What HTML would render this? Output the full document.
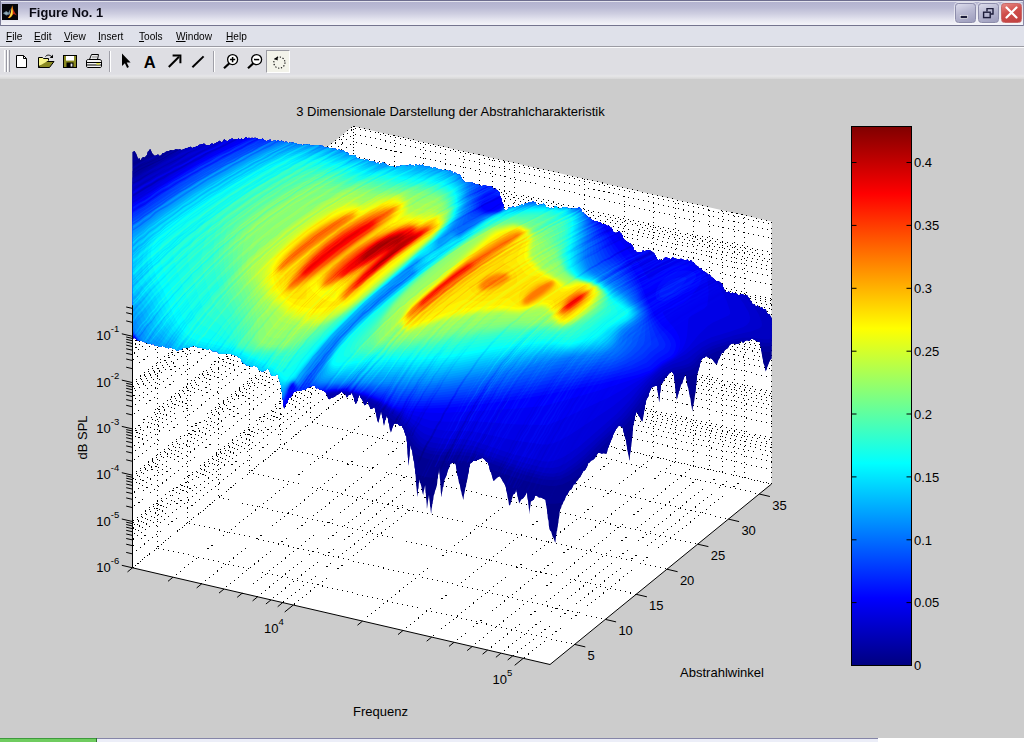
<!DOCTYPE html>
<html><head><meta charset="utf-8"><title>Figure No. 1</title>
<style>
html,body{margin:0;padding:0}
body{width:1024px;height:742px;overflow:hidden;background:#cccccc;position:relative;font-family:"Liberation Sans",Arial,sans-serif}
.g{stroke-dasharray:1 4.1}
.g2{stroke-dasharray:1 2}
#tb{position:absolute;left:0;top:0;width:1024px;height:26px;box-sizing:border-box;
 background:linear-gradient(to bottom,#6d6d8e 0,#6d6d8e 1px,#e4e4ee 1px,#e4e4ee 2px,#b3b3cf 2px,#bcbcd5 8px,#cfcfe1 14px,#e6e6f0 20px,#f2f2f8 24px,#f2f2f8 25px,#74748f 25px);
 border-left:1px solid #7c7c98;border-right:1px solid #8c8ca8}
#tb .ttl{position:absolute;left:27.5px;top:5.2px;font:bold 13.5px/16px "Liberation Sans",Arial,sans-serif;color:#0a0a14;white-space:nowrap;display:inline-block;transform-origin:0 0;transform:scaleX(.95)}
.wb{position:absolute;top:2.5px;width:20.5px;height:20px;border-radius:3.5px;box-sizing:border-box;border:1px solid #8d8dab;
 background:linear-gradient(160deg,#dcdcec 0,#b9b9d2 45%,#9c9cbc 100%);box-shadow:0 0 0 1px rgba(255,255,255,.55)}
.wb.cl{background:linear-gradient(160deg,#e88a84 0,#cf4d4a 45%,#c04040 100%);border-color:#c86a6a}
#mb{position:absolute;left:0;top:26px;width:1024px;height:20px;background:#dfe1ea}
#mb span{position:absolute;top:2.5px;font:11px/14px "Liberation Sans",Arial,sans-serif;color:#000;white-space:nowrap;display:inline-block;transform-origin:0 0;transform:scaleX(.92)}
#mb u{text-decoration:underline;text-underline-offset:1px}
#sep{position:absolute;left:0;top:46px;width:1024px;height:2px;background:linear-gradient(to bottom,#9b9ba3 0,#9b9ba3 1px,#fbfbfd 1px)}
#tl{position:absolute;left:0;top:48px;width:1024px;height:31px;background:linear-gradient(to bottom,#dedee3 0,#dedee3 26px,#e6e6e8 28px,#d6d6d6 31px)}
#tl .grip{position:absolute;left:4px;top:2px;width:6px;height:22px;background:linear-gradient(to right,#fff 0,#fff 1px,#e4e4e8 1px,#e4e4e8 2px,#9a9aa4 2px,#9a9aa4 3px,#fff 3px,#fff 4px,#e4e4e8 4px,#e4e4e8 5px,#9a9aa4 5px)}
#tl .vs{position:absolute;top:3px;width:2px;height:21px;background:linear-gradient(to right,#a0a0a8 0,#a0a0a8 1px,#fff 1px)}
#tl .pressed{position:absolute;left:266px;top:2px;width:24px;height:23px;box-sizing:border-box;background:#f3f3ea;border:1px solid;border-color:#9a9aa2 #fff #fff #9a9aa2}
#tlsvg{position:absolute;left:0;top:48px}
#bot{position:absolute;left:0;top:738px;width:878px;height:4px;background:linear-gradient(to bottom,#8585a8 0,#8585a8 1px,#eceef8 1px)}
#bot i{position:absolute;left:0;top:0;width:96px;height:4px;background:linear-gradient(to bottom,#3d9a3d 0,#3d9a3d 1px,#6fcc5f 1px);border-right:1px solid #2f6f2f}
#botw{position:absolute;left:878px;top:738px;width:146px;height:4px;background:#fff}

</style></head><body>
<svg width="1024" height="742" viewBox="0 0 1024 742" style="position:absolute;left:0;top:0">
<polygon points="132.5,567.8 550.0,664.5 771.5,484.0 771.5,221.5 353.0,126.2 132.5,305.3" fill="#fff"/>
<g fill="none" stroke="#000" stroke-width="1" shape-rendering="crispEdges"><path class="g" stroke-dashoffset="1.2" d="M173.0,577.2 L394.5,396.7"/><path class="g" stroke-dashoffset="0.5" d="M201.7,583.8 L423.2,403.3"/><path class="g" stroke-dashoffset="2.0" d="M224.0,589.0 L445.5,408.5"/><path class="g" stroke-dashoffset="0.8" d="M242.2,593.2 L463.7,412.7"/><path class="g" stroke-dashoffset="0.3" d="M257.6,596.8 L479.1,416.3"/><path class="g" stroke-dashoffset="2.0" d="M271.0,599.9 L492.5,419.4"/><path class="g" stroke-dashoffset="4.6" d="M282.7,602.6 L504.2,422.1"/><path class="g" stroke-dashoffset="4.0" d="M293.3,605.0 L514.8,424.5"/><path class="g" stroke-dashoffset="3.8" d="M362.5,621.1 L584.0,440.6"/><path class="g" stroke-dashoffset="1.1" d="M403.0,630.5 L624.5,450.0"/><path class="g" stroke-dashoffset="2.7" d="M431.7,637.1 L653.2,456.6"/><path class="g" stroke-dashoffset="1.4" d="M454.0,642.3 L675.5,461.8"/><path class="g" stroke-dashoffset="0.9" d="M472.2,646.5 L693.7,466.0"/><path class="g" stroke-dashoffset="0.5" d="M487.6,650.1 L709.1,469.6"/><path class="g" stroke-dashoffset="1.1" d="M501.0,653.1 L722.5,472.6"/><path class="g" stroke-dashoffset="4.6" d="M512.7,655.9 L734.2,475.4"/><path class="g" stroke-dashoffset="4.1" d="M523.3,658.3 L744.8,477.8"/><path class="g" stroke-dashoffset="4.0" d="M157.1,547.7 L574.6,644.4"/><path class="g" stroke-dashoffset="4.0" d="M187.9,522.7 L605.4,619.4"/><path class="g" stroke-dashoffset="1.0" d="M218.6,497.6 L636.1,594.3"/><path class="g" stroke-dashoffset="1.5" d="M249.4,472.5 L666.9,569.2"/><path class="g" stroke-dashoffset="3.1" d="M280.2,447.5 L697.7,544.2"/><path class="g" stroke-dashoffset="3.7" d="M310.9,422.4 L728.4,519.1"/><path class="g" stroke-dashoffset="4.3" d="M341.7,397.3 L759.2,494.0"/><path class="g" stroke-dashoffset="4.4" d="M157.1,547.7 L157.1,285.2"/><path class="g" stroke-dashoffset="0.4" d="M187.9,522.7 L187.9,260.2"/><path class="g" stroke-dashoffset="3.0" d="M218.6,497.6 L218.6,235.1"/><path class="g" stroke-dashoffset="3.4" d="M249.4,472.5 L249.4,210.0"/><path class="g" stroke-dashoffset="2.5" d="M280.2,447.5 L280.2,185.0"/><path class="g" stroke-dashoffset="0.9" d="M310.9,422.4 L310.9,159.9"/><path class="g" stroke-dashoffset="2.4" d="M341.7,397.3 L341.7,134.8"/><path class="g" stroke-dashoffset="0.4" d="M132.5,553.9 L354.0,373.4"/><path class="g" stroke-dashoffset="4.7" d="M132.5,545.7 L354.0,365.2"/><path class="g" stroke-dashoffset="4.3" d="M132.5,539.9 L354.0,359.4"/><path class="g" stroke-dashoffset="2.7" d="M132.5,535.4 L354.0,354.9"/><path class="g" stroke-dashoffset="1.5" d="M132.5,531.8 L354.0,351.3"/><path class="g" stroke-dashoffset="4.5" d="M132.5,528.7 L354.0,348.2"/><path class="g" stroke-dashoffset="2.9" d="M132.5,526.0 L354.0,345.5"/><path class="g" stroke-dashoffset="4.4" d="M132.5,523.6 L354.0,343.1"/><path class="g" stroke-dashoffset="4.2" d="M132.5,521.5 L354.0,341.0"/><path class="g" stroke-dashoffset="2.5" d="M132.5,507.6 L354.0,327.1"/><path class="g" stroke-dashoffset="2.1" d="M132.5,499.4 L354.0,318.9"/><path class="g" stroke-dashoffset="3.0" d="M132.5,493.6 L354.0,313.1"/><path class="g" stroke-dashoffset="2.2" d="M132.5,489.1 L354.0,308.6"/><path class="g" stroke-dashoffset="0.8" d="M132.5,485.5 L354.0,305.0"/><path class="g" stroke-dashoffset="1.5" d="M132.5,482.4 L354.0,301.9"/><path class="g" stroke-dashoffset="4.1" d="M132.5,479.7 L354.0,299.2"/><path class="g" stroke-dashoffset="0.2" d="M132.5,477.3 L354.0,296.8"/><path class="g" stroke-dashoffset="0.2" d="M132.5,475.2 L354.0,294.7"/><path class="g" stroke-dashoffset="3.1" d="M132.5,461.3 L354.0,280.8"/><path class="g" stroke-dashoffset="1.4" d="M132.5,453.1 L354.0,272.6"/><path class="g" stroke-dashoffset="2.7" d="M132.5,447.3 L354.0,266.8"/><path class="g" stroke-dashoffset="2.4" d="M132.5,442.8 L354.0,262.3"/><path class="g" stroke-dashoffset="1.7" d="M132.5,439.2 L354.0,258.7"/><path class="g" stroke-dashoffset="5.0" d="M132.5,436.1 L354.0,255.6"/><path class="g" stroke-dashoffset="1.0" d="M132.5,433.4 L354.0,252.9"/><path class="g" stroke-dashoffset="2.1" d="M132.5,431.0 L354.0,250.5"/><path class="g" stroke-dashoffset="1.0" d="M132.5,428.9 L354.0,248.4"/><path class="g" stroke-dashoffset="3.2" d="M132.5,415.0 L354.0,234.5"/><path class="g" stroke-dashoffset="1.4" d="M132.5,406.8 L354.0,226.3"/><path class="g" stroke-dashoffset="1.8" d="M132.5,401.0 L354.0,220.5"/><path class="g" stroke-dashoffset="3.7" d="M132.5,396.5 L354.0,216.0"/><path class="g" stroke-dashoffset="1.6" d="M132.5,392.9 L354.0,212.4"/><path class="g" stroke-dashoffset="2.8" d="M132.5,389.8 L354.0,209.3"/><path class="g" stroke-dashoffset="4.5" d="M132.5,387.1 L354.0,206.6"/><path class="g" stroke-dashoffset="0.5" d="M132.5,384.7 L354.0,204.2"/><path class="g" stroke-dashoffset="0.3" d="M132.5,382.6 L354.0,202.1"/><path class="g" stroke-dashoffset="1.1" d="M132.5,368.7 L354.0,188.2"/><path class="g" stroke-dashoffset="3.8" d="M132.5,360.5 L354.0,180.0"/><path class="g" stroke-dashoffset="3.1" d="M132.5,354.7 L354.0,174.2"/><path class="g" stroke-dashoffset="1.2" d="M132.5,350.2 L354.0,169.7"/><path class="g" stroke-dashoffset="1.7" d="M132.5,346.6 L354.0,166.1"/><path class="g" stroke-dashoffset="0.9" d="M132.5,343.5 L354.0,163.0"/><path class="g" stroke-dashoffset="2.3" d="M132.5,340.8 L354.0,160.3"/><path class="g" stroke-dashoffset="0.2" d="M132.5,338.4 L354.0,157.9"/><path class="g" stroke-dashoffset="3.5" d="M132.5,336.3 L354.0,155.8"/><path class="g" stroke-dashoffset="4.5" d="M132.5,322.4 L354.0,141.9"/><path class="g" stroke-dashoffset="4.8" d="M132.5,314.2 L354.0,133.7"/><path class="g" stroke-dashoffset="3.7" d="M132.5,308.4 L354.0,127.9"/><path class="g" stroke-dashoffset="4.8" d="M394.5,396.7 L394.5,134.2"/><path class="g" stroke-dashoffset="0.1" d="M423.2,403.3 L423.2,140.8"/><path class="g" stroke-dashoffset="1.4" d="M445.5,408.5 L445.5,146.0"/><path class="g" stroke-dashoffset="4.8" d="M463.7,412.7 L463.7,150.2"/><path class="g" stroke-dashoffset="3.9" d="M479.1,416.3 L479.1,153.8"/><path class="g" stroke-dashoffset="2.1" d="M492.5,419.4 L492.5,156.9"/><path class="g" stroke-dashoffset="4.7" d="M504.2,422.1 L504.2,159.6"/><path class="g" stroke-dashoffset="3.1" d="M514.8,424.5 L514.8,162.0"/><path class="g" stroke-dashoffset="4.1" d="M584.0,440.6 L584.0,178.1"/><path class="g" stroke-dashoffset="1.5" d="M624.5,450.0 L624.5,187.5"/><path class="g" stroke-dashoffset="1.0" d="M653.2,456.6 L653.2,194.1"/><path class="g" stroke-dashoffset="2.2" d="M675.5,461.8 L675.5,199.3"/><path class="g" stroke-dashoffset="0.7" d="M693.7,466.0 L693.7,203.5"/><path class="g" stroke-dashoffset="1.9" d="M709.1,469.6 L709.1,207.1"/><path class="g" stroke-dashoffset="4.8" d="M722.5,472.6 L722.5,210.1"/><path class="g" stroke-dashoffset="1.7" d="M734.2,475.4 L734.2,212.9"/><path class="g" stroke-dashoffset="0.0" d="M744.8,477.8 L744.8,215.3"/><path class="g" stroke-dashoffset="0.2" d="M354.0,373.4 L771.5,470.1"/><path class="g" stroke-dashoffset="0.8" d="M354.0,365.2 L771.5,461.9"/><path class="g" stroke-dashoffset="3.9" d="M354.0,359.4 L771.5,456.1"/><path class="g" stroke-dashoffset="1.8" d="M354.0,354.9 L771.5,451.6"/><path class="g" stroke-dashoffset="1.5" d="M354.0,351.3 L771.5,448.0"/><path class="g" stroke-dashoffset="0.5" d="M354.0,348.2 L771.5,444.9"/><path class="g" stroke-dashoffset="4.9" d="M354.0,345.5 L771.5,442.2"/><path class="g" stroke-dashoffset="2.1" d="M354.0,343.1 L771.5,439.8"/><path class="g" stroke-dashoffset="1.0" d="M354.0,341.0 L771.5,437.7"/><path class="g" stroke-dashoffset="0.3" d="M354.0,327.1 L771.5,423.8"/><path class="g" stroke-dashoffset="0.3" d="M354.0,318.9 L771.5,415.6"/><path class="g" stroke-dashoffset="0.8" d="M354.0,313.1 L771.5,409.8"/><path class="g" stroke-dashoffset="3.4" d="M354.0,308.6 L771.5,405.3"/><path class="g" stroke-dashoffset="0.7" d="M354.0,305.0 L771.5,401.7"/><path class="g" stroke-dashoffset="0.2" d="M354.0,301.9 L771.5,398.6"/><path class="g" stroke-dashoffset="2.5" d="M354.0,299.2 L771.5,395.9"/><path class="g" stroke-dashoffset="1.2" d="M354.0,296.8 L771.5,393.5"/><path class="g" stroke-dashoffset="5.0" d="M354.0,294.7 L771.5,391.4"/><path class="g" stroke-dashoffset="0.6" d="M354.0,280.8 L771.5,377.5"/><path class="g" stroke-dashoffset="2.6" d="M354.0,272.6 L771.5,369.3"/><path class="g" stroke-dashoffset="3.9" d="M354.0,266.8 L771.5,363.5"/><path class="g" stroke-dashoffset="2.0" d="M354.0,262.3 L771.5,359.0"/><path class="g" stroke-dashoffset="4.9" d="M354.0,258.7 L771.5,355.4"/><path class="g" stroke-dashoffset="2.4" d="M354.0,255.6 L771.5,352.3"/><path class="g" stroke-dashoffset="1.2" d="M354.0,252.9 L771.5,349.6"/><path class="g" stroke-dashoffset="2.1" d="M354.0,250.5 L771.5,347.2"/><path class="g" stroke-dashoffset="0.2" d="M354.0,248.4 L771.5,345.1"/><path class="g" stroke-dashoffset="2.1" d="M354.0,234.5 L771.5,331.2"/><path class="g" stroke-dashoffset="1.2" d="M354.0,226.3 L771.5,323.0"/><path class="g" stroke-dashoffset="4.4" d="M354.0,220.5 L771.5,317.2"/><path class="g" stroke-dashoffset="4.2" d="M354.0,216.0 L771.5,312.7"/><path class="g" stroke-dashoffset="2.5" d="M354.0,212.4 L771.5,309.1"/><path class="g" stroke-dashoffset="0.2" d="M354.0,209.3 L771.5,306.0"/><path class="g" stroke-dashoffset="1.3" d="M354.0,206.6 L771.5,303.3"/><path class="g" stroke-dashoffset="1.2" d="M354.0,204.2 L771.5,300.9"/><path class="g" stroke-dashoffset="1.0" d="M354.0,202.1 L771.5,298.8"/><path class="g" stroke-dashoffset="1.2" d="M354.0,188.2 L771.5,284.9"/><path class="g" stroke-dashoffset="4.3" d="M354.0,180.0 L771.5,276.7"/><path class="g" stroke-dashoffset="0.7" d="M354.0,174.2 L771.5,270.9"/><path class="g" stroke-dashoffset="0.3" d="M354.0,169.7 L771.5,266.4"/><path class="g" stroke-dashoffset="4.6" d="M354.0,166.1 L771.5,262.8"/><path class="g" stroke-dashoffset="2.8" d="M354.0,163.0 L771.5,259.7"/><path class="g" stroke-dashoffset="5.0" d="M354.0,160.3 L771.5,257.0"/><path class="g" stroke-dashoffset="2.0" d="M354.0,157.9 L771.5,254.6"/><path class="g" stroke-dashoffset="4.5" d="M354.0,155.8 L771.5,252.5"/><path class="g" stroke-dashoffset="3.3" d="M354.0,141.9 L771.5,238.6"/><path class="g" stroke-dashoffset="4.0" d="M354.0,133.7 L771.5,230.4"/><path class="g" stroke-dashoffset="3.7" d="M354.0,127.9 L771.5,224.6"/><path class="g2" stroke-dashoffset="2.5" d="M132.5,567.8 L354.0,387.3"/><path class="g2" stroke-dashoffset="0.5" d="M354.0,387.3 L771.5,484.0"/><path class="g2" stroke-dashoffset="1.1" d="M354.0,387.3 L353.0,126.2"/><path class="g" stroke-dashoffset="4.4" d="M132.5,305.3 L353.0,126.2"/><path class="g" stroke-dashoffset="4.5" d="M353.0,126.2 L771.5,221.5"/><path class="g" stroke-dashoffset="4.6" d="M771.5,484.0 L771.5,221.5"/></g>
<defs><clipPath id="sil"><polygon points="132.6,152 134.7,151 135.5,152.8 136.2,153.7 137,156 138.2,158.9 139.3,158.1 140.5,160.4 141.9,158.1 143.2,156.9 144.6,157.4 146,156 146.9,155.1 147.7,151.8 148.6,151.2 149.4,149.7 150.3,149 151.2,150.9 152,153 153.5,154.7 155,156 156.6,155 158.1,154.5 159.7,155.9 161.2,155.2 162.8,153 164.3,153.1 165.9,151.8 167.4,151.3 169,151 170.6,150.3 172.1,150.4 173.7,150.6 175.2,149.6 176.8,149.4 178.3,149.8 179.8,149.6 181.4,150.1 182.9,149.8 184.5,149 186,148.3 187.5,147.9 189,147.5 190.5,146.7 192,148.3 193.5,147.6 195,147.3 196.5,146.5 198,146 199.6,144.8 201.1,144.8 202.7,144.1 204.2,143.7 205.8,145.2 207.3,144.9 208.9,145.7 210.4,144.5 212,143.6 213.5,144.4 215,143.5 216.5,142.8 218,142.2 219.6,140.7 221.1,142.5 222.6,142.1 224.1,139.5 225.6,140.3 227.2,141.7 228.9,140.1 230.5,139.5 232.1,138.4 233.7,140.1 235.4,139.6 237,139.7 238.5,138.6 240,139.8 241.5,138.5 243,140.3 244.5,138.2 246,137.1 247.5,138.7 249,137.7 250.5,139 252,137.8 253.5,138.8 255,137.8 256.5,138.6 258,139.1 259.5,139.2 261,139.3 262.6,138.7 264.1,140.2 265.6,141.1 267.1,141.2 268.6,140.3 270.2,139.8 271.8,141.8 273.3,141.2 274.9,140 276.5,141.6 278.1,140 279.7,142 281.3,140.7 282.8,141.5 284.4,142.5 286,141.7 287.5,142.6 289,143.8 290.4,141.9 291.9,143.5 293.4,142.2 294.9,143.8 296.4,143.5 297.9,145.1 299.4,144.6 300.8,144.2 302.3,145.6 303.8,144.8 305.4,144.2 307,145.1 308.7,144.3 310.3,145.3 311.9,145.7 313.5,145.8 315.1,144.9 316.8,145 318.4,145.2 320,146 321.6,145.5 323.1,146.6 324.6,147.7 326.2,147.7 327.8,147.6 329.3,148.1 330.9,148.3 332.4,149.1 334,148.3 335.6,149.1 337.1,151 338.7,149.3 340.3,151 341.9,150 343.4,150.5 345,152 346.5,153.1 347.9,152.7 349.4,155.5 350.9,155.7 352.3,155.6 353.8,155.2 355.2,155.5 356.7,157.9 358.2,158.7 359.8,159.1 361.3,159.5 362.8,159.3 364.4,160.6 365.9,159.1 367.4,160.1 369,161.3 370.5,161.7 372.1,161.4 373.6,161 375.1,162.7 376.7,163.3 378.2,162.8 379.7,164.7 381.1,163.5 382.6,162.6 384.1,163.3 385.5,163.9 387,165.3 388.5,165.9 389.9,166.5 391.4,166.4 392.9,166.8 394.3,167 395.8,167.1 397.3,166.7 398.8,166.8 400.4,166.1 401.9,165.3 403.4,165 404.9,165.3 406.5,165.9 408,165.7 409.5,164.4 411.2,165.3 412.8,165 414.5,166.5 416.2,164.1 417.9,166.2 419.5,164.8 421.2,165.7 422.8,164.4 424.3,166.5 425.9,166.8 427.5,166.4 429,165.9 430.6,167.2 432.2,168.7 433.8,167.2 435.3,167.4 436.9,168.7 438.4,169.2 439.9,169.4 441.4,169.4 442.9,171.1 444.4,169.4 445.9,170.7 447.4,170.6 448.9,171.3 450.4,170.5 451.9,171.4 453.4,173.2 454.9,172.7 456.4,173.5 457.6,175.2 458.8,174.4 460.1,175 461.3,177.4 462.5,180.3 463.8,180.7 465,182.6 466.2,182.3 467.8,182.5 469.4,182.5 471,182.5 472.6,182.6 474.2,183.8 475.8,184.8 477.4,184 479,185.4 480.6,185.7 482.2,186.3 483.8,185.3 485.3,185 486.8,186.5 488.3,185.9 489.8,186.7 491.2,186.6 492.6,187.2 494,190.1 495.3,188.5 496.7,190.5 498.1,190.9 499.5,192.6 499.9,194.7 500.3,196.9 500.7,196.6 501.1,198.3 501.5,199.5 501.9,201.6 502.4,203.6 502.8,205.5 503.2,204.1 503.6,208.7 504,208.6 504.4,210.2 505.9,210.3 507.3,210.2 508.8,207.5 510.2,208.4 511.7,207 513.2,206.7 514.6,207.9 516.1,206.8 517.5,206.6 519,206.2 520.5,205.3 522.1,204.1 523.6,205.6 525.1,203.6 526.7,203.7 528.2,203 529.7,202.1 531.3,202.6 532.8,201.4 534.1,202.2 535.4,202.7 536.7,205.3 538.4,206.1 540.1,204.3 541.8,204.9 543.5,203.3 544.5,205.1 545.5,205 546.5,208.2 548.2,207.1 549.8,209.4 551.5,207.7 553.2,209.4 554.9,206.6 556.5,206.6 558.2,208.2 559.9,209 561.6,208.3 563.3,207.5 564.9,207.3 566.6,207.3 568.3,209 570,208.2 571.5,209 573.1,208.8 574.6,208.3 576.1,208.2 577.6,208.1 579.2,207.6 580.7,208.2 581.7,211.5 582.6,212.5 583.6,213.1 584.8,214.7 586,214.8 587.1,216.7 588.3,217 589.5,218 591,219.6 592.4,220.1 593.9,221 595.4,221 596.8,220.9 598.3,222.3 599.7,222.2 601.2,222.9 602.8,224.4 604.3,224.3 605.9,224.9 607.4,226 609,225.8 610,228.2 611,227.5 612,228.7 613,231.7 614.6,232.5 616.1,233.2 617.7,232 619.2,231.6 620.8,233.6 621.6,234.1 622.4,235.7 623.1,238.2 623.9,239.1 624.7,240.5 626.2,240.9 627.6,242.3 629,243.1 630.5,243.4 631.3,244.7 632.2,245.4 633,246.7 633.9,250.1 634.7,251 635.6,250.4 636.4,252.2 638.1,251.9 639.7,252.1 641.4,252.4 643,250.5 644.7,251.5 646.3,250.5 648,250.2 649.7,250.3 651.3,251.4 653,252.2 653.8,254.1 654.7,253.8 655.5,256.2 656.3,257.3 657.2,259.3 658,261 659.6,259.2 661.2,261.1 662.9,260 664.5,258 666.1,257.5 667.7,258 669.4,258.7 671,259.2 672.7,257.3 674.3,258.4 676,258.7 677.6,259.4 679.3,259.8 680.9,258.8 682.6,259.2 684.2,260.5 685.8,260.6 687.5,259.6 689.1,262.2 690.7,260.1 692.3,262.1 693.5,262.5 694.8,264.2 696,265.8 697.2,265.9 698.4,266.9 699.6,269 700.9,268.6 702.1,270 703.3,271.8 704.5,271.8 705.8,272.5 707,273.4 708.2,275 709.5,274.4 710.7,276.3 711.9,277.8 713.3,278.1 714.7,279.9 716.1,281 717.5,281.6 718.9,281.4 720.3,282.8 721.7,283.6 722.4,284.4 723,286.8 723.7,288.9 724.3,289.8 725,290.5 725.6,292.4 727.3,292.8 728.9,291.5 730.6,293.9 732.3,292.6 734,294 735.6,293.1 737.3,294.4 738.9,296 740.6,294 742.2,293.9 743.8,294.9 745.5,295.2 747.1,295.3 747.9,298.1 748.8,297.5 749.6,298.7 750.5,301.2 751.3,301.2 752.2,303.8 753,305.1 754.5,304.1 755.9,307.4 757.4,305.2 758.9,307.2 760.3,308 761.8,306.9 763.2,309 764.7,309 765.7,309 766.6,312.3 767.6,314 768.6,314.5 769.6,314.2 770.5,316.7 771.5,318 771.5,358.6 770.3,359.8 769.2,361.9 768,365 767.2,367.1 766.4,369.9 765.6,371.4 765.1,368.7 764.6,365.6 764,364.5 763.5,363.1 763,360 762.6,357.8 762.3,356.3 761.9,354.2 761.6,351.6 761.2,349.7 760.9,346.8 760.5,346.9 760.2,343.1 759.8,342 757.4,341.6 755,340 753,338.9 751,339.1 749,341.1 747,340 745,341 743.1,342.8 741.1,340.8 739.2,343.6 737.2,343.8 735.3,344.2 733.4,343.2 731.4,343.7 729.5,345 727.9,347.9 726.4,349 724.8,350.1 723.3,352.7 721.7,352.8 720.9,355.3 720.1,356.5 719.2,358.8 718.4,359.8 717.6,362.3 716.8,364.5 715.2,363.2 713.5,361 711.9,358.7 709.9,358 708,357.4 706,355.7 704.3,358.1 702.7,358.1 701,360.6 700.5,362.6 699.9,364.3 699.4,367.1 698.8,368.4 698.3,370.4 697.7,372.8 697.2,374.3 697,376.6 696.8,380.2 696.6,380 696.4,382.8 696.1,384.8 695.9,388.8 695.7,389.2 695.5,391.4 695.3,393.8 694.9,396.1 694.5,399.6 694.2,401.2 693.8,403.2 693.4,405.7 693,406.8 692.7,408.7 692.3,411.4 691.9,408.8 691.6,405.9 691.2,405.4 690.8,401.7 690.5,399.1 690.1,397.6 689.8,397 689.4,393.8 689,391.9 688.5,387.9 688.1,387.4 687.7,386.1 687.2,383.8 686.8,381 686.4,378.9 685.9,375.2 685.5,374.3 684.7,375.8 683.9,378.1 683,380.5 682.2,383.6 681.4,384 680.6,386 680,388.3 679.5,390.8 678.9,391.2 678.4,393.7 677.8,395.5 677.3,397.8 676.7,399.7 676.5,396.8 676.2,394.7 676,393.8 675.7,392.6 675.5,389.3 675.2,387.6 675,385.1 674.8,382.3 674.5,380.9 674.3,378.1 674,376.2 673.8,374.3 671.8,371.4 670.1,372.6 668.4,374.3 666.7,376.8 665,378.2 663.7,380.4 662.3,383.3 661,384 660.8,386.1 660.6,388.2 660.4,390.7 660.2,392.8 659.9,393 659.7,397.7 659.5,398.9 659.3,401.1 659.1,402.6 658.9,399.7 658.6,396.8 658.4,395.3 658.1,394.6 657.9,392.6 657.6,389.8 657.4,387.6 657.1,386 655.2,386 653.2,386.5 651.3,388 650.5,389.9 649.7,391 649,393.6 648.2,396.8 647.4,397.8 646.2,400 645.8,402.6 645.4,404.7 645,405.2 644.6,409.3 644.2,409.9 643.9,413.8 643.5,414.6 643.1,417.5 642.7,419.6 642.3,421.5 641.1,419.9 639.9,417.2 638.8,416.1 637.6,413 636.4,411.7 635.9,414 635.4,415 635,416.6 634.5,420.3 634,421.5 633.5,423.5 633.3,425.2 633.1,426.1 632.9,430.4 632.6,430.9 632.4,434.8 632.2,437.4 632,436.8 631.8,440.2 631.5,441.8 631.3,443.7 631.1,447 630.9,446.7 630.7,450.4 630.5,451.2 630.2,453.6 630,455.7 629.8,458.5 629.6,460.6 629.2,460 628.8,456.7 628.4,455.1 628,452.8 627.6,450.3 627.2,448.4 626.8,445.5 626.4,442.9 626,440.3 625.6,439 625,437.3 624.4,435.1 623.9,433.1 623.3,430.6 622.7,427.4 620.8,426.2 618.8,425.4 617.6,427 616.4,428.5 615.3,430.6 614.1,432.8 612.9,435.2 612.1,438.2 611.4,439.6 610.6,441.4 609.9,443.5 609.1,445.2 608.4,447.3 607.6,449.2 606.9,453.1 606.1,453.8 603.8,453.2 601.6,453.4 599.3,452.8 597.7,453.3 596,456.3 594.4,458.5 592.8,460.1 591.1,460.6 589.5,462.6 588.3,462.9 587.2,466.3 586,468.4 584.8,470.5 583.6,470.4 582.5,472.8 581.3,474.9 580.1,477.3 579,478.1 577.8,480.2 576.5,480.9 575.2,484.5 573.9,484.1 572.6,487.1 571.2,489.5 569.9,490.1 568.6,492.1 567.3,494.9 566,495.8 565.2,498.2 564.3,500.5 563.5,501.3 562.7,504.3 561.9,505.1 561,508.2 560.2,509.5 559.9,511.1 559.6,512.8 559.3,515.6 559,518 558.7,518.9 558.4,522.8 558.1,523.8 557.8,526.6 557.4,528.2 557.1,530.7 556.8,531.1 556.5,533.4 556.2,535.6 555.9,537.5 555.6,541.1 555.3,542.7 554.5,541 553.6,537.9 552.8,537.3 551.9,534.3 551.1,531.4 550.2,530.7 549.4,529 549.1,527 548.8,525.2 548.6,521.8 548.3,519.8 548,519.4 547.7,517.3 547.5,514.4 547.2,513.8 546.9,509.3 546.6,508 546.3,505.7 546.1,505.2 545.8,502 545.5,499.7 543.3,498.8 541.1,497.6 538.9,497.5 536.7,495.8 535.2,495.8 533.8,499.7 532.3,500.6 530.8,501.7 530.6,504.7 530.4,505 530.1,507.4 529.9,508.7 529.7,511.6 529.5,514.4 529.3,511.3 529,509.6 528.8,508 528.6,505.4 528.3,504.4 528.1,501.2 527.8,499.4 527.6,497.9 527.4,496.6 527.1,493 526.9,491.9 525.8,494.4 524.7,496.3 523.6,497.8 522.4,498.9 521.3,499.5 520.2,501.6 519.1,503.6 518.7,500.7 518.3,499.8 517.9,497.8 517.4,495 517,492.5 516.6,491.9 516.2,489 515.3,492.4 514.5,494 513.6,493.8 512.8,495.9 511.9,499.3 511,502.2 510.2,505 509.3,505.6 508.9,504.6 508.4,500.8 508,498.9 507.6,497.6 507.1,493.9 506.7,491.5 506.3,490.2 505.8,486.9 505.4,486 504.2,483.3 503,481.8 501.9,479.6 500.7,477.4 499.5,476.2 497.6,477.2 495.6,479 493.7,481.1 493,479.4 492.4,477.3 491.7,474.8 491.1,472.2 490.4,472.1 489.8,469.9 489.1,466.3 488.5,464.8 487.8,462.6 486.1,461.5 484.5,459.3 482.8,458 481,458.2 479.1,459.2 477.3,460 475.5,461 473.7,460.6 471.8,462.4 470,463.8 469.6,467 469.2,467.3 468.8,471.5 468.4,473.2 468,474.9 467.6,476.7 467.2,479.5 466.8,482.4 466.4,483 466,486.6 465.6,487.3 465.2,488.7 464.8,491.5 464.4,493.3 464,494.8 463.6,498.2 463.2,500 462.7,497.3 462.2,495.7 461.8,494.4 461.3,491.8 460.8,490.6 460.3,488.1 459.8,484.6 459.4,483.9 458.9,482.4 458.4,479.5 458,476.6 457.5,475.4 457.1,473.4 456.7,470.2 456.3,468 455.8,464.8 455.4,463.8 452.9,462.8 450.5,463.8 449.8,465.1 449.1,467.8 448.3,469.3 447.6,471.1 446.9,473.9 446.1,476.2 445.4,477.6 444.7,479.5 444.3,481.1 443.8,484.1 443.4,487 442.9,487.2 442.5,490.7 442.1,492.3 441.6,495.9 441.2,497 441.1,494.1 440.9,493.1 440.8,491.6 440.6,488.1 440.5,485.5 440.3,484.5 440.2,482.3 440.1,480.2 439.9,478.2 439.8,474.9 439.6,473.4 439.5,472.4 439.3,469.7 439.2,467.8 438.9,469.8 438.6,472 438.3,473.6 438,475.6 437.8,477.9 437.5,479.4 437.2,483.2 436.9,485.3 436.3,487.5 435.7,489.6 435.1,490.8 434.5,493.7 433.9,495 433.6,496.6 433.3,499.6 432.9,500.9 432.6,504 432.3,503.9 432,507 431.6,508.8 431.3,512.8 431,513.7 430.8,511.3 430.6,509.9 430.3,506.7 430.1,506.7 429.9,503.4 429.7,501.8 429.4,499.5 429.2,498.1 429,495 428.7,497 428.3,499 428,500.9 427.7,503.8 427.3,506.5 427,508.8 426.8,507.6 426.7,504 426.5,502.6 426.3,500 426.1,499 426,496.3 425.8,493.2 425.6,493.1 425.4,490.8 425.3,487.2 425.1,485.3 424.6,488 424.1,490 423.7,491.8 423.2,495 422.6,493.2 422.1,491.6 421.5,487.3 421,485.3 420.4,483.3 419.9,482.7 419.3,479.5 419.1,482.1 418.8,483.8 418.6,487.5 418.3,489.2 418.1,489.1 417.8,493.3 417.6,494.7 417.3,497 417.1,494.9 416.9,491.6 416.8,491.1 416.6,489.1 416.4,486.7 416.2,485.9 416,482.4 415.9,480.3 415.7,476.8 415.5,475.1 415.3,473 415.1,470.7 414.9,468.4 414.8,468.2 414.6,467 414.4,463.8 414,461.8 413.5,460.1 413.1,457.3 412.7,455.2 412.2,451.5 411.8,449.7 411.4,448.6 410.9,446.2 410.5,444.3 410.3,445.9 410.1,448.6 409.9,450.6 409.7,451.8 409.5,456 409.3,456.9 409.1,460 408.9,461.6 408.7,463 408.5,465.8 408.4,464.4 408.2,461.8 408.1,459.1 407.9,457.6 407.8,455.4 407.6,453.5 407.5,449.9 407.4,448.3 407.2,447.3 407.1,444.2 406.9,441.6 406.8,441.3 406.6,439.2 406.5,436.5 405.5,435.2 404.6,432.2 403.6,429.1 402.7,427.7 401.7,425.7 399.7,425.9 397.8,424 395.8,423.4 393.8,423.8 393.1,426.1 392.4,427.7 391.6,430.3 390.9,432.6 390.5,430.6 390,430.1 389.6,427.3 389.2,425 388.7,422.7 388.3,421.4 387.9,418.3 387.4,417.6 387,415 386.4,416.5 385.8,419.3 385.2,420 384.6,422.8 384,425.7 383.6,423.4 383.2,422.6 382.8,418 382.3,417.7 381.9,414.9 381.5,412.3 381.1,411 380.6,412.3 380.1,415.4 379.6,417.3 379.2,419.2 378.7,421.3 378.2,422.8 377.7,421.3 377.2,419.9 376.7,417.2 376.2,414.7 375.8,412.5 375.3,411.3 374.8,407.9 374.3,407.1 372.4,408.4 370.4,409.1 369.6,406.2 368.9,405.2 368.1,402.4 367.4,401.3 365.9,404.8 364.5,405.2 363.5,403 362.5,399.9 361.6,399.1 360.6,397.6 359.6,394.4 358.8,396 358,398.6 357.3,400.9 356.5,402.8 355.7,404.2 355.1,402.1 354.4,401.3 353.8,397.3 353.1,396.6 352.4,392.9 351.8,392.5 350.2,394.7 348.5,395.1 346.9,397.4 345.3,394.1 343.6,394.1 342,391.5 340.2,392.7 338.4,394.3 336.6,395 334.7,396.7 332.9,397.5 331.1,397.9 329.3,399.3 328.3,398.7 327.4,396 326.4,393.7 325.4,391.5 323.6,391.1 321.8,389.6 320,389.8 318.1,387.4 316.3,388.7 314.5,385.3 312.7,385.6 310.9,386.5 309,387.2 307.1,388.1 305.3,389.8 303,389.3 300.6,390.8 298.3,390.3 295.9,391.2 293.6,392.2 292,395.3 290.5,397.3 288.9,398 288,400.3 287,403.2 286.1,403.4 285.1,405.8 284.2,408.6 283.9,407.2 283.6,404.4 283.3,402.4 283,400.1 282.7,398.2 282.4,396.9 282.2,395.2 281.9,390.9 281.6,390.2 281.3,388.5 281,385.5 280.7,384 280,381.4 279.3,380 278.6,376.9 277.9,375 277.2,373.4 274.9,375.7 272.5,375.7 271.3,374.9 270.1,372.6 269,369.6 267.8,368.7 265.5,369.9 263.1,371.3 260.8,371.1 259.2,370.3 257.7,367.6 256.1,366.4 253.8,365.4 251.4,366.7 249.1,365.6 246.7,365.2 245.1,363.6 243.6,363.2 242,361.6 240.4,357.9 238.9,357.6 237.3,355.8 235,355.3 232.6,354.4 230.3,353.5 228,353.5 225.6,353.6 223.2,353.4 220.9,353.5 218.9,353.3 217,351.2 215,351 213,351.2 211.1,349.5 209.1,348.8 207.1,349.7 205.1,348.6 203.1,348.5 201.1,347.2 199.1,347.5 197.1,347 195.1,346 192.8,345.9 190.4,346.4 188.4,348 186.5,347.2 184.6,348 182.6,347.8 180.6,349.9 178.7,349.9 176.7,350.4 174.8,349 172.8,348.8 170.8,346.7 168.9,348.3 166.9,347.6 164.6,347 162.2,345.8 159.8,347 157.5,345.2 155.5,346.1 153.5,343.8 151.5,344.2 149.5,343.4 147.5,343.5 145.5,342.2 143.5,341.7 141.4,340.7 139.3,341 137.1,340.1 135,338 132.9,338.2"/></clipPath>
<path id="c1" d="M163.4 127.5 L163.8 126.5 498.3 126.5 499.9 127.5 505.5 129.5 538.5 139.9 580.5 154.9 615.5 169.9 653.5 189.1 702.5 221.7 735.5 245.1 748.5 255 775.5 278.1 777.5 279.4 777.5 369 771.5 369.7 762.5 369.7 747.5 367.4 739.5 368.6 724.6 373.5 720.6 375.5 710.5 385 705.5 388.5 700.5 391.2 692.5 394.1 682.5 396.3 679.5 397.8 674.9 401.5 670.5 406.4 658 423.5 647.3 436.5 637.5 446.2 620.4 461.5 605.3 476.5 598.5 482.6 584.5 493.1 573.5 499.2 565.5 502.1 555.5 503.7 548.5 503.7 540.5 502.9 523.5 498.9 495.5 489.8 467.1 479.5 459.5 478.7 441.5 478.8 432.5 478.1 425.5 477 415.5 473.9 407.5 470 399.5 463.8 393.9 457.5 384.1 443.5 381.2 440.5 376.3 436.5 370.7 432.5 362.1 427.5 355.6 424.5 345.5 420.7 341.5 420.1 336.5 420.3 320.7 423.5 314.5 425.8 305.5 432.5 296.5 436.8 289.5 438.2 279.5 438.1 273.5 436.9 266.5 434.4 262.5 432.1 252.3 424.5 245.5 421.2 213.4 412.5 165.5 401 158.5 398.9 152.5 396 129.5 380.6 126.5 379.1 126.5 153.2 129.5 151.7 145.5 140.1 158.5 131.9Z"/>
<path id="c2" d="M177.8 138.5 L186.8 126.5 422.5 126.5 482.5 141 530.5 156 572.5 171 608.5 186.3 643.5 203.9 678.5 227 710.5 249.1 734.5 266.7 753.5 282.6 768.5 296 775.5 303.2 777.5 304.8 777.5 349.8 772.5 351.5 769.5 351.9 762.5 351.8 754.5 350.3 747.5 349.5 739.5 350.2 733.5 351.7 718.5 356.7 711.5 360.1 706.5 363.7 699.5 370.9 693.5 374.7 686.5 377.2 677.5 379 669.5 382.9 663.7 387.5 659.5 391.7 652.5 400.4 643.9 412.5 634.1 424.5 625.5 433 608.1 448.5 592.5 464 583.5 471.8 571.5 480.1 562.5 484.4 554.5 485.9 549.5 485.9 542.5 485.1 525.5 480.9 501.5 473 475.9 463.5 470.5 461.9 459.5 460.7 443.5 461 434.5 460.3 428.5 459.3 421.5 457.1 416.5 454.6 411.5 450.5 407.9 446.5 400.6 435.5 395.6 429.5 384.7 420.5 377.2 415.5 368 410.5 358.6 406.5 349.5 403.3 343.5 402.2 338.5 402.1 328 403.5 319 405.5 311.5 407.6 307.5 409.3 302 412.5 296.5 417.1 291.5 419.6 287.5 420.4 281.5 420.3 276.5 419.2 273.5 417.9 261.5 409.2 252.5 404.6 219 395.5 164.5 382.1 159.5 379.3 137.5 364.4 134.5 361.3 128.5 352.1 126.5 350 126.5 173.7 129.5 172.7 136.5 168.6 154.5 155.5 170.2 145.5Z"/>
<path id="c3" d="M202.1 127.5 L204 126.5 386.8 126.5 395 128.5 427.5 133.8 476.5 145.2 527.5 160.9 570.5 176.2 606.5 191.6 640.5 208.6 696.5 246.1 733.5 273.1 750.5 287.4 765.5 300.9 769.5 304.9 777.5 314.4 777.5 342.8 772.5 345.6 769.5 346.3 763.5 346.3 754.2 344.5 746.5 343.9 738.5 344.7 731.4 346.5 716.4 351.5 708.5 355.3 702.5 359.7 695.5 366.9 690.5 369.9 684.5 371.9 676.2 373.5 665.9 378.5 660.5 382.8 654.9 388.5 647.5 397.7 639.9 408.5 629.5 421.1 622.1 428.5 604.5 444.2 588.5 460.1 579.5 467.8 568.5 475.4 560.5 479.2 553.5 480.3 543.5 479.5 525.5 475.1 503.5 467.8 472.3 456.5 459.5 455 444.5 455.4 435.5 454.8 430.5 454 423.5 451.8 419.5 449.8 414.5 445.6 404.6 431.5 399.5 425.3 387.4 415.5 378.1 409.5 368.5 404.5 350.5 397.7 342.9 396.5 337.5 396.5 326.5 398.1 315.9 400.5 308.5 402.7 304.5 404.5 299.4 407.5 293.5 412.3 290.5 413.9 287.5 414.8 282.5 414.8 276.5 413.1 264.5 404.4 254.9 399.5 222.1 390.5 167.5 377.2 161.5 373.9 140.5 359.5 137.9 356.5 128.5 341.5 126.5 339.5 126.5 179.7 131.5 178 139.3 173.5 157.5 160.3 172.9 150.5 181.5 142.8 190.7 131.5 193.5 130Z"/>
<path id="c4" d="M225 127.5 L229.3 126.5 352.6 126.5 377.5 128.9 426.5 136.9 474.5 147.9 526.5 163.9 568.5 178.9 604.5 194.2 638.5 211.3 687.5 244 727.5 272.8 756.5 297.3 765.3 305.5 770.5 311.6 777.5 322.5 777.5 336.7 773.5 340.9 769.5 342.8 763.5 342.7 750.5 340.5 743.5 340.6 737.5 341.3 732.6 342.5 717.4 347.5 712.2 349.5 704.8 353.5 699.5 357.6 694.1 363.5 690.5 366 684.5 368.3 674.5 370.4 664.1 375.5 657.9 380.5 652 386.5 644.5 396 637.1 406.5 627.2 418.5 620.3 425.5 602.5 441.3 586.5 457.2 577.5 464.9 567.5 471.9 560.5 475.5 553.5 476.9 544.5 476.2 526.5 471.7 503.5 464.1 480.5 455.5 472.5 453 459.5 451.5 444.5 451.9 435.5 451.3 430.5 450.4 424.5 448.4 421.5 446.9 417.3 443.5 414.1 439.5 407.5 429.6 402.5 423.5 399.4 420.5 390.5 413.5 381.4 407.5 374 403.5 367.6 400.5 353.9 395.5 344.5 393.8 338.5 393.6 329.8 394.5 319.8 396.5 306 400.5 296.9 405.5 289.5 410.9 286.5 411.7 282.5 411.7 277.5 410.1 265.6 401.5 255.9 396.5 223.3 387.5 168.5 374.2 164.5 372.1 142.5 357 139.8 353.5 128.5 335.6 126.5 333.3 126.5 183.4 132.2 181.5 140.5 176.9 159.5 163.1 174.7 153.5 183.7 145.5 188.5 140 191.6 135.5 193.5 133.9 208.5 129.8Z"/>
<path id="c5" d="M257.5 127.5 L267.1 126.5 333.5 126.6 376.5 130.4 423.5 138 479.5 151 524.5 165 569.5 181.1 604.5 196 637.5 212.9 685.5 245.1 718.5 269.2 729.3 277.5 745.5 291.5 755.5 300.5 764.5 309.4 769.2 315.5 772.7 321.5 774.5 328.5 774.5 331.5 773.8 334.5 771.5 337.8 768.5 339.3 764.5 339.4 751.5 337.5 742.5 337.7 731.5 339.9 715.5 345.1 710.5 347.1 703.5 350.9 697.5 355.6 692.5 361 688.9 363.5 683.6 365.5 673.5 367.7 662.5 373.3 656.5 378.2 650.3 384.5 643 393.5 634.5 405.3 624.5 417.3 618.5 423.3 600.5 439.3 585.1 454.5 575.7 462.5 565.5 469.5 559.5 472.5 552.5 473.8 544.5 473 526.2 468.5 504.9 461.5 473.5 450.2 460.5 448.6 445.5 449 436.5 448.4 431.3 447.5 425.5 445.6 422.5 444 419.4 441.5 409.1 427.5 404.5 422.1 401.5 419.1 394.3 413.5 387 408.5 378.2 403.5 369.4 399.5 355.2 394.5 349.5 393.2 340.5 392.4 336.5 392.5 323.2 394.5 307.6 398.5 296.1 404.5 289.5 409.1 286.5 410.2 282.5 410.4 278.5 409.1 266.5 400.5 259.6 396.5 254.5 394.5 222 385.5 168.5 372.4 159.5 366.8 143.5 355.8 126.5 330.6 126.5 186.5 132.5 184.7 141.5 179.8 161.4 165.5 176.5 156 186.1 147.5 194.4 137.5 195.9 136.5 211.4 132.5 234.5 129 248.5 127.8Z"/>
<path id="c6" d="M249.5 129.3 L296.2 126.5 326.5 127.1 376.5 131.4 425.5 139.5 479.5 152.3 525.2 166.5 569.5 182.4 604.5 197.4 635.5 213.3 670.4 236.5 702.5 259.4 728.5 280.5 740.2 291.5 748.5 300.5 756.4 310.5 758.8 314.5 761.5 321.5 762 324.5 761.7 326.5 759 328.5 751.5 331.2 734.5 335.2 711.5 342.4 701.5 347.7 687.5 358.8 682.5 361.1 672.5 364.2 662.5 369.6 655.3 375.5 648.5 382.4 640.9 391.5 632.5 402.7 621.3 415.5 583.5 450.1 573.5 457.9 565.5 463.3 558.5 466.7 552.5 468 542.5 467.4 527.5 463.8 509.1 458.5 479.5 447.9 472.5 445.8 460.5 444.3 443.5 444.2 433.5 442.8 427.5 441.1 423.5 439.1 420.5 436.8 406.1 420.5 401.5 416.5 395.9 412.5 384.4 405.5 376.4 401.5 366.8 397.5 354.5 393.5 348.5 392.3 338.5 391.7 330.3 392.5 319.8 394.5 311.5 396.5 305.6 398.5 294.3 404.5 288.5 408.4 285.5 409.3 282.5 409.6 278.5 408.2 269.4 401.5 261.3 396.5 257.3 394.5 251.5 392.5 222.5 384.5 168.5 371.2 158.5 364.9 143.8 354.5 126.5 329.2 126.5 192.1 129.5 191.4 134.5 189.2 146.2 182.5 165.5 168.9 180.5 159.4 198.5 144.9 201.5 143.1 231.5 132.1 235.5 131Z"/>
<path id="c7" d="M268.5 129 L303.5 127.3 326.5 127.9 370.5 131.7 377.5 132.5 425.5 140.6 479.5 153.5 524.4 167.5 571.4 184.5 603.6 198.5 632.3 213.5 677.5 243.5 701 260.5 724.6 281.5 736.5 294 743.6 303.5 748.5 312.1 750.1 317.5 749.5 321.5 747.4 324.5 743.5 326.9 730.5 331.5 711.5 337.3 705.5 340.1 699.5 343.6 685.5 354.2 663.1 366.5 647.6 379.5 638.4 389.5 629.5 400.5 616.5 414 580.5 445.5 567.8 454.5 562.6 457.5 555.5 460.3 549.5 461.4 544.5 461.4 539.5 460.6 514 454.5 472.5 440.6 461.5 439.1 450.5 439 443.5 438.4 434.5 437 428.5 435.3 424.5 433.7 420.5 431.1 415.5 426.7 407.4 418.5 398.6 412.5 384.3 404.5 376 400.5 365.9 396.5 352.9 392.5 344.5 391.3 336.5 391.3 326.9 392.5 317.3 394.5 306.5 397.5 293.5 404 287.5 407.7 284.5 408.7 281.5 408.8 278.5 407.5 270.5 401.5 262.5 396.5 258.5 394.3 252.5 391.9 224.5 383.9 173.4 371.5 167.7 369.5 144.5 353.8 138.9 346.5 126.5 328.3 126.5 198.7 130.5 197.4 143.1 190.5 154.1 183.5 170.5 172 192.5 158.1 202.5 152.1 219 143.5 234.5 133.7 238.9 132.5 250.5 130.6Z"/>
<path id="c8" d="M285.8 128.5 L298.5 127.9 317.5 128.2 327.5 128.6 355.5 131.2 377.5 133.5 423.5 141.5 476.7 154.5 524.7 169.5 569.3 185.5 588.9 194.5 607.1 204.5 628.5 219.2 655.5 240.7 671.5 247.2 680.5 251.4 692.5 257.8 700.8 263.5 708.8 271.5 714.8 279.5 719.8 287.5 726.5 300.6 729.9 310.5 730.2 313.5 728.5 315.5 713 322.5 707.5 326.2 698.5 335 688.1 347.5 683.8 351.5 674.5 358.6 665.6 363.5 661.1 366.5 653.5 372.9 645.8 378.5 624.5 397 611.5 407.2 569.5 435.2 555.5 442.4 547.5 444.5 542.5 444.4 516.5 440.8 474.5 431.7 463.5 430.7 452.5 430.9 444.5 430.5 429.5 428.2 422.5 425.4 405.6 414.5 393.5 408.9 379.9 401.5 361.8 394.5 349.5 391.4 341.5 390.7 331.5 391.3 311.5 395.3 305.5 397.3 296.5 402 291.5 403.8 285.4 407.5 281.5 408.2 278.5 406.8 268.5 399.5 260.5 394.7 249.5 390 225.5 382.9 171.6 369.5 168.5 368.3 160.4 363.5 144.5 352.5 140.2 347.5 126.5 327.5 126.5 202.2 131.5 200.6 143.5 193.8 170.5 175.3 191.5 162 201.5 156.1 221.5 145.5 235.5 136.4 245 133.5 250.5 132.4 268.5 130Z"/>
<path id="c9" d="M296.9 128.5 L327.5 129.3 369.5 133.5 388.7 136.5 424 143.5 476.5 157.5 523.5 172.4 559.5 184.8 567.5 187.9 577.5 192.5 584.4 196.5 601.8 208.5 613.1 218.5 652 256.5 654.5 257.1 669.5 257.1 680.5 258.6 692.5 262.3 696.5 264.4 700.5 267.2 703.5 270.5 705.3 273.5 707.7 281.5 708.6 291.5 707.9 300.5 707.1 305.5 704.5 308.4 691.9 315.5 689.2 317.5 688.3 319.5 687.1 335.5 685.4 342.5 683.1 347.5 681.1 350.5 677.7 354.5 674.3 357.5 662.5 364.3 650.5 373.7 610.5 396.4 561.5 419.4 548.5 424.5 545.5 425.1 517.5 424.6 474.5 421.2 463.5 421.1 450.5 421.7 441.5 421.5 430.5 420.5 424.5 418.8 395.5 408.9 382.5 402 368.5 396.2 354.5 391.9 343.5 390.3 336.5 390.3 330.5 391 310.5 395 305.5 396.7 295.5 401.6 293.5 401.9 289.5 401.2 284.8 406.5 282.9 407.5 281.5 407.6 278.5 406.2 267.8 398.5 260.5 394 248.5 388.6 236.9 384.5 219.7 379.5 171.5 367.1 163.5 363.8 146.5 352.9 142.5 349.5 137.9 343.5 126.5 326.9 126.5 205.4 131.5 203.7 144.5 196.1 171.5 177.1 197.5 160.6 228.3 144.5 237.5 139.2 248.5 135.3 263.5 132.1 285.5 129.1Z"/>
<path id="c10" d="M288.3 129.5 L304.5 129 317.5 129.4 334.2 130.5 374.5 135.5 406 141.5 429.5 147.1 474.5 160 557.5 187.1 565.5 190.2 575.5 194.9 581.5 198.8 588.5 204.3 599.9 215.5 618.8 239.5 636.6 260.5 647.5 277.5 649.5 279.5 651.5 278.8 656.4 274.5 663.5 269.7 670.5 266.9 676.6 265.5 682.5 265 691.5 266.1 696.5 268.4 700.1 271.5 701.1 273.5 701.7 276.5 700.5 282.3 698.5 286.3 691.8 295.5 687.5 299.8 682.4 303.5 673.5 307.8 664.5 310.8 663.3 311.5 663 312.5 663.6 314.5 666 318.5 673.5 327.4 676.5 331.8 678.9 336.5 680 340.5 680.2 343.5 679.5 347.5 677.8 351.5 675.7 354.5 672.4 357.5 662.5 363 651.5 371.8 641.5 376.6 600.5 390.1 577.5 396.8 546.5 405.2 540.5 406.3 514.5 408.7 441.5 413 425.5 412.4 407.5 410.5 397.5 408.6 393.5 407.2 381.5 400.8 367.5 395.2 353.5 391.2 343.5 389.9 336.5 389.9 330.5 390.5 311.5 394.2 305.5 396.1 295.5 400.7 294.4 400.5 293.7 399.5 293.1 391.5 292.5 389.4 290.5 391.6 287.2 399.5 284 405.5 283.1 406.5 281.5 406.9 278.5 405.6 267.5 397.7 258.5 392.3 250.8 388.5 238.3 383.5 200.3 372.5 170.5 365.1 162.5 362 146.5 352 142.5 348.8 139 344.5 126.5 326.3 126.5 208.3 129.5 207.6 132.5 206.1 144.9 198.5 167.5 182 198.5 162 219.5 151.1 239.5 141.6 252.5 136.6 272.5 131.7Z"/>
<path id="c11" d="M285 130.5 L303.5 129.6 322.5 130.3 334.5 131.4 371.3 136.5 404.5 142.9 426.5 148.2 460.5 157.8 500.5 171.9 557.5 189.2 565.5 192.3 575.5 197 581.5 201.1 586.5 205.3 594.3 213.5 602.1 224.5 614.4 244.5 631.3 266.5 639.8 281.5 646.5 298.6 654.5 315.9 661.5 325.1 671.2 334.5 674.6 339.5 675.7 342.5 676.1 345.5 675.3 349.5 673.5 353.4 670.5 356.5 661.5 361.7 652.5 369.1 650.2 370.5 637.5 374.9 599.5 384 542.5 395.3 512.5 400.2 474.5 404.9 449.5 407.4 426.5 408.6 408.5 408.4 397.5 407.3 394.5 406.5 381.5 399.9 368.5 394.9 354.5 390.9 344.5 389.5 337.5 389.4 330.5 390 310.5 393.7 306.5 394.9 296.5 399.3 295.5 398.6 295.3 397.5 294.9 388.5 293.5 386.1 292.5 386 289.5 390.6 286.2 399.5 283.3 404.5 282.5 405.6 280.5 406 267.5 397.1 257.5 391 250.7 387.5 238.5 382.5 200.2 371.5 169.5 364 162.5 361.1 146.5 351.3 142.5 348.3 138 342.5 126.5 325.7 126.5 210.6 129.5 209.9 135.5 206.7 148.5 198.3 168.5 183.3 190.5 168.8 200.7 162.5 215.5 154.9 246.5 140.8 253.5 138.1 273.5 132.6ZM490.5 195.3 L486.2 197.5 482.2 201.5 480.8 204.5 481.6 207.5 483.5 209.5 485.5 210.5 488.5 211.2 494.4 210.5 499.5 208.6 501.5 206.3 502.6 203.5 502.4 201.5 501.2 198.5 499.5 196.8 496.5 195.2 493.5 194.8ZM681.9 270.5 L686.5 270.4 690.5 270.9 693.5 272.1 695.3 273.5 696.2 275.5 695.9 277.5 693.1 282.5 689.4 286.5 683.7 291.5 673.5 297.8 668.5 299.9 663.5 301.3 660.5 301 657.2 299.5 656.3 298.5 655.5 296.5 655.9 291.5 658.3 285.5 661.5 281.3 665.5 277.5 670.5 274.2 675.5 272Z"/>
<path id="c12" d="M286.5 131.2 L303.5 130.3 316.5 130.8 341.5 133.4 384.5 140.7 423.5 149.1 445.5 154.8 460.5 159.4 480.5 167.2 498.5 175 520.5 180.5 557.5 190.9 565.5 193.8 575.5 198.5 581.5 202.6 585.5 206 592.5 213.5 599.8 224.5 613.5 249 627.5 266.1 632.5 273.5 638.1 283.5 653.1 317.5 658.5 326 666.7 335.5 669.8 340.5 670.9 343.5 671 345.5 669.4 350.5 667.5 352.8 658.5 358.5 650.8 365.5 648.5 366.9 634.5 372 599.5 380.7 539.5 392.4 503.5 398.2 448.5 404.8 426.5 406 414.5 406.1 399.5 405.6 395.5 405.1 382.5 399.2 368.5 394.1 354.5 390.3 344.5 389 336.5 389 330.5 389.6 309.5 392.9 298.5 397.4 297.5 397.1 297.1 396.5 296 388.5 293.5 385 291.9 385.5 290.5 387.3 284.9 400.5 282.1 404.5 280.5 405.1 278.5 404.2 267.5 396.6 255.5 389.1 243.1 383.5 237.8 381.5 217.5 375.5 167.5 362.8 163.5 361 145.5 350.2 142.5 347.7 139.9 344.5 126.5 325.2 126.5 212.4 130.5 211.4 139.5 206.2 149.5 199.5 169.5 184.5 199.5 165 220.5 154.2 247.5 142 255.5 139 279.1 132.5ZM490.5 192.4 L487.5 193.7 484.5 195.8 481.2 199.5 479.4 202.5 478.9 205.5 479.4 207.5 481.5 210 484.4 211.5 489.5 212.1 497.4 210.5 500.8 208.5 503.5 204.5 503.9 202.5 503.5 199.5 502.5 197.1 501.3 195.5 498.5 193.5 495.5 192.3ZM677.8 277.5 L684.5 277 685.9 277.5 686.5 278.2 686.5 279.5 684.4 282.5 680.5 286.8 672 293.5 667.5 296 663.5 297.5 661.5 297.6 659.5 296.5 658.9 294.5 659.5 292 661.2 288.5 663.5 285.5 666.5 282.7 669.5 280.7 673.5 278.8Z"/>
<path id="c13" d="M285.5 132.3 L302.5 131.2 315.5 131.7 338.5 134.3 384.5 142.7 428.5 151.9 446.5 156.5 463.5 162.1 479.8 169.5 496.5 178.4 520.5 183.2 556.5 192.2 565.5 195.2 575.5 199.7 580.5 203 585.5 207.2 591.8 214.5 598.4 225.5 608.5 247 611.5 252.3 625.5 268.1 630.5 274.9 634.5 281.3 646.9 306.5 651 317.5 654.5 324.8 664.5 341.3 665.6 344.5 665 347.5 663.1 349.5 655.5 354.5 646.5 362.8 635.5 367.8 619.5 372.8 598.5 377.8 537.5 389.4 503.5 395.2 473.5 399.3 447.5 402.3 425.5 403.5 399.5 403.3 394.5 402.4 383.5 397.9 364.5 392 354.5 389.7 345.5 388.6 331.5 388.9 315.5 391.2 309.5 391.6 307.5 392.1 301.5 395 299.5 395.3 298.5 394.3 296.9 388.5 294.9 385.5 293.5 384.3 292.3 384.5 290.5 386.5 288.5 390.3 285 399.5 281.5 403.7 280.5 404.1 277.5 402.9 255.5 388.3 245 383.5 236.7 380.5 219.7 375.5 167.5 362.3 162.5 359.9 144.5 349 139.5 343.5 126.5 324.6 126.5 214.3 130.5 213.3 137.5 209.4 150.5 200.7 170.5 185.7 200.5 166.2 220.5 155.8 248.5 143.1 255.5 140.5 279.8 133.5ZM491.5 188.4 L488.5 189.7 483.5 193.8 479.5 198.9 478.1 201.5 477.3 204.5 477.5 207.5 478.8 209.5 481.6 211.5 484.7 212.5 487.5 212.8 495.6 211.5 500.5 209.5 504.3 204.5 505 201.5 504.7 198.5 503.8 195.5 502.5 193.5 500.5 191.5 497.5 189.5 494.5 188.5Z"/>
<path id="c14" d="M287.5 133.3 L302.5 132.3 316.5 133.1 342.1 136.5 428.5 153.5 446.5 157.8 455.3 160.5 463.1 163.5 471.2 167.5 479.9 172.5 488.9 178.5 491.7 181.5 491.5 182.5 490.7 183.5 486.5 187.1 481.5 192.7 477.8 198.5 476.5 201.5 475.7 206.5 476.4 209.5 478.7 211.5 481.5 212.6 487.5 213.3 497.1 211.5 501 209.5 503.6 206.5 505.8 202.5 506.3 197.5 505.2 191.5 501.8 185.5 501.9 184.5 503.5 184 509.5 184.2 520.5 185.8 554.5 193.2 564.5 196.1 575.5 200.8 580.5 204 584.6 207.5 590.6 214.5 596.9 226.5 606.1 249.5 608.5 254.3 624.5 271.2 629.5 277.7 635.5 287.3 646.4 308.5 652.8 328.5 658.6 342.5 659 344.5 658.7 345.5 656.8 347.5 650.5 352.3 645.5 357.6 641.5 360.3 631 365.5 616.5 370.5 598.5 374.6 502.5 392.3 473.5 396.5 447.5 399.7 425.5 401.1 399.5 400.9 395.5 400.3 383.5 396 366.5 391.5 354.5 388.9 345.5 388 336.5 387.9 317.5 389.9 309.5 389.8 307.5 390.3 301.5 393 300.1 392.5 297.2 387.5 294.6 384.5 293.5 383.9 291.6 384.5 290.5 385.8 288.4 389.5 284.5 399.5 282.5 401.8 280.5 403.1 278.5 402.7 276.5 401.6 255.5 387.5 244.5 382.6 238.5 380.5 217.9 374.5 167.5 361.8 161.5 358.9 144.5 348.6 139.5 343 126.5 324.1 126.5 216.2 130.5 215.3 136.5 212 151.5 201.8 170.5 187.6 187.5 176.3 202.5 166.9 220.6 157.5 248.5 144.7 256.5 141.6 266.5 138.4 281.5 134.3Z"/>
<path id="c15" d="M287.5 134.5 L303.5 133.6 321.5 134.9 336.5 137.1 378.5 145.6 429.5 155.2 445.5 158.9 458.5 163.1 464.5 165.9 472.3 170.5 480.7 176.5 485 180.5 485.3 181.5 484.8 183.5 479 192.5 475.6 199.5 474.5 203.5 474.1 207.5 474.6 210.5 475.5 211.9 478.5 213.1 483.5 213.9 488.5 213.7 497.5 211.7 501.5 209.6 505.6 204.5 507.1 201.5 508.8 195.5 509.7 189.5 510.5 188.3 512.5 187.8 522.5 188.7 555.5 195 565.5 197.8 575.5 201.9 580.5 205 584.5 208.5 588 212.5 590.5 216.5 595.4 227.5 603.5 252.1 605.7 256.5 608.3 259.5 620.1 270.5 626.5 277.8 634.5 289.4 642.2 302.5 645.1 308.5 646.9 314.5 651.3 341.5 651.2 344.5 642.5 353.7 636 358.5 626.5 363.5 615.5 367.6 599.5 371.3 556.5 378.8 499.5 389.8 472.5 393.9 447.5 397.1 426.5 398.5 409.5 398.8 397.5 398.3 384.7 394.5 367.5 390.5 350.5 387.7 336.5 387.3 317.5 388.9 308.5 387.9 302.5 390.3 300.5 389.5 293.5 383.4 291.5 384.2 289.5 386.8 284 399.5 281.5 401.8 279.5 402.2 275.5 400.2 256.5 387.3 245.5 382.4 237.2 379.5 219.5 374.4 168.5 361.7 163.5 359.5 145.5 348.9 142.7 346.5 140.2 343.5 126.5 323.5 126.5 218.1 130.5 217.2 137.5 213.4 152.5 203 170.5 189.5 181.5 182 202.9 168.5 218 160.5 252.5 144.6 274.5 137.4Z"/>
<path id="c16" d="M289.8 135.5 L303.5 134.9 321.5 136.2 332.5 137.9 378.5 147.7 439.5 158.8 448.5 161.1 457.5 164.2 464.1 167.5 471.4 172.5 478.4 178.5 480.6 181.5 480.2 184.5 474.5 198 473 203.5 472.5 211.5 473.2 213.5 474.5 214.3 480.5 214.7 487.5 214.2 495.7 212.5 500.5 210.7 502.5 208.9 507.1 203.5 513.6 192.5 514.7 191.5 516.5 190.9 522.5 191.2 556.5 196.7 570.5 200.7 577.5 204.1 581.1 206.5 585.3 210.5 589.8 217.5 594.2 229.5 600.3 253.5 602.7 258.5 605.5 261.7 617.5 272 625.5 280.4 636.5 295.7 643.4 307.5 645.4 314.5 645.8 324.5 644.7 340.5 643.5 344.5 638.7 350.5 631.4 356.5 623.5 361.1 612.5 365.3 599.5 368.2 555.5 375.5 504.5 385.9 472.5 391.1 451.5 394 438.5 395.3 417.5 396.4 400.5 396.1 396.5 395.6 383.5 392.4 355.5 387.3 337.5 386.5 318.5 387.8 314.5 387.3 308.5 385.6 302.5 387.2 297.5 385.9 294.6 383.5 293.5 383.1 291.5 383.8 289.3 386.5 283.6 399.5 281.5 401.1 279.5 401.4 275.5 399.5 256.5 386.6 245.5 381.7 219.5 374 168.5 361.3 162.5 358.5 145.5 348.5 143.1 346.5 140.5 343.3 126.5 323 126.5 220.1 130.5 219.1 137.5 215.3 182.1 183.5 203.5 170 219.4 161.5 238.5 152.3 255.5 144.9 275.5 138.4 283.5 136.5Z"/>
<path id="c17" d="M292.1 136.5 L302.5 136.1 315.5 137 331.5 139.2 385.5 151 440.5 160.3 448.5 162.4 456.5 165.2 462.6 168.5 468 172.5 473.5 177.5 476.7 181.5 477 183.5 476.6 185.5 472.5 199.3 471 206.5 470.2 214.5 470.5 215.8 471.5 216.8 475.5 216.7 487.5 214.6 499.5 211.5 502.4 209.5 516.5 195 519.5 193.7 523.5 193.8 549.5 197 557.5 198.3 570.5 201.8 578.5 205.6 581.5 207.8 585.1 211.5 589 218.5 591 224.5 592.9 232.5 597 254.5 599.7 260.5 602.5 263.7 614.5 273.2 623.5 281.8 636.5 298.4 642.5 308.5 644 314.5 643.1 323.5 641.2 331.5 636.1 345.5 630.8 351.5 624.5 356.5 616.9 360.5 609.5 363 599.5 365.1 555.5 372.1 503.5 383.1 466.5 389.3 438.5 392.8 416.5 393.9 400.5 393.7 385.5 390.9 356.5 386.5 337.5 385.8 319.5 386.8 314.5 385.8 308.5 382.7 306.5 382.8 300.5 385.1 298.5 385.4 293.5 382.8 291.5 383.4 289.6 385.5 287.4 389.5 283.8 398.5 282.5 399.9 280.5 400.7 278.5 400.3 276.5 399.3 256.5 385.8 245.5 381.1 220.5 373.7 168.5 360.9 163.2 358.5 145.5 348.1 143.5 346.5 139.5 341.5 126.5 322.4 126.5 222 131.5 220.7 137.5 217.3 172.5 191.9 183.4 184.5 204.5 171.2 220.5 162.6 238.5 153.9 256.5 146.1 276.5 139.4 284.5 137.5Z"/>
<path id="c18" d="M296 137.5 L302.5 137.4 316.5 138.4 331.5 140.7 359.5 147.5 385.5 153.1 405.5 156.5 427.5 159.4 441.5 161.9 449.5 164 456.1 166.5 461.5 169.6 467.3 174.5 471.8 179.5 473.6 182.5 473.9 184.5 473.5 188.5 467.4 216.5 467.4 219.5 468.5 220.3 472.5 219.6 484.5 215.8 499.5 211.8 501.7 210.5 506.5 205.8 511.5 202.1 518.5 197.5 521.5 196.3 549.5 198.6 557.5 199.8 570.5 202.9 578.5 206.5 584 211.5 586 214.5 587.7 218.5 589.5 224.5 591.4 235.5 593.5 254.5 596.7 262.5 600.4 266.5 612.5 275.4 622.5 284.3 636.5 300.8 641.7 309.5 642.5 314.5 641.2 321.5 638.5 327.9 632.5 337.9 631.5 342.5 630 345.5 625.8 350.5 620.5 354.9 613.7 358.5 607.5 360.4 601.5 361.7 554.5 368.8 498.5 381 465.5 386.7 439.5 390.1 416.5 391.5 400.5 391.3 387.5 389.3 355.5 385.5 336.5 385 320.5 385.8 317.5 385.4 314.5 384.1 311.4 381.5 309.5 378.9 308.5 378.5 306.5 379.3 300.7 383.5 298.5 384.5 297.5 384.5 293.5 382.4 291.5 383.1 289.3 385.5 287.5 388.5 283.5 398.3 282.5 399.3 280.5 400 276.4 398.5 257.4 385.5 246.5 380.8 219.5 373 168.5 360.5 162.3 357.5 145.3 347.5 143.1 345.5 139.5 340.9 130.5 328.1 127.5 322.6 126.5 321.8 126.5 224.1 131.5 222.6 138.5 218.7 183.5 186.3 205.4 172.5 221.5 163.8 251.5 149.5 267.5 143.5 283.5 139Z"/>
<path id="c19" d="M287.9 139.5 L293.5 138.8 301.5 138.7 322.5 140.5 339.5 143.9 357.5 148.9 378.5 153.7 405.5 158.4 427.5 160.9 439.5 162.8 447.5 164.7 455 167.5 460.5 170.8 465.5 175.5 469.5 180.5 471.2 184.5 471 190.5 468.8 202.5 467.4 208.5 462.6 223.5 462.5 224.7 463.5 225.6 469.5 223.4 484.2 216.5 499.5 212 502.1 210.5 505.5 207.2 508.5 205.1 514.5 202 522.5 198.8 548.5 200 556.5 200.9 569.5 203.6 576.5 206.4 579.5 208.2 583 211.5 585 214.5 586.6 218.5 588.2 225.5 589.4 236.5 590.2 254.5 591.2 258.5 593.2 263.5 595.3 266.5 597.5 268.6 603.9 273.5 610.5 277.6 620.5 285.7 636.5 302.9 639.9 308.5 641.2 312.5 640.7 316.5 638.5 322.1 633.5 329.2 628.5 334.6 627.6 336.5 625.7 343.5 621.4 349.5 618.1 352.5 613.5 355.2 609.5 356.8 603.5 358.2 553.5 365.6 501.5 377.4 465.5 384 446.5 386.8 425.5 388.7 414.5 389.1 399.5 388.9 388.5 387.5 353.5 384.5 336.5 384.2 320.5 384.8 316.5 383.6 314 381.5 312.5 378.5 311.9 373.5 311.5 372.9 310.5 372.9 307.5 375.1 298.9 383.5 297.5 383.8 293.5 382.2 290.6 383.5 287.2 388.5 283.5 397.5 282.5 398.7 280.5 399.3 276.1 397.5 257.5 384.7 246.5 380.1 221.5 372.9 169.9 360.5 163.2 357.5 146 347.5 143.7 345.5 140.5 341.6 130.5 327.4 128 322.5 126.5 321.1 126.5 226.1 132.5 224.1 138.5 220.7 174.5 194.3 184.4 187.5 205.5 174.3 221.5 165.5 239.5 156.5 253.5 150.2 274.8 142.5Z"/>
<path id="c20" d="M290 140.5 L301.5 140 321.5 141.7 339.5 145.5 357.5 150.8 377.5 155.5 404.5 160.1 426.5 162.3 439.5 164.1 447.5 166.1 454.5 168.7 460.2 172.5 464.8 177.5 468 182.5 469.2 187.5 468.8 195.5 466.2 207.5 461.7 218.5 456.8 227.5 457.3 229.5 459.5 231 460.5 231.1 462.5 230.5 479.8 219.5 484.5 217 499.5 212.3 501.5 211.2 505.5 207.7 508.5 205.8 514.5 203.3 522.5 201 526.5 200.8 546.5 201.3 556.5 202.1 569.5 204.6 576.5 207.3 579.5 209.2 582.8 212.5 584.5 215.5 585.8 219.5 586.8 225.5 587.4 236.5 587.1 255.5 588.5 261 590.5 265.8 592.5 268.7 595.5 271.5 602.5 276.4 609.5 280.3 618.5 287 634.5 302.3 638.1 307.5 639.9 311.5 639.8 314.5 638.3 318.5 634.5 323.8 624.9 332.5 623.4 335.5 621.5 342.5 618.4 347.5 615.3 350.5 609.5 353.6 600.5 355.7 552.5 362.3 500.5 374.5 465.5 381.3 450.5 383.7 426.5 386.1 412.5 386.7 396.5 386.5 356.5 383.6 320.5 383.7 317.5 382.6 316.2 381.5 315 379.5 314.6 377.5 315.2 373.5 319.4 362.5 319.5 360.5 316.5 362.6 312.5 366.6 299 382.5 297.5 383.1 293.5 381.9 291.5 382.5 290.2 383.5 286.8 388.5 283.5 396.5 282.5 397.9 281.5 398.5 279.5 398.3 276.5 396.8 257.5 383.8 248.5 380 220.5 372 168.6 359.5 162.5 356.5 145.5 346.5 139.5 339.3 130.5 326.5 128 321.5 126.5 320.4 126.5 228.1 132.5 226.1 139.5 222.1 184.5 189.3 206.5 175.5 222.5 166.7 239.5 158.1 254.5 151.3 275.9 143.5 283.5 141.6Z"/>
<path id="c21" d="M292.8 141.5 L302.5 141.3 321.5 143.1 338.5 146.8 357.3 152.5 378.4 157.5 404.5 161.8 426.5 163.7 439.5 165.5 447.5 167.4 454.5 170.2 459.5 173.9 464.1 179.5 466.7 184.5 467.7 189.5 467.1 198.5 464.9 207.5 459.9 218.5 452.6 229.5 452.6 230.5 459.5 234 462.8 232.5 479.7 220.5 484.7 217.5 490.5 215.2 499.5 212.6 508.5 206.4 519.5 203.1 526.5 202.2 550.5 202.6 566.5 204.8 571.5 206 576.5 208.2 579.5 210.2 581.7 212.5 583.4 215.5 584.7 219.5 585.5 225.5 585.8 236.5 584.6 255.5 585.5 260.5 587.8 266.5 589.7 269.5 592.9 272.5 600.4 277.5 608.5 281.9 615.5 286.9 633.5 302.8 636.9 307.5 638.8 311.5 638.6 314.5 637.4 317.5 633.5 322.5 629.5 325.9 624.1 329.5 622.2 331.5 620.5 334.5 618 342.5 614.5 347.5 609.5 350.8 601.5 353 552.5 359.5 498.5 372.2 462.5 379.3 437.5 382.9 415.5 384.4 400.5 384.4 373.5 383.6 356.5 382.5 323.5 382.8 320.5 382.4 318.5 381.5 317.4 380.5 316.6 378.5 317 374.5 319.9 367.5 324.2 359.5 331 348.5 339 337.5 351.8 323.5 351.5 322.7 338.5 334.5 325.5 348.1 309.5 367.6 299 381.5 297.5 382.4 294.5 381.6 292.5 381.7 289.9 383.5 285.8 389.5 282.7 396.5 281.5 397.6 279.5 397.3 276.1 395.5 258.5 383.2 248.5 379 220.5 371.1 171 359.5 164.2 356.5 146.8 346.5 144.5 344.6 140.5 339.5 131.5 326.7 128.5 320.7 126.5 319.3 126.5 230.2 132.5 228.2 139.5 224.1 157.6 210.5 185.5 190.5 207.5 176.8 222.5 168.5 239.9 159.5 253 153.5 268.3 147.5 281.1 143.5ZM352.5 322.2 L351.9 322.5 352.5 322.7ZM353.6 321.5 L353.3 321.5 353.5 321.6ZM354.6 320.5 L354.4 320.5 354.5 320.6ZM355.7 319.5 L355.3 319.5 355.5 319.7ZM356.5 318.1 L356.2 318.5 356.5 318.9 357.1 318.5ZM409.5 270.5 L366 308.5 357.1 317.5 357.5 318.2 375.5 302 409.9 273.5 411.2 271.5 410.5 270.1Z"/>
<path id="c22" d="M288.8 143.5 L300.5 142.8 320.8 144.5 338.5 148.5 356.5 154 377.5 159 403.5 163.2 426.5 165.2 438.5 166.7 446.2 168.5 453.5 171.3 458 174.5 462.5 179.8 465.4 185.5 466.4 190.5 465.8 199.5 463.8 207.5 459.2 217.5 450.8 229.5 449.9 231.5 450.5 232.4 454.5 233.3 458.5 235.4 459.5 235.5 461.7 234.5 480.5 220.7 485.7 217.5 490.5 215.5 499.5 212.9 502 211.5 507.5 207.5 515.5 204.9 525.5 203.3 548.5 203.3 564.5 205.2 570.5 206.6 575.3 208.5 578.5 210.5 580.5 212.5 582.4 215.5 583.6 219.5 584.3 225.5 584.4 236.5 582.9 251.5 582.9 256.5 584.5 263.5 586.3 267.5 590.6 272.5 599.8 278.5 607.5 282.8 613.5 287 632.5 303.2 635.2 306.5 637.4 310.5 637.8 313.5 636.7 316.5 634.8 319.5 632.5 321.8 628.5 325.1 623.1 328.5 621.1 330.5 618.6 334.5 615.5 342.5 612.5 346.4 607.5 349.4 600.5 351.3 572.5 355.4 550.5 358 495.5 370.5 460.5 377.3 436.5 380.7 414.5 382.2 403.5 382.2 373.5 381.8 357.5 381 324.5 381.5 321.5 381 319.5 379.9 318.5 377.5 318.9 374.5 324 362.5 331.8 349.5 340.7 337.5 355.5 322.2 368.5 310.4 412.3 273.5 413 272.5 413.3 270.5 413 267.5 412.5 266.9 411.5 266.9 409.1 268.5 382.5 291.5 364.5 307.5 338.5 332.6 321.5 351 307.5 368.5 298.5 380.9 296.5 381.7 294.5 381.3 292.5 381.4 289.5 383.5 285.9 388.5 282.5 395.5 281.5 396.3 279.5 396.1 276.6 394.5 259.5 382.1 249.5 377.9 221.5 369.9 172.5 358.5 165.6 355.5 148.3 345.5 143.5 340.6 138.5 333.5 132.5 324.6 129.8 318.5 128.5 317.3 126.5 316.6 126.5 232.8 129.5 232.2 136.5 228.5 142.5 224.4 159.1 211.5 185.6 192.5 207.9 178.5 223.5 169.9 239.5 161.5 254.7 154.5 275.8 146.5Z"/>
<path id="c23" d="M296.3 144.5 L307.5 145 321.5 146.4 338.5 150.3 355.5 155.4 376.5 160.5 403.5 164.8 425.5 166.6 438.5 168.3 446.5 170.2 453.5 173.1 456.8 175.5 459.5 178.4 461.8 181.5 463.9 185.5 465.3 191.5 464.8 199.5 462.9 207.5 458.8 216.5 454.9 222.5 444.5 236.2 444.5 237.5 448.5 234.9 450.5 234.3 454.5 234.7 458.5 236.5 460.5 236.1 485.5 218.2 491.5 215.5 499.5 213.1 502.5 211.5 506.5 208.5 514.5 205.9 525.5 204.1 548.5 204 564.5 205.9 570.5 207.4 574.5 209.1 577.5 210.9 580 213.5 581.6 216.5 582.5 219.8 583.2 226.5 583 235.5 581.4 251.5 581.3 256.5 582.6 262.5 584.7 267.5 586.8 270.5 590 273.5 608.3 284.5 616.1 290.5 632.5 304.4 634.8 307.5 636.7 311.5 636.7 313.5 635.6 316.5 633.5 319.5 630.5 322.3 620.4 329.5 617 334.5 613.9 341.5 611.5 344.5 606.5 347.8 598.5 350 572.5 354.1 549.5 356.5 520.5 362.3 498.5 367.5 463.5 374.4 449.5 376.7 436.5 378.2 411.5 379.8 358.5 379.2 332.5 379.8 324.5 379.6 321.5 378.5 320.7 376.5 321.1 373.5 323 367.5 326.1 360.5 333.4 348.5 341.7 337.5 355.5 323.3 370.5 309.6 412.5 274.5 414.4 271.5 414.6 266.5 414.4 265.5 413.5 265 411.5 265.6 408.9 267.5 382.5 290.4 364.4 306.5 337.5 332.5 320.5 351 306.5 368.6 298.5 379.9 296.5 381.1 292.5 381.1 290.2 382.5 285.9 387.5 282.5 393.4 281.5 394.3 279.5 394.3 277.5 393.3 261.5 381.1 252.5 377 245.5 374.4 222.5 367.8 189.5 360.3 173.5 355.9 166.5 352.4 151 342.5 147.1 338.5 142.2 331.5 136.6 322.5 133.4 315.5 130.5 312.7 126.5 311.1 126.5 236.3 130.5 235.1 137.5 230.7 159.5 213.4 178.5 199.6 193.4 189.5 209.5 179.8 224.5 171.4 242.5 162 255.5 156.1 270.5 150.1 284.5 146Z"/>
<path id="c24" d="M293.9 146.5 L307.5 146.8 321.5 148.2 337.5 151.8 355.5 157.2 376.5 162.2 402.5 166.3 426.5 168.3 437.5 169.7 446.5 171.9 453.5 175 456.5 177.4 459.5 180.8 461.5 183.8 463.1 187.5 464.1 193.5 463.4 202.5 461.6 208.5 457.4 217.5 447.5 231 441.5 237.8 438.4 240.5 437.7 242.5 438.5 244 440.5 243.8 450.5 236.1 453.5 235.9 458.5 237.4 460.5 236.9 485.9 218.5 491.5 215.9 500.5 213 506.5 209 512.5 207.1 525.5 204.9 546.5 204.6 562.5 206.3 569.5 207.9 573.5 209.5 576.7 211.5 578.7 213.5 580.4 216.5 581.4 220.5 581.9 226.5 581.7 235.5 580 250.5 579.9 256.5 581 262.5 583 267.5 585.1 270.5 588.3 273.5 606.8 284.5 631.3 304.5 633.5 307.1 635.4 310.5 635.8 312.5 635.1 315.5 633.2 318.5 630.1 321.5 621.5 327.2 619 329.5 615.9 333.5 612.2 340.5 609.5 343.6 604.6 346.5 595.5 349 572.5 352.9 553.5 354.3 542.5 355.9 462.5 372.1 448.5 374.4 435.5 375.8 413.5 377.3 390.5 376.8 359.5 377.2 338.5 378.2 327.5 377.8 325.3 377.5 323.5 376.5 323 374.5 323.5 370.5 324.9 365.5 326.9 360.5 334.1 348.5 341.7 338.5 356.2 323.5 370.5 310.5 413.5 274.4 414.9 272.5 416.1 266.5 418.3 262.5 417.7 261.5 416.5 261.4 407.9 267.5 363.5 306.5 336.7 332.5 323.5 346.5 306.5 367.5 297.8 379.5 296.5 380.4 292.5 380.8 290.5 381.9 286.9 385.5 282.5 390.9 280.5 392.3 278.5 391.8 276.4 390.5 261.5 378.7 248.5 373.1 221.5 364.9 188.5 357.3 175.5 353.3 169.7 350.5 159.5 343.7 151.8 337.5 148.1 332.5 142 322.5 138.3 314.5 136.5 311.7 131.5 307 128.5 305.4 126.5 304.9 126.5 240.4 130.5 238.9 136.5 234.7 158.6 216.5 179.5 201.2 195.5 190.4 211.5 180.9 236.5 167.1 256.5 157.6 277.5 149.6 285.5 147.6Z"/>
<path id="c25" d="M292.2 148.5 L301.5 148.3 321.5 150 337.5 153.6 355.5 158.9 375.5 163.7 402.5 167.9 426.5 169.9 437.5 171.3 446.5 173.6 452.8 176.5 455.5 178.6 458.5 182 460.8 185.5 462 188.5 463 194.5 462.2 203.5 460 210.5 455.4 219.5 447.5 230 436.9 241.5 436.6 244.5 437.5 245.9 438.5 246.3 441.5 245.3 449.5 238.7 451.5 237.6 453.5 237.4 457.5 238.3 460.5 237.6 486.8 218.5 491.5 216.3 500.5 213.3 506.5 209.6 509.5 208.6 524.5 205.7 544.5 205.2 560.5 206.7 567.5 208.2 572.5 210 575.5 211.8 578.1 214.5 579.5 217.5 580.2 220.5 580.6 226.5 580.3 235.5 578.5 250.5 578.4 256.5 579.8 263.5 582 268.5 584.3 271.5 587.9 274.5 601.5 282 606.8 285.5 619.5 296.4 630.5 304.9 632.7 307.5 634.3 310.5 634.8 312.5 634 315.5 632 318.5 628.8 321.5 618.5 328.5 614.2 333.5 609.8 340.5 607.5 342.7 604.5 344.5 600.5 346 588.5 348.9 571.5 351.8 553.5 352.7 541.5 354.3 518.5 358.5 497.5 363 461.5 369.9 439.5 373 413.5 374.8 387.5 374.4 358.5 375.2 339.5 376.6 331.5 376.4 326.5 375.3 325.2 373.5 325.2 370.5 325.7 366.5 327.2 361.5 334.1 349.5 342.4 338.5 356.5 323.9 371.5 310.3 414.2 274.5 415.7 272.5 417.5 266.7 420.5 262.5 420.4 261.5 419.7 260.5 417.5 260 415.5 260.7 408.2 266.5 363.5 305.8 336.9 331.5 323.5 345.7 305.6 367.5 297.5 378.8 296.5 379.6 292.5 380.5 290.5 381.5 283.5 387.9 280.5 389.8 278.5 389.6 276.5 388.4 263.5 377.5 249.5 371.1 222.5 362.5 189.5 354.8 178.5 351.1 172.5 348.3 162.5 341.2 154.8 334.5 149.5 326.5 145.1 318.5 142.5 312.4 139.4 307.5 136.5 304.2 133.5 301.6 129.5 299.1 126.5 298 126.5 245.5 129.5 244.1 132.5 241.9 153.1 223.5 165.7 213.5 194.5 193.3 211.5 183.1 237.5 168.7 256.5 159.6 277.5 151.4 285.5 149.5Z"/>
<path id="c26" d="M290.7 150.5 L300.5 150.1 321.5 151.8 338.5 155.7 355.5 160.7 375.5 165.4 401.5 169.4 436.5 172.8 446.5 175.3 452.5 178.2 457.8 183.5 460.9 189.5 461.9 196.5 461.1 204.5 457.9 213.5 454 220.5 447.2 229.5 437.5 239.5 436.1 241.5 435.3 243.5 435.3 246.5 435.6 247.5 436.9 248.5 438.5 248.4 441.5 247.1 451.5 239.4 457.5 239.1 460.5 238.2 486.5 219.2 491.9 216.5 500.5 213.6 508.5 209.5 524.5 206.5 543.5 205.9 560.5 207.4 566.5 208.7 571.5 210.4 574.7 212.5 576.7 214.5 578.3 217.5 579 220.5 579.4 225.5 579 235.5 577 250.5 576.9 256.5 577.9 262.5 580.3 268.5 582.5 271.5 584.6 273.5 604.1 284.5 617.9 296.5 629.9 305.5 632.3 308.5 633.6 311.5 633.7 313.5 633 315.5 630.9 318.5 627.5 321.5 620.5 325.7 617 328.5 612.3 333.5 608 339.5 604.5 342.4 600.5 344.2 594.5 346.1 578.5 349.5 570.5 350.7 554.5 351.1 541.5 352.5 517.5 356.5 460.5 367.7 447.5 369.7 434.5 371 412.5 372.4 389.5 371.9 370.5 372.5 338.5 374.9 331.5 374.7 328.2 373.5 327.1 371.5 326.7 368.5 326.9 365.5 327.9 361.5 334.1 350.5 342.2 339.5 356.6 324.5 372 310.5 414.9 274.5 416.4 272.5 418.5 267.5 421.8 263.5 422.7 261.5 422.7 260.5 422 259.5 418.5 258.8 416.5 259.3 414.6 260.5 381.5 289 363.1 305.5 336.5 331.2 317.8 351.5 304 368.5 296.7 378.5 291.5 380.6 285.5 385.2 281.5 387.2 279.5 387.5 277.5 386.7 273.3 383.5 267.5 377.8 264.5 375.6 249.5 368.7 236.5 364.1 223.5 360.1 191.5 352.7 181.5 349.1 174.5 345.6 165.1 338.5 157.1 330.5 149.8 317.5 145.7 308.5 140.5 300.8 133.5 294.4 128.5 290.8 126.5 290 126.5 252.4 128.5 251.3 131.5 248.5 149.4 229.5 160.5 219.9 181.5 204.5 197.7 193.5 237.5 170.8 254.5 162.5 275.5 154 284.5 151.5Z"/>
<path id="c27" d="M289.4 152.5 L300.5 151.9 321.5 153.5 339.5 157.7 355.5 162.4 375.5 167.1 400.5 171 435.5 174.2 445.2 176.5 451.5 179.5 456.7 184.5 459.9 190.5 460.5 193.5 460.8 198.5 460 205.5 456.7 214.5 453.3 220.5 446.4 229.5 435.3 241.5 434 244.5 433.3 247.5 433.5 250.2 434.5 251 437.5 250.6 440.5 249.3 451.5 241.1 458.5 239.7 461.5 238.2 483.5 221.9 488.5 218.6 493.1 216.5 500.5 213.9 508.5 210.1 525.5 207.1 543.5 206.5 559.5 208 566.5 209.4 570.5 210.9 573.1 212.5 575.5 214.8 577 217.5 577.8 220.5 578.1 225.5 577.6 235.5 575.5 250.5 575.4 255.5 576.1 261.5 578.7 268.5 581.5 272.4 584.5 274.8 596.5 280.6 603.5 284.9 616.5 296.7 629.5 306.3 631.3 308.5 632.6 311.5 632.7 313.5 632 315.5 630.6 317.5 627.5 320.5 619.2 325.5 615.3 328.5 611 332.5 606.2 338.5 603.5 340.8 600.2 342.5 594.4 344.5 577.5 348.4 569.5 349.6 554.5 349.6 540.5 350.8 515.5 354.7 459.5 365.5 439.5 368.1 413.5 369.9 390.5 369.4 379.5 369.8 358.5 371.1 339.5 373.2 333.5 373.1 330.5 372.3 328.9 370.5 328 367.5 328 364.5 328.7 361.5 334.5 350.8 342.5 339.9 346.5 335.3 357.2 324.5 372.7 310.5 415.6 274.5 419.2 268.5 423.5 263.5 425.1 260.5 425.4 258.5 424.5 257.5 421.5 257.3 417.5 258.2 414.5 259.9 363.5 304.5 336.5 330.6 322.3 345.5 304 367.5 296.5 377.7 291.5 380.1 284.5 384.7 280.5 385.2 277.5 384.3 266.5 374.4 261.2 371.5 249.5 366.4 236.5 361.5 223.5 357.4 193.5 350.6 180.5 345.3 171.9 339.5 167.5 335.5 161.1 328.5 157.9 323.5 150.5 307.6 145.2 298.5 134.5 286.8 128.5 281.3 126.5 280.1 126.5 265 128.5 262.6 140.3 243.5 149.4 232.5 155.6 226.5 162.7 220.5 183.3 205.5 199.7 194.5 242.5 170.3 256.5 163.6 271.5 157.2 280.5 154.3Z"/>
<path id="c28" d="M288.1 154.5 L299.5 153.8 308.5 154 320.5 155.2 339.5 159.5 356.5 164.4 376.5 168.9 399.5 172.5 432.5 175.4 441.5 177.1 449.5 180.1 452.5 182.3 455.6 185.5 457.6 188.5 459.1 192.5 459.9 200.5 458.3 208.5 454.5 217.5 446.6 228.5 434.7 241.5 432.3 245.5 428.9 253.5 427.5 254.3 419.5 256.5 414.5 259.3 363.5 304 335.9 330.5 321.6 345.5 303.1 367.5 295.5 377.5 286.5 383 283.5 383.7 280.5 383.2 277.5 381.9 270.5 374.8 267.5 372.5 251.5 364.8 237.5 359.3 224.5 355 193.5 347.9 184.5 344.1 177.4 339.5 171.5 334.2 163.5 324.4 150.5 297.5 136.2 278.5 134.9 276.5 134.4 274.5 136.1 264.5 138.1 256.5 140.4 250.5 144 243.5 148.9 236.5 153.3 231.5 157.5 227.4 167 219.5 200 196.5 239.5 173.9 255.5 166.1 271.5 159.1 280.5 156.1ZM529.4 207.5 L543.5 207.1 558.5 208.5 568.5 210.9 571.6 212.5 573.8 214.5 575.8 217.5 576.9 222.5 576.3 235.5 574.1 250.5 573.9 254.5 574.6 261.5 577 268.5 579.7 272.5 583.4 275.5 587.2 277.5 595.5 280.7 602.5 284.8 607.8 289.5 615.7 297.5 629.5 307.5 631.3 310.5 631.7 313.5 630.3 316.5 627.5 319.4 614.7 327.5 608.8 332.5 603.5 338.4 600.3 340.5 588.5 344.7 574.5 347.8 568.5 348.4 551.5 348.2 533.5 349.9 514.5 352.8 459.5 363.1 439.5 365.6 413.5 367.4 390.5 366.9 379.5 367.3 357.5 369.1 338.5 371.5 333.5 371.3 331.6 370.5 330.5 369.4 329.4 367.5 328.8 364.5 330.2 359.5 336.5 348.7 345.5 337.1 357.9 324.5 373.4 310.5 416.2 274.5 420.5 268.7 426 262.5 430.5 255.2 440.5 251 451.5 242.8 460.5 239.4 484.9 221.5 491.5 217.6 508.5 210.8 517.5 209Z"/>
<path id="c29" d="M286.9 156.5 L293.5 155.7 299.5 155.6 308.5 155.8 320.5 157 339.5 161.3 357.5 166.4 376.5 170.6 398.5 174 431.5 176.9 440.5 178.5 448.5 181.4 451.5 183.5 454.5 186.5 456.5 189.5 457.8 192.5 458.9 200.5 457.6 208.5 455.3 214.5 453.3 218.5 446.1 228.5 434 241.5 427.5 250.7 425.5 252.4 419.5 255.5 414.5 258.8 362.3 304.5 335.2 330.5 321.8 344.5 303 366.5 295.5 376.5 287.5 381.7 284.5 382.6 281.5 381.7 277.8 379.5 272.2 373.5 268.2 370.5 252.5 362.8 238.5 357.1 225.5 352.6 194.5 345.5 185.8 341.5 179 336.5 174 331.5 166.8 321.5 155 295.5 143.6 277.5 142.6 274.5 142.4 266.5 142.6 259.5 143.5 253.5 145.9 246.5 148.3 241.5 151.7 236.5 156.5 231.1 170.1 219.5 201.5 197.8 240.5 175.5 255.5 168.1 272.5 160.6 280.5 158ZM526.3 208.5 L542.5 207.7 555.5 208.9 566.5 211.1 569.9 212.5 572.4 214.5 574.5 217.5 575.7 222.5 574.7 237.5 572.7 249.5 572.5 253.5 572.9 260.5 575.3 268.5 578 272.5 581.3 275.5 585 277.5 594.5 280.8 601.5 284.7 606.9 289.5 614.5 297.9 628.2 307.5 630.3 310.5 630.7 313.5 629.9 315.5 627.2 318.5 624.5 320.6 617.2 324.5 609.9 329.5 606.3 332.5 602.5 336.6 598.5 339.5 586.5 343.8 573.5 346.7 568.5 347.2 552.5 346.6 532.5 348.1 513.5 350.7 458.5 360.9 439.5 363.2 414.5 364.9 390.5 364.4 379.5 364.9 357.5 367.1 338.5 369.9 333.5 369.3 331.1 367.5 330 365.5 329.8 363.5 330.5 360.5 332.5 356.5 337.5 348.3 346.8 336.5 358.5 324.7 374.2 310.5 415.8 275.5 432.5 257.3 441.5 251.9 451.5 244.4 461.5 239.3 484.5 222.4 490.5 218.7 508.5 211.5Z"/>
<path id="c30" d="M294.9 157.5 L307.5 157.6 321.5 158.9 339.5 163.1 358.5 168.4 375.5 172.1 398.5 175.6 432.5 178.6 441.5 180.4 448.5 183.3 453.5 187.5 455.5 190.5 456.8 193.5 458 201.5 457.3 206.5 456.2 210.5 454.3 215.5 452.1 219.5 445.5 228.5 426.5 249.4 414.3 258.5 361.8 304.5 335.5 329.5 321 344.5 302 366.5 294.5 376.2 288.2 380.5 285.5 381.5 283.5 381.1 280.9 379.5 277.6 376.5 273.5 371.8 269.5 368.8 253.5 360.8 239.5 354.9 226.5 350.2 195.5 343.1 187.5 339.1 180.6 333.5 177.1 329.5 170.7 319.5 159.5 293.5 150 276.5 147.9 265.5 147.2 255.5 147.9 250.5 150.2 243.5 153.7 237.5 158.5 231.9 171.9 220.5 200.9 200.5 240.5 177.6 256.5 169.7 272.5 162.6 279.5 160.1 287.5 158.2ZM534.8 208.5 L544.5 208.5 559.5 210.2 567.9 212.5 569.7 213.5 571.9 215.5 573.9 219.5 574.5 223.5 573.1 239.5 571.1 250.5 571.1 257.5 571.8 262.5 573.8 268.5 577.2 273.5 581 276.5 585.5 278.5 594.5 281.3 601.5 285.3 606.1 289.5 614.5 299.4 627.5 308.2 629.1 310.5 629.6 313.5 628.5 315.7 625.7 318.5 607.5 329.4 599.7 336.5 596.6 338.5 586.2 342.5 573.3 345.5 568.5 345.9 553.5 345 540.5 345.4 531.5 346.3 512.5 348.7 457.5 358.6 438.5 360.8 415.5 362.4 388.5 362 378.5 362.5 355.5 365.3 338.5 368.1 334.5 367.7 331.5 365.8 330.7 363.5 331 361.5 334.5 354.2 339.5 346.7 348.5 335.5 358.5 325.5 373.9 311.5 416.4 275.5 433.5 259 451.5 245.8 461.5 239.8 485.2 222.5 491.5 218.8 509.5 211.9 524.3 209.5Z"/>
<path id="c31" d="M292.6 159.5 L307.5 159.4 320.5 160.5 339.5 164.9 358.5 170.1 374.5 173.6 398.5 177.1 431.5 179.9 440.5 181.7 447.5 184.4 452.5 188.5 454.5 191.4 455.9 194.5 456.8 198.5 457 202.5 456.3 207.5 454.9 212.5 453.3 216.5 450.8 220.5 445 228.5 428.5 246.1 424 250.5 414.5 257.9 380.5 287.5 362.4 303.5 345.2 319.5 320 344.5 300.7 366.5 293.6 375.5 288.1 379.5 285.5 380.2 283.7 379.5 281.3 377.5 275.5 370.7 272.5 368.2 268 365.5 255.5 359.5 226.5 347.6 216.5 344.9 196.5 340.5 190.5 337.5 185.5 333.5 180.5 328 175.5 319.5 163.9 291.5 156.2 276.5 152.3 263.5 151.3 258.5 150.8 253.5 151.8 247.5 153.5 242.8 156.5 237.8 161.1 232.5 172.8 222.5 201.7 202.5 241.2 179.5 257.2 171.5 272.7 164.5 278.3 162.5 286.5 160.3ZM531.5 209.5 L543.5 209.2 556 210.5 565.2 212.5 568.5 214 570.4 215.5 572.5 219.2 573.2 223.5 571.9 238.5 569.8 250.5 569.7 257.5 570.7 263.5 572.8 269.5 575.8 273.5 579.4 276.5 583.8 278.5 595.5 282.2 600.5 285 603.4 287.5 607.1 291.5 613.5 300 625.9 308.5 627.5 310.2 628.1 311.5 628.2 313.5 627 315.5 625 317.5 606.5 328 603.5 330.2 597.9 335.5 594.5 337.5 584.2 341.5 571.5 344.4 567.5 344.5 554.5 343.5 540.5 343.6 531.5 344.3 511.5 346.7 459.5 355.9 444.5 357.9 415.5 360.1 388.5 359.7 378.5 360.3 352.5 363.7 338.5 366.2 334.5 365.8 332.5 364.5 332.1 363.5 332.2 361.5 335.5 354.3 341.5 345.4 349.6 335.5 359.5 325.5 374.9 311.5 394.5 295.1 435.5 259 451.5 246.8 462.5 239.7 485.5 222.9 491.2 219.5 503.5 214.5 509.5 212.6Z"/>
<path id="c32" d="M294.1 161.5 L306.5 161.2 320.5 162.5 338.5 166.6 358.5 171.9 374.5 175.2 397.5 178.4 430.5 181.1 439.5 182.9 446.5 185.5 451.5 189.6 453.5 192.4 454.9 195.5 456.1 202.5 454.8 210.5 453.2 215.5 451.6 218.5 444.5 228.5 432.5 241.3 423.5 250.1 414.5 257.4 380 287.5 344.5 319.5 318.7 344.5 291.5 374.4 288.5 376.6 286.5 377.2 283.5 375.4 277.4 368.5 270.5 364.2 255.3 357.5 243.5 353.1 226.5 344.8 199.5 335.7 195.5 333.4 191.5 330.5 186.5 324.5 181.5 315.1 175.8 299.5 163.3 270.5 159.8 258.5 159 252.5 159.7 247.5 161.5 243.1 165.3 237.5 170 232.5 181.2 222.5 206.1 203.5 243 181.5 256.7 174.5 274.1 166.5 279.7 164.5 287.5 162.4ZM529.2 210.5 L542.5 210 556.1 211.5 564.5 213.5 567.5 214.9 569.4 216.5 571.3 220.5 571.7 224.5 570.6 238.5 568.6 249.5 568.4 257.5 569.4 263.5 571.5 269.5 574.6 273.5 578.1 276.5 582.3 278.5 594.5 282.1 598.5 284.1 601.8 286.5 606.5 291.5 611.5 299.5 613.5 301.8 624.5 310.5 625.5 312.5 625.3 313.5 623.7 315.5 621 317.5 603.5 327.2 596.5 333.4 593 335.5 583.5 339.5 571.4 342.5 568.5 342.7 551.5 341.6 539.5 341.6 531.5 342.2 509.5 344.6 458.4 353.5 443.8 355.5 414.5 357.8 384.5 358 339.5 362.7 336.5 362.5 335.5 361.6 335.7 359.5 336.7 356.5 342.6 346.5 348.5 338.5 359 327.5 378.5 309.5 394.5 296 422.5 271.1 434.5 260.8 444.5 253 484.5 224.3 490.6 220.5 502.3 215.5 508.5 213.5Z"/>
<path id="c33" d="M292.5 164.5 L305.5 163.5 319.2 164.5 356.5 173.3 374.5 176.9 393.5 179.5 411.5 181.1 425.5 181.8 437.5 183.7 445.2 186.5 450.4 190.5 452.5 193.5 453.9 196.5 454.9 200.5 455.1 203.5 453.9 211.5 452.6 215.5 451.1 218.5 444.1 228.5 432.5 240.8 422.5 250.3 361.4 303.5 303.5 356.9 290.5 367.7 287.5 369.3 285.5 368.8 280.6 365.5 273.5 362.2 245.5 352.8 239.5 350.1 233.8 346.5 217.5 333.8 210.5 329.6 202.5 325.5 198.9 322.5 195.2 317.5 190.9 308.5 176.8 270.5 173.8 259.5 172.8 252.5 174 248.5 177 243.5 181.9 236.5 186.8 230.5 200.8 215.5 208.4 208.5 213.7 204.5 231.9 192.5 253.5 180 276.5 169.1 284.5 166.3ZM528.5 211.5 L542.5 210.9 553.5 212.3 562.9 214.5 565.5 215.7 567.7 217.5 569.6 221.5 570.1 227.5 569.4 237.5 567.4 249.5 567.1 257.5 568.1 263.5 570.3 269.5 573.5 273.5 577.1 276.5 581.1 278.5 595.5 282.9 599.5 285.2 602.3 287.5 606.7 292.5 611.5 302 617.3 310.5 617.9 312.5 616.6 314.5 601.4 324.5 594.5 330.2 591.5 332 582.5 336.1 569.5 339.9 540.5 339 524.5 340.2 502.5 342.8 448.5 352.1 414.5 355.4 385.5 356.3 360.5 358.4 347.5 357.2 344.8 356.5 343.7 355.5 343.7 353.5 344.7 350.5 348.8 342.5 352.4 337.5 361.5 327.5 377 312.5 410.1 282.5 432.5 263.2 446.5 252.1 484.5 225 491.5 220.7 501.5 216.5 507.7 214.5 514.5 213.2Z"/>
<path id="c34" d="M299.2 166.5 L306.5 166 318.5 166.8 351.5 174.3 374.5 178.7 393.5 181 409.5 182.3 424.5 182.9 437.5 185.1 444.5 187.8 447.5 189.9 450 192.5 451.9 195.5 453.5 199.5 454.1 202.5 454.1 206.5 453.3 211.5 452.1 215.5 446 225.5 436.3 236.5 423.5 248.9 321.5 338.4 308.5 349 297.5 357.1 289.5 361.6 286.5 362.2 245.5 351.8 239.5 349 235.2 345.5 232.2 341.5 228.2 334.5 224.5 329.7 220.5 325.6 207.5 315.2 204.5 311.4 200.2 301.5 189.9 269.5 187.6 260.5 187.1 255.5 188.3 251.5 192.7 241.5 201.3 226.5 206.3 219.5 211.4 213.5 219 206.5 239.4 192.5 253.5 184.2 264.7 178.5 275.5 173.3 283.5 170 290.5 167.9ZM528.7 212.5 L542.5 212.1 552.5 213.5 561.5 215.9 564.5 217.5 566.4 219.5 568 223.5 568.5 229.5 568 236.5 566.1 249.5 565.8 256.5 566.7 262.5 568.5 268.1 571.5 272.5 576.2 276.5 583 279.5 592.5 282 595.5 283.2 600.5 286.3 604.7 290.5 606.8 293.5 608.6 297.5 611.2 309.5 610.9 312.5 607.8 315.5 589.5 328.6 579.1 333.5 572.5 335.9 567.5 337 562.5 337.2 539.5 336.2 513.5 338.4 485.5 342.4 448.5 349 414.5 352.9 403.5 353.3 363.5 356.3 356.5 355.2 352.5 353.7 350.6 352.5 349.8 350.5 350.1 348.5 352.8 342.5 358.7 334.5 365.9 326.5 389.5 302.5 408.6 284.5 432.5 263.8 444.5 254.2 474.5 232.5 486.5 224.3 491.5 221.5 500.8 217.5 507.5 215.4 514.5 214Z"/>
<path id="c35" d="M297.7 169.5 L306.5 168.5 316.5 168.9 328.5 171.1 350.5 176.1 374.5 180.5 408 183.5 423.5 184 429.5 184.8 438.5 186.8 442.5 188.4 445.5 190.2 448.5 193 450.8 196.5 452.5 200.5 453.2 204.5 453.1 208.5 452.3 213.5 450 218.5 443.3 228.5 433.5 239 422.5 249.3 348.5 314.1 321.5 336.4 307.5 346.7 294.5 354.3 289.5 356.1 286.5 356.6 268.5 355.2 245.5 350.7 240.6 348.5 237.2 345.5 235.3 341.5 233.5 332.9 230.5 326.1 227.5 321.6 215.2 306.5 212.7 302.5 211 298.5 204.6 277.5 201 260.5 201.3 256.5 204.6 241.5 208.3 230.5 212.3 222.5 217.9 214.5 224 208.5 240.4 196.5 257.1 186.5 269.5 180 283.5 173.6 290.5 171.1ZM530.8 213.5 L542.5 213.4 549.9 214.5 559.5 217 562.3 218.5 564.3 220.5 566.4 225.5 566.9 230.5 564.9 249.5 564.6 257.5 566.1 264.5 568.2 269.5 571.5 273.5 577.1 277.5 582 279.5 593.5 282.7 598.9 285.5 604.2 290.5 607.6 296.5 608.2 301.5 607 308.5 604.7 312.5 600.2 316.5 591.5 322.8 580.5 328.9 571.5 332.7 564.5 334.5 559.5 334.6 547.5 333.5 539.5 333.5 512.5 335.6 484.1 339.5 448.5 345.9 423.5 349.5 372.5 354.1 362.5 354.1 358.5 352.9 355.2 350.5 354.4 348.5 355 345.5 359.9 337.5 367.3 328.5 389.9 303.5 411.4 282.5 432.5 264.4 446.5 253.2 474.5 233 486.5 225 491.5 222.3 502.5 217.7 508.5 216.1 515.5 214.8Z"/>
<path id="c36" d="M302.6 171.5 L311.5 171 318.5 171.6 349.5 177.9 374.5 182.2 407.5 184.7 422.5 185 428.5 185.8 437.5 187.9 441.5 189.4 444.8 191.5 447.8 194.5 450.3 198.5 451.6 201.5 452.3 205.5 452.2 210.5 451.4 214.5 447.2 222.5 442.9 228.5 433.5 238.6 422.5 248.9 372.5 292.9 347.5 314.3 320.5 335.3 307.5 344.1 294.5 350.8 289.5 352.3 283.5 353.1 276.5 353.4 268.5 353.2 255.9 351.5 245.4 349.5 240.5 346.9 238.2 343.5 237.7 340.5 237.8 333.5 235.7 323.5 232.5 316.8 225.1 303.5 221.1 294.5 215.8 275.5 214 265.5 213.5 256.5 213.9 242.5 214.8 235.5 216.3 229.5 220.8 219.5 225.2 213.5 234.8 205.5 242.9 199.5 258.5 189.9 277.5 179.9 291.5 174ZM511.5 216.4 L531.5 214.8 541.5 215 546.1 215.5 557.8 218.5 559.9 219.5 562 221.5 564.5 226.5 565.1 230.5 563.4 252.5 563.5 257.5 565.1 264.5 567.5 269.8 570.7 273.5 576.3 277.5 581 279.5 593.5 282.9 598.4 285.5 603.7 290.5 606.6 295.5 607.3 299.5 605.7 305.5 603.2 309.5 598.5 314.2 590.5 320 578.5 326.7 571.5 330.1 563.5 332.5 559.5 332.7 547.5 331.3 538.5 331.3 521.5 332.4 506.5 333.9 481.5 337.3 449.5 343.2 423.5 347.2 403.5 349.2 389.5 351.1 372.5 352.4 366.5 352.4 361.9 351.5 358.9 349.5 358.1 347.5 358.5 345.5 363.1 337.5 369.2 329.5 390.9 303.5 410.9 283.5 432.5 264.9 453.5 248.4 474.5 233.5 487.5 225.1 493.5 222.2 503.5 218.3Z"/>
<path id="c37" d="M303.6 174.5 L310.5 173.8 317.5 174.1 373.5 183.7 391.5 185.2 422.5 186.2 434.7 188.5 439.5 190.1 442.5 191.7 445.9 194.5 448.5 198 450.3 201.5 451.3 205.5 451.5 210.5 450.8 214.5 446.7 222.5 442.5 228.5 433.5 238.3 422.5 248.5 372.5 292.6 350.5 311.2 333.5 324.2 318.5 334.9 306.5 342.5 296.5 347.8 292.5 349.5 287.5 350.7 276.5 351.9 268.5 351.8 256.5 350.1 246.5 347.9 243.5 346.5 241 343.5 240.6 340.5 241 332.5 239.4 322.5 237.5 317.5 230.2 302.5 226 292.5 220.8 273.5 219.4 264.5 218.8 252.5 219.6 238.5 221.4 230.5 224.7 222.5 228.8 216.5 237.5 208.7 245.5 202.5 259.6 193.5 278.5 183.4 292.5 177.2ZM511.8 217.5 L530.5 216.5 541.5 217.3 547.5 218.5 553.8 220.5 557.5 222.1 559.1 223.5 561.4 227.5 562.4 231.5 562.2 252.5 562.7 258.5 564.6 265.5 567.2 270.5 569.8 273.5 575.5 277.5 580.5 279.6 592.5 282.8 597.5 285.2 602.4 289.5 605.6 294.5 606.4 298.5 605.1 303.5 602.8 307.5 598 312.5 590.5 318.1 578.5 324.9 570.5 328.8 563.5 331.1 559.5 331.3 545.5 329.7 521.5 330.6 501.5 332.6 482.5 335.3 449.5 341.3 423.5 345.4 403.5 347.5 389.5 349.7 371.5 350.4 365.5 349.6 363.1 348.5 362.3 347.5 362.2 345.5 365.4 338.5 370.6 330.5 382.1 315.5 392.7 302.5 403.2 291.5 417.1 278.5 432.5 265.4 447.5 253.4 475.5 233.3 486.5 226.4 491.5 223.9 502.5 219.6Z"/>
<path id="c38" d="M307.4 177.5 L315.5 177.1 326.5 178 359.5 183.5 378.5 186 420.5 187.3 426.5 188 433.2 189.5 437.5 190.8 441.5 192.8 444.5 195.2 447.1 198.5 449.3 202.5 450.4 206.5 450.7 210.5 450.2 214.5 446.9 221.5 443.7 226.5 436.8 234.5 431.5 239.9 407.6 261.5 372.5 292.2 350.5 310.6 340.5 318.1 317.5 333.7 304.5 341.6 292.5 347.9 286.5 349.5 275.5 350.7 267.5 350.5 256.4 348.5 247.5 345.2 245.5 343.8 244.5 342.5 244.1 340.5 244.2 330.5 242.5 320.5 230.1 290.5 226.3 277.5 224.3 267.5 223.4 254.5 223.8 244.5 224.6 238.5 226 232.5 228.8 225.5 232.6 219.5 239.8 212.5 248.5 205.5 262.2 196.5 273.5 190.2 286.5 183.8 295.5 180.2ZM514.4 218.5 L530.5 218.7 539.5 220.1 548.5 222.8 553.5 224.9 555.8 226.5 557.5 228.9 558.7 232.5 562.2 260.5 564.2 266.5 567.1 271.5 570.2 274.5 575.5 277.9 581.5 280.2 592.5 283 596.5 284.9 601.1 288.5 604.5 293.5 605.6 297.5 604.2 302.5 601.5 307.2 596.2 312.5 589.5 317.4 574.5 325.7 569.5 328 562.5 330 558.5 330 547.5 328.4 538.5 328.4 521.5 329.1 505.5 330.6 480.5 334 422.5 343.9 403.5 346 388.5 348.3 375.5 348.4 369.5 347.3 367.7 346.5 366.7 345.5 366.6 343.5 367.5 340.5 371.3 332.5 386.1 311.5 392.5 303.5 401.5 293.9 417.8 278.5 433 265.5 449.3 252.5 476.1 233.5 487.5 226.5 493.5 223.8 503.5 220.4Z"/>
<path id="c39" d="M311.8 180.5 L328.5 180.8 378.5 187.8 418.5 188.5 429.5 190 435.5 191.7 439.5 193.5 442.5 195.5 445.3 198.5 447.5 201.9 449.3 206.5 449.9 210.5 449.6 214.5 446.4 221.5 443.4 226.5 432.5 238.6 407.3 261.5 372.5 291.9 350.5 310.1 342.5 316 317.5 331.9 295.5 344.8 291.5 346.7 285.5 348.5 275.5 349.5 268.5 349.4 259.5 347.8 252.4 344.5 249.5 342.5 247.9 340.5 247.5 328.5 245.6 318.5 242.5 309.3 234.1 288.5 230 274.5 228.6 266.5 228 253.5 228.8 243.5 230.9 233.5 234.4 225.5 239 219.5 249.5 209.9 261.5 201.5 275.5 193.5 291.5 185.7 301.5 182.3ZM508.7 220.5 L517.5 220 531.5 221.4 543.5 224.8 549.3 227.5 552.5 229.5 554.4 232.5 557.2 241.5 562.2 263.5 563.9 267.5 567.2 272.5 571.5 276.1 576 278.5 581.8 280.5 591.5 282.9 595.3 284.5 599.7 287.5 602.9 291.5 604.6 295.5 604.5 298.6 602 304.5 597.9 309.5 590.5 315.6 577.5 323.1 569.5 327 562.5 329 558.5 328.9 551.5 327.6 545.5 327.1 520.5 327.7 502.5 329.5 482.5 332.2 423.5 342.2 403.5 344.4 389.5 346.6 382.5 347 377.5 346.6 373.6 345.5 371.5 344.4 370.7 343.5 370.4 341.5 372.8 333.5 383.4 316.5 393.2 303.5 402.5 293.5 412.5 283.8 432.4 266.5 447.4 254.5 475.3 234.5 490.5 225.8 500.5 222.3Z"/>
<path id="c40" d="M316.2 183.5 L326.5 183.2 337.5 184 361.5 187.7 378.5 189.6 417.5 189.7 428.5 191.2 433.5 192.5 437.5 194.2 440.5 196 443.5 198.7 445.6 201.5 448.1 206.5 448.9 210.5 448.8 214.5 446 221.5 443.1 226.5 432.5 238.3 406.9 261.5 372.5 291.5 346.5 312.7 328.5 323.8 307.5 335.5 294.5 343.6 290.8 345.5 284.5 347.5 276.5 348.3 269.5 348.3 261.5 347 258 345.5 255.2 343.5 252.2 340.5 251.1 338.5 250.9 328.5 248.8 316.5 245.5 305.7 237.5 284.6 234 272.5 232.9 265.5 232.7 253.5 233.6 243.5 235.9 234.5 239.6 226.5 245.3 219.5 252.9 212.5 264.1 204.5 276.5 197.3 295.5 188.1 304.5 185.3ZM509.8 221.5 L518.5 221.6 530.5 223.7 541.5 227.9 546.4 230.5 549.1 232.5 551.7 236.5 556.5 246.9 562.1 265.5 566.5 272.6 570.5 276 575.1 278.5 580.9 280.5 591.5 283.2 594.8 284.5 599.2 287.5 601.8 290.5 603.6 294.5 603.5 298.5 600.7 304.5 596.5 309.5 590.5 314.5 579.5 321 570.5 325.8 563.5 327.9 559.5 328 546.5 325.9 520.5 326.2 503.5 327.8 481.5 330.8 423.5 340.6 403.5 342.8 388.5 345.2 379.5 344.9 376.5 344.1 374.3 342.5 373.4 339.5 374.7 333.5 378.8 325.5 384.4 316.5 393.5 304.1 402.5 294.3 412.5 284.4 430.8 268.5 449.4 253.5 474.7 235.5 490.5 226.5 500.5 223.2Z"/>
<path id="c41" d="M317.8 186.5 L327.5 185.8 337.5 186.2 361.5 189.6 377.5 191.2 402.5 190.8 416.5 191.1 427.5 192.5 433.5 194.1 436.5 195.5 439.7 197.5 442.5 200 444.5 202.5 447.1 207.5 448.1 211.5 448 214.5 445.6 221.5 442.7 226.5 439.6 230.5 432.5 238 406.5 261.5 372.1 291.5 358.5 302.9 346.5 312.1 340.5 316.1 328.5 322.9 305.7 334.5 293.3 342.5 287.5 345.2 282.5 346.5 274.5 347.1 268.5 346.9 261.7 345.5 257.3 342.5 254.7 338.5 253.7 323.5 251.5 312.1 245.4 292.5 240.4 279.5 238 270.5 237.4 265.5 237.3 253.5 238.3 244.5 240.8 235.5 244.1 228.5 248.5 222.5 255.5 215.8 265.5 208.2 277.5 201.1 296.5 191.8 305.5 188.7ZM500.5 224.1 L513.5 222.2 517.5 222.6 527.5 224.7 532.5 227 543.7 233.5 548.5 238.2 553.5 245.8 556.5 252 561.2 265.5 564.1 270.5 566.5 273.6 569.5 276 573.5 278.3 580.5 280.6 592.5 283.7 596.1 285.5 598.8 287.5 601.9 291.5 602.9 294.5 602.9 296.5 602.1 299.5 600.1 303.5 596.1 308.5 590.4 313.5 579.5 320.3 570.5 325.1 563.5 327.2 559.5 327.2 552.5 325.5 545.5 324.5 521.5 324.7 513.5 325.3 481.5 329.2 422.5 339.1 403.5 341.2 388.9 343.5 381.5 343.4 378.5 342.6 377 341.5 375.9 338.5 376.5 333.5 380.3 325.5 386.5 314.8 394.5 304 402.5 295.2 413.3 284.5 430.5 269.4 446.5 256.5 462.5 244.5 475.8 235.5 487.8 228.5 491.5 226.8Z"/>
<path id="c42" d="M320.4 189.5 L328.5 188.6 336.5 188.6 361.5 191.7 371.5 192.5 378.5 192.8 402.5 192 417.5 192.9 427.5 194.5 434.5 196.7 438.5 199.1 441.5 201.6 446 208.5 447.1 212.5 447 215.5 445.2 221.5 442.4 226.5 439.3 230.5 432.5 237.6 406.1 261.5 371.7 291.5 358.5 302.5 346.5 311.6 340.5 315.5 326.5 323.2 304.5 333.1 299.5 335.8 292.5 340.5 286.3 343.5 282.4 344.5 274.5 345.1 266.5 344.5 262.9 343.5 260.1 341.5 258.3 338.5 258 328.5 257.3 322.5 254.7 309.5 249.4 291.5 244.1 277.5 242.1 269.5 241.6 264.5 241.8 255.5 243.2 245.5 245.6 237.5 249.3 229.5 253.1 224.5 258.5 219.2 268.5 211.5 280.2 204.5 298.2 195.5 306.5 192.5ZM500.5 224.9 L513.5 222.9 519.5 223.7 527.5 225.8 531.5 227.9 543.1 237.5 546.5 241 550.5 246.2 554.5 252.6 560.9 267.5 566.2 274.5 569.5 276.9 572.8 278.5 591.5 283.6 595.5 285.4 598.4 287.5 601.3 291.5 602.1 294.5 602 296.5 598.9 303.5 594.9 308.5 589.5 313.1 578.5 320.2 569.5 325 563.5 326.5 559.5 326.4 548.5 323.5 542.5 322.8 527.5 322.9 512.5 323.6 500.5 324.8 476.5 328 413.5 338.6 387.5 341.5 382.5 341.1 379.5 339.8 378.5 337.3 379 333.5 382.5 324.9 388.5 313.8 393.5 306.6 397.5 301.9 403.5 295.3 413.4 285.5 430.5 270.5 450.3 254.5 462.4 245.5 475.5 236.5 491.5 227.5Z"/>
<path id="c43" d="M327.9 193.5 L334.5 192.7 340.5 192.6 350.5 193 365.5 194.6 397.5 193 403.5 193.2 411.1 194.5 422.5 197.8 431.5 199.5 438.5 202.7 442.5 206.6 445.4 211.5 446 214.5 445.4 219.5 443.8 223.5 440.6 228.5 431.5 238.3 405.7 261.5 372.4 290.5 358 302.5 346.5 311.1 339.5 315.5 321.5 325 304.5 330.9 289.5 336.8 284.5 338.1 280.5 338.5 273.5 338.1 268.5 336.9 267.5 336.3 266.3 334.5 262.5 319.5 252.1 289.5 248.9 281.5 246.7 272.5 246.1 266.5 246.8 259.5 248.8 251.5 251.5 243.6 255.5 235.5 260.2 229.5 271.5 219.6 280.5 213.5 293.9 205.5 304.5 200.3 318.5 195.6ZM505.9 224.5 L512.5 223.5 517.5 223.9 526.5 226.2 530.5 228.3 534.1 231.5 543 242.5 557 265.5 560 269.5 565.5 275.5 568.5 277.5 571.5 278.7 592.5 284.2 598 287.5 600.8 291.5 601.3 295.5 598.5 302.2 594.7 307.5 589.1 312.5 579.5 319 570.5 324 563.5 326 559.5 325.8 545.5 321 540.5 319.8 537.5 319.7 522.5 320.9 500.5 321.9 482.5 324.1 459.5 327.7 420.5 335.4 408.5 337.3 400.5 337.6 390.5 337.1 386.5 336.5 384.9 335.5 384.3 333.5 385.3 327.5 387.7 320.5 390.6 314.5 395.5 307 401.5 299.5 413.6 287.5 435.5 268.5 451.3 255.5 464.4 245.5 474.5 238.5 490.9 228.5 496.5 226.6Z"/>
<path id="c44" d="M385.9 194.5 L395.5 193.8 403.5 194.5 410.8 197.5 419.5 203.1 429.5 203.9 436.5 205.9 441.5 209.6 444.5 214 445 218.5 443.4 223.5 439.5 229.5 434 235.5 406.4 260.5 363.6 297.5 349.5 308.5 341.5 313.8 322.5 323.8 313.5 326.9 300.5 329.3 284.5 330.4 278.5 330 274.6 328.5 273.2 326.5 260.5 302.5 252.6 282.5 250.8 274.5 250.8 267.5 252.5 260.7 258.5 247.8 263.7 239.5 276.5 227.2 286.5 219.8 296 213.5 305.5 208.1 320.5 201.7 331.5 198.4 340.5 196.9 351.5 196.4 363.5 197.8ZM501.5 226 L513.5 224.1 520.5 225.1 527.5 227.2 531.5 229.9 533.6 232.5 536.9 238.5 539.3 244.5 541.3 251.5 543 254.5 552.4 266.5 564.5 277.1 568.5 279.2 576.5 280.3 589.7 283.5 594.5 285.4 597.5 287.5 600.3 291.5 600.5 295.5 597.2 302.5 593.5 307.6 587.9 312.5 578.5 319 569.5 324 563.5 325.5 559.5 325.1 552.5 322.5 543.5 316.1 540.5 315.3 521.5 318.3 498.5 318.4 471.5 321.8 455.5 324.6 408.5 335.3 404.5 335.4 401.5 334.9 393.5 332.1 391.5 331 390.7 329.5 390.5 326.5 392.5 318.5 399.2 307.5 406.1 298.5 453.3 257.5 477.4 238.5 487.3 231.5 492.5 228.5Z"/>
<path id="c45" d="M378.5 196.7 L394.5 194.6 401.5 195.2 405 196.5 408.7 199.5 411.1 202.5 413.4 207.5 414.5 208.4 423.5 209.3 431.5 208.8 435.5 209.5 438.5 210.6 442.5 213.8 444 216.5 444.2 220.5 442.5 224.5 439.2 229.5 432.5 236.6 395.6 269.5 359.4 300.5 347.5 309.4 341 313.5 321.5 323.5 316.5 325.2 312.5 325.9 300.5 326.5 283.5 322.4 279.5 320.8 264.2 301.5 256.2 283.5 254.7 278.5 254.6 271.5 256.1 266.5 258.5 262.2 268.5 247.7 283.5 233.2 298.5 221.5 310.5 213.9 323.5 207.3 334.5 203 343.5 200.6 353.5 199.6 357.5 199.8 363.5 201.1ZM506.7 225.5 L512.5 224.6 519.5 225.3 526.5 227.4 531.2 230.5 533.2 233.5 535 239.5 535.4 243.5 535.2 251.5 536 254.5 541 261.5 549.3 269.5 566.5 280.5 568.5 280.9 575.5 280.6 585.5 282.6 592 284.5 597.1 287.5 599.4 290.5 600 292.5 599.9 294.5 596.7 301.5 592.5 307.4 587.5 312 578.4 318.5 569.5 323.5 563.5 325 559.4 324.5 552.6 321.5 550.6 319.5 545.8 312.5 543.5 311.2 541.5 311 537.5 311.5 520.5 316 498.5 314.9 482.4 316.5 462.7 319.5 455.5 320.8 440.2 324.5 408.5 333.5 405.5 333.5 403.5 333 396 327.5 395.1 324.5 395.9 319.5 401.8 309.5 407.5 301.2 437.6 275.5 469.5 247.3 487.5 232.5 493.5 228.9Z"/>
<path id="c46" d="M393.2 195.5 L397.5 195.4 400.5 195.9 403.5 197.1 405.4 198.5 407.2 200.5 408.8 203.5 409.8 210.5 410.5 211.8 423.5 213 430.5 211.6 436.5 211.9 439.5 213.3 442.5 215.9 443.6 218.5 443.5 221 441.6 225.5 439.7 228.5 432.5 236.3 405.3 260.5 368.4 292.5 354.8 303.5 341.5 312.5 321.9 322.5 314.5 324.5 301.5 324.3 295.5 322.1 284.5 317.1 279.5 313.3 268 301.5 265.8 298.5 263.2 293.5 257.9 280.5 257.3 275.5 258.3 270.5 261.2 265.5 271.9 252.5 277.5 247.8 287.5 237.7 293.5 232.4 302.5 225.2 314.5 217.1 325.5 210.9 337.5 205.3 344.5 203 351.5 201.7 356.5 201.7 361.5 203.4 363.5 203.5 379.5 197.6ZM509.4 225.5 L514.5 225.1 521.5 226.2 527.5 228.4 531.2 231.5 532.6 234.5 533.6 240.5 532.2 251.5 532.5 254.9 534.5 258.7 538.4 263.5 546.5 270.5 556.5 275.9 565.5 281.6 568.5 282.1 574.5 281.1 577.5 281.2 591.4 284.5 596.6 287.5 598.8 290.5 599.4 292.5 599.2 294.5 596.4 300.5 592.4 306.5 587.1 311.5 577.5 318.5 569.5 323 563.5 324.5 559.5 323.9 553.5 321.1 552 319.5 547.5 311 545.5 309.4 541.5 308.6 536.3 309.5 519.5 314.4 497.5 313 481.5 314.5 456 318.5 440 322.5 408.5 332.2 404.5 331.7 399.5 327.5 397.7 324.5 397.9 320.5 404 309.5 408.8 302.5 439.5 276.5 460.5 257.2 488.5 232.9 491.8 230.5 494.5 229.2Z"/>
<path id="c47" d="M392 196.5 L396.5 196.3 399.5 196.6 402.5 197.8 404.7 199.5 406.3 201.5 407.7 204.5 408.1 211.5 408.5 212.8 409.4 213.5 419.5 213.9 424.5 214.6 430.5 213 435.5 213.1 438.5 214.2 441.5 216.4 442.8 218.5 442.8 221.5 441.2 225.5 439.4 228.5 431.9 236.5 367.6 292.5 352.6 304.5 347 308.5 340.2 312.5 321.7 321.5 318.5 322.5 314.5 323.1 302.5 322.4 296.5 320.1 286.5 315.4 280.5 311 269.5 299.8 265.1 292.5 260.6 281.5 259.6 276.5 260.5 271.5 263.9 265.5 273.5 253.5 294.5 233.8 303.5 226.6 316.5 217.8 326.5 212.1 337.5 206.9 345.5 204.2 352.5 203 356.5 203.1 361.5 204.9 363.5 205 379.5 198.8ZM507.2 226.5 L513.5 225.5 520.5 226.4 526.7 228.5 530.5 231.5 531.8 234.5 532.6 239.5 532.4 243.5 530.9 251.5 531.5 255.9 533.5 259.5 537.5 264.4 545.9 271.5 554.5 275.9 565.5 282.7 568.5 283.1 574.5 281.7 577.5 281.6 590.5 284.4 593.1 285.5 596.1 287.5 598.3 290.5 598.7 292.5 598.5 294.3 595.5 300.5 591.5 306.3 586.5 311.1 578.2 317.5 569.5 322.5 564.5 323.9 560 323.5 554.5 320.9 552.5 318.5 548.5 310.4 545.5 308.2 541.5 307.4 535.6 308.5 519.5 313.3 497.5 311.8 480.4 313.5 455.5 317.4 439.4 321.5 408.5 331.1 406.5 331.1 404.5 330.5 401.1 327.5 399.1 324.5 398.8 322.5 399.3 320.5 404 311.5 409.5 303.5 440 277.5 461.5 257.7 489 233.5 494.5 230Z"/>
<path id="c48" d="M391.4 197.5 L398.5 197.4 401.5 198.4 403.5 199.8 405 201.5 406.5 204.5 406.9 207.5 406.7 212.5 407.5 214.1 408.5 214.7 419.5 215.1 424.5 215.8 429.5 214.4 433.5 214.1 436.5 214.6 438.6 215.5 441.5 218.1 442.3 220.5 441.6 223.5 439.7 227.5 437.5 230.4 430.5 237.4 358.3 299.5 346.5 308 338.3 312.5 325.5 318.3 319.9 320.5 315.5 321.2 305.5 320.7 301.5 319.9 295.5 317.5 285.5 312.4 280.5 308.2 272.1 299.5 269.7 296.5 266.9 291.5 263.2 282.5 262 276.5 262.9 271.5 266 265.5 274.5 254.5 289.5 239.8 295.5 234.5 304.5 227.4 317.5 218.6 327.5 213 337.5 208.1 344.5 205.7 352.5 204.1 356.5 204.3 361.5 206.2 363.5 206.3 380.5 199.5ZM510 226.5 L514.5 226.1 521.5 227 526.5 229 529.6 231.5 531 234.5 531.8 239.5 531.7 242.5 530 251.5 530.5 255.9 532.4 259.5 536.5 264.6 544.3 271.5 554.5 276.9 565.5 283.6 568.5 283.9 576.5 282 580.6 282.5 590.5 284.7 594.2 286.5 596.5 288.5 598 291.5 597.9 293.5 597.3 295.5 592.5 304 587.4 309.5 578.7 316.5 574 319.5 568.5 322.4 564.5 323.4 560.5 323.1 555.2 320.5 553.4 318.5 550.5 311.8 548.5 309.1 545.5 307.2 541.5 306.5 536.5 307.4 519.5 312.3 497.5 311 481.3 312.5 455.7 316.5 439.8 320.5 413.5 329 408.5 330.2 405.5 329.9 402.3 327.5 400.2 324.5 399.9 322.5 400.3 320.5 404.9 311.5 410.5 303.8 441.2 277.5 461.8 258.5 489.5 234.2 495.2 230.5Z"/>
<path id="c49" d="M391.3 198.5 L398.5 198.4 401.5 199.6 403.5 201.3 405.6 205.5 405.9 208.5 405.4 213.5 405.6 214.5 406.7 215.5 409.5 216 419.5 216.2 424.5 216.9 430.5 215.3 433.5 215.1 436.5 215.7 438.5 216.6 440.6 218.5 441.5 220.5 441.1 223.5 439.4 227.5 434.5 233.1 429.9 237.5 357.2 299.5 347.5 306.5 333.5 313.4 318.5 318.8 312.5 319.2 303.5 318.3 296.5 315.7 287.5 311.2 281.6 306.5 273.9 298.5 268.6 290.5 265.4 282.5 264.3 276.5 265.3 271.5 268 265.5 275.3 255.5 289.5 241.2 295.5 235.9 304.5 228.7 318 219.5 328.5 213.7 338.5 208.9 345.5 206.5 352.5 205.2 356.5 205.4 361.5 207.4 363.5 207.5 380.5 200.6ZM508.1 227.5 L513.5 226.6 520.5 227.2 525.5 229 528.7 231.5 530.3 234.5 531 239.5 529.2 251.5 529.3 254.5 529.9 256.5 532.1 260.5 536.2 265.5 544.4 272.5 554.5 277.6 562.5 283 565.5 284.4 568.5 284.7 575.5 282.7 578.5 282.6 588.9 284.5 593.6 286.5 595.9 288.5 597.3 291.5 596.5 295.5 591.9 303.5 586.5 309.4 574.7 318.5 569.3 321.5 564.5 322.8 560.5 322.4 555.5 319.8 553.7 317.5 551.2 311.5 549 308.5 545.5 306.4 541.5 305.8 537 306.5 526.5 309.8 519.5 311.4 497.5 310.2 480.5 311.8 456.5 315.6 439.5 319.8 414.5 327.9 408.5 329.3 405.5 328.9 402.5 326.5 400.9 323.5 400.9 321.5 401.9 318.5 406.3 310.5 411.5 303.9 421.5 294.8 441 278.5 462.5 258.8 489.5 235.2 495.5 231.3Z"/>
<path id="c50" d="M391.4 199.5 L395.5 199.2 398.5 199.5 401 200.5 403.1 202.5 404.7 206.5 404.8 209.5 403.8 214.5 403.9 215.5 404.8 216.5 408.5 217.1 418.5 217.2 423.5 218 430.5 216.3 435.5 216.5 438.5 217.9 440.5 220.5 440.5 223.5 439.5 226.6 437.5 229.5 430.5 236.5 380.5 278.1 357.1 298.5 347.5 305.5 335.5 311 325.5 314.8 318.5 316.9 312.5 317.2 304.5 316.4 297.5 314 288.6 309.5 283.5 305.5 276.7 298.5 271 290.5 267.9 283.5 266.6 276.5 267.8 270.5 269.8 265.5 275.2 257.5 291.8 240.5 303.5 230.7 318.3 220.5 329.1 214.5 338.5 210 345.5 207.6 352.5 206.2 356.5 206.4 361.5 208.7 363.5 208.7 380.5 201.7ZM511.3 227.5 L516.5 227.2 521.5 227.8 525.4 229.5 528.6 232.5 529.7 235.5 530.3 239.5 528.4 251.5 529 256.5 531.1 260.5 535.2 265.5 543.1 272.5 547.5 275.1 554.5 278.3 561.5 283.3 564.5 285 568.5 285.5 576.5 283.2 582.5 283.5 590.9 285.5 592.9 286.5 595.3 288.5 596.3 290.5 596.6 292.5 595.3 296.5 591 303.5 585.5 309.4 573.6 318.5 568.5 321.2 564.5 322.2 560.5 321.8 556.3 319.5 554.6 317.5 551.5 310.5 549.5 307.9 545.5 305.6 541.5 305 537.5 305.7 527.5 308.8 519.5 310.5 497.5 309.4 485.5 310.4 468.5 312.8 454.5 315.1 439.5 318.9 410.5 328.2 406.5 328.4 403.5 326.5 402.1 324.5 401.7 322.5 402.2 319.5 404.1 315.5 409.8 306.5 417 299.5 440.6 279.5 463.5 258.8 490.5 235.4 494.5 232.7 497.1 231.5 503.5 229.4Z"/>
<path id="c51" d="M391.4 200.5 L395.5 200.2 398.5 200.5 400.6 201.5 402.6 203.5 403.5 205.5 403.8 208.5 403.3 211.5 401.5 216.5 401.8 217.5 402.5 217.9 418.5 218.2 423.5 219.1 425.5 219 430.5 217.4 435.5 217.5 438.5 219.2 439.8 221.5 439.7 224.5 438.5 227.5 433.5 233.2 427.5 238.5 380.5 276.8 356.5 297.9 348.5 303.8 345.5 305.5 341.5 306.7 331.5 311.1 321.5 314.2 316.5 315.1 309.5 315 301.5 313.4 291.5 308.9 285.5 304.5 279.4 298.5 272.8 289.5 270 283.5 268.9 277.5 270 269.5 271.5 265.5 276.8 257.5 285.5 248 292.1 241.5 303.5 232 318.5 221.5 338.5 211.1 345.5 208.7 352.5 207.2 356.5 207.5 361.5 210 363.5 209.9 381.5 202.5ZM509.7 228.5 L515.5 227.8 521.5 228.2 524.5 229.5 527.6 232.5 528.9 235.5 529.5 239.5 527.6 251.5 528 256.5 530 260.5 534.1 265.5 537.5 269 542.5 273 546.6 275.5 554.5 278.9 561.5 284.3 564.5 285.9 568.5 286.3 576.5 283.9 581.5 283.8 586.4 284.5 589.8 285.5 592.1 286.5 594.6 288.5 595.6 290.5 595.8 292.5 594.5 296.5 590.5 302.9 585.5 308.5 572.5 318.4 568.5 320.5 564.5 321.5 560.5 321 556.3 318.5 554.9 316.5 551.9 309.5 549.5 306.8 545.5 304.8 541.5 304.3 536.5 305.2 526.5 308.5 519.5 309.7 497.5 308.5 484.5 309.7 468.5 311.9 454.5 314.3 439.5 318 410.5 327.3 406.5 327.5 403.6 325.5 402.6 323.5 402.5 321.5 403.2 318.5 405.1 314.5 410.5 306.5 417.5 299.7 490.5 236.5 496.9 232.5Z"/>
<path id="c52" d="M391.6 201.5 L395.5 201.2 398.5 201.6 400.5 202.7 402.4 205.5 402.8 207.5 402.4 210.5 398 218.5 397.8 219.5 398.5 220.2 408.5 219.2 415.5 219.2 424.5 220.2 430.5 218.4 434.5 218.4 437.2 219.5 438.8 221.5 439.1 223.5 438.5 226.6 436.5 229.5 427.9 237.5 389.5 268 355.5 297.4 345.5 304.4 341 305.5 331.1 309.5 320.5 312.3 315.5 313 309.5 312.8 302.5 311.3 293.5 307.5 286.5 302.6 280.5 296.8 274 287.5 271.9 282.5 271.1 277.5 272.1 267.5 276.1 260.5 279.2 256.5 286.5 248.4 297.5 238.2 310 228.5 319.5 222.1 339.5 211.8 345.5 209.7 353.5 208.2 356.5 208.6 360.5 211.1 362.5 211.3 381.5 203.6ZM331.5 291.4 L326 293.5 325.6 294.5 326.5 295.5 329.5 297 332.5 297.8 334.5 297.5 336.5 291.4 335.5 290.7ZM514 228.5 L519.5 228.3 522.5 229 524.9 230.5 527.3 233.5 528.5 239.5 526.5 251.5 526.8 256.5 528.1 259.5 530 262.5 534.4 267.5 539.5 272.1 545.5 275.8 554.5 279.4 560.5 284.8 564.5 287 569.5 287.1 577.5 284.6 582.5 284.4 588.5 285.5 591 286.5 593.7 288.5 594.7 290.5 594.9 292.5 593.6 296.5 589.8 302.5 584.5 308.3 572.6 317.5 568.5 319.6 564.5 320.7 560.5 320.2 556.5 317.5 552.9 309.5 550.5 306.3 546.5 304.1 542.5 303.4 538.5 303.9 528.5 307.3 522.5 308.5 516.5 308.8 497.5 307.4 481.5 308.9 466.5 311 454.5 313.1 439.5 316.9 417.3 324.5 410.5 326.4 406.6 326.5 404.5 325.2 403.5 323.5 403.2 320.5 404.1 317.5 406.7 312.5 411.5 306 422.5 295.7 440.6 280.5 464.5 259.4 490.8 237.5 495.5 234.3 499.4 232.5 508.5 229.5Z"/>
<path id="c53" d="M391.9 202.5 L395.5 202.2 398.5 202.8 400.7 204.5 401.7 207.5 400.8 211.5 393.5 221.5 392.9 222.5 393.5 223.2 408.5 220.3 418.5 220.3 423.5 221.4 430.5 219.5 433.5 219.3 435.5 219.8 437.6 221.5 438.3 224.5 437.4 227.5 433.5 231.8 429.5 235.4 388.5 267.5 354.5 297 345.5 303.2 331.5 306.6 318.5 308.4 313.5 308.7 307.5 308 300.4 306.5 293.5 303.9 286.5 299.6 282.1 295.5 276.9 287.5 274 280.5 273.4 277.5 273.1 271.5 273.5 267.5 277.5 260.5 282.3 254.5 292.5 244 298.7 238.5 310.5 229.4 320.5 222.7 331.5 216.7 340.5 212.5 346.5 210.5 353.5 209.2 356.5 209.8 360.5 212.6 362.5 212.6 382.5 204.3ZM316.5 280.4 L311.3 283.5 309.9 285.5 310.1 287.5 312.5 291.1 318.5 295.9 325.5 300.1 328.5 301 333.5 301.5 335.5 301.2 336.3 300.5 338 294.5 341.6 287.5 342.1 285.5 340.5 285.5 332.5 289 324.5 290.9 321.5 290.8 318.9 289.5 317.5 287.5 317 284.5 317.3 281.5ZM512.3 229.5 L517.5 228.8 520.5 228.9 523.5 230.1 525.7 232.5 526.8 235.5 527.1 239.5 524.3 252.5 524.2 255.5 524.6 258.5 525.8 261.5 528.5 265.1 536.5 272.1 543.5 276.1 553.8 279.5 556.3 281.5 560.5 286.5 563.5 288.4 566.5 288.7 569.5 288.3 577.5 285.7 582.5 285.2 586.1 285.5 589.5 286.5 592.7 288.5 593.9 291.5 593.2 295.5 589.5 301.4 584.5 307 572.4 316.5 568.5 318.6 564.5 319.7 560.5 319.2 557.5 317.4 556.2 315.5 553.2 307.5 550.5 304.3 547.5 302.9 542.5 302.3 537.5 303.4 528.5 306.8 523.5 307.6 516.5 307.4 500.5 304.9 464.5 308.2 453.5 310.7 439.5 314.9 413.3 324.5 408.5 325.6 406.5 325.3 405.2 324.5 404.1 322.5 404 319.5 407.1 312.5 411.6 306.5 422.5 296.1 464.5 260.1 488.5 240.6 494.5 236.4 499.5 233.6 505 231.5Z"/>
<path id="c54" d="M392.1 203.5 L395.5 203.3 398.5 204.1 400.3 206.5 400.4 209.5 398.1 213.5 393.2 219.5 389.1 223.5 388.4 224.5 388.5 225.7 389.5 226.1 391.5 225.9 403.5 222.3 408.5 221.3 417.5 221.3 423.5 222.6 432.5 220.4 435.5 221.1 436.9 222.5 437.4 224.5 436.6 227.5 430.5 233.7 389.4 265.5 354.5 295.7 345.5 302.1 343.5 302.6 340.5 302.5 338.9 301.5 338.5 299.5 338.9 295.5 345.1 284.5 345.4 283.5 344.5 282.6 341.5 283.4 332.5 287.7 325.5 289.4 321.5 289.3 319.5 287.9 318.5 285.5 318.9 282.5 320.3 278.5 320.3 277.5 319.5 276.9 317.5 277.5 310.3 282.5 307.6 285.5 306.6 289.5 306.7 297.5 305.5 299.2 301.5 299.6 292.5 298.5 286.5 296.2 283.3 293.5 280.6 288.5 278.6 280.5 276.5 277.4 275 273.5 274.3 270.5 274.8 267.5 278.8 260.5 283.6 254.5 293.4 244.5 300.5 238.3 308.5 232 320.5 223.8 331.5 217.8 342.5 212.8 350.5 210.6 353.5 210.3 356.5 211.1 359.5 213.9 361.5 214.1 372.5 209.2 382.5 205.4ZM510.5 230.7 L519.5 229.2 521.5 229.6 524.2 231.5 525.1 233.5 525.3 236.5 524.5 239.8 517.9 254.5 516.5 259.5 517.1 261.5 525.2 273.5 526.5 274.4 528.5 275 550.5 278.7 553.5 279.8 556.3 282.5 559.5 290.4 560.5 291.6 561.5 291.9 567.5 290.9 576.5 287.5 580.5 286.4 585.5 286.3 589.9 287.5 591.5 288.6 592.6 290.5 592.5 294.5 589.5 299.9 583.5 306.5 570.5 316.3 566.5 318.1 562.5 318.6 559.5 317.7 557.2 315.5 556.1 312.5 554.1 302.5 552.7 300.5 551.5 300.1 547.5 300.1 542.5 300.8 528.5 306.2 523.5 306.9 520.6 306.5 517.9 305.5 514.7 303.5 509.5 298.8 507.5 298 502.5 298.4 486.5 301.1 481.5 301.4 474.5 301.1 465.5 299.5 461.5 300.5 451.5 304.7 414.5 322.2 408.5 324.1 406.5 323.8 405.5 323.2 404.4 320.5 405 317.5 407.5 312.5 411.5 307.2 422.5 296.5 452.5 270.8 465.5 259.9 486.5 243.6 494.5 238.1 498.8 235.5 505.4 232.5Z"/>
<path id="c55" d="M391.7 204.5 L395.5 204.3 397.5 204.9 399.1 206.5 399.3 209.5 397.7 212.5 392.7 218.5 385.7 225.5 384.7 227.5 385.5 228.2 390.2 227.5 400.5 224.1 408.5 222.2 417.5 222.2 422.5 223.8 432.5 221.4 434.5 221.8 436.1 223.5 436.4 225.5 435.7 227.5 430.5 232.8 389.4 264.5 353.5 295.4 345.5 301.1 343.5 301.5 341.5 301.3 339.8 299.5 339.6 297.5 340.9 293.5 347 283.5 347.7 281.5 347.5 280.7 346.5 280.5 343.5 281.5 332.5 286.7 326.5 288.3 322.5 288.4 320.7 287.5 319.6 285.5 320 282.5 322.3 276.5 322.4 275.5 321.5 274.7 317.5 276.3 308.7 282.5 300.5 290.8 297.5 292.7 292.5 294 289.5 294.1 286.5 293.3 284.5 291.6 283.5 289.5 283.3 286.5 285.1 276.5 284.5 275.4 279.5 275 277.5 274.1 275.7 271.5 275.4 269.5 275.8 267.5 279.2 261.5 284.8 254.5 294.5 244.7 302.5 237.8 309.5 232.3 320.5 224.9 331.5 218.8 342.5 213.8 348.5 212 353.5 211.3 356.5 212.5 358.5 215.5 360.5 215.6 372.5 210.1 382.5 206.3ZM514.1 230.5 L519.5 229.7 522.3 230.5 523.9 232.5 523.7 235.5 517.5 244.7 504.8 259.5 503.6 261.5 503.5 262.5 504.4 263.5 511.5 267.6 514.5 270.4 515.8 272.5 517 276.5 517.1 280.5 516.4 283.5 514.8 285.5 508.5 289 502.5 291.3 492.5 294.4 483.5 295.9 478.5 295.4 474.5 293.9 471.6 291.5 469.5 287.9 468.5 287.1 467.5 287.1 454.5 294.8 418.5 318 409.5 322.3 407.5 322.6 405.5 321.6 405.1 319.5 406.2 315.5 407.9 312.5 411.7 307.5 422.5 296.9 452.5 271.2 465.5 260.5 488.5 243.7 502.5 235.1 509.5 231.9ZM536.5 281 L546.5 279 550.5 279.2 553.5 280.2 555 281.5 556.1 283.5 556.2 286.5 554.5 290.9 552.8 293.5 550.5 295.1 538.5 301.3 529.5 305.3 524.5 306.3 522.5 306 520.5 304.9 519.5 303.5 518.9 301.5 518.8 296.5 520.3 291.5 522.5 287.5 524.8 285.5 527.5 284.2ZM581.9 287.5 L585.5 287.3 588.5 287.9 590.5 289.1 591.5 290.5 591.9 292.5 591.5 294.5 590.7 296.5 588.7 299.5 582.5 305.9 570.5 314.9 566.5 317 564.5 317.5 561.5 317.4 559.2 316.5 558.2 315.5 557.3 313.5 556.9 309.5 558.2 303.5 560.5 298.6 565.5 294.9 572.5 291 577.5 288.6Z"/>
<path id="c56" d="M383.5 206.8 L394.5 205.1 397.5 206.1 398.5 208.5 398 210.5 391.7 218.5 378.7 230.5 377.3 232.5 378.7 232.5 399.5 225.1 408.5 222.9 416.5 222.9 422.5 224.7 429.5 222.7 432.5 222.3 434.9 223.5 435.4 224.5 435.2 226.5 433.1 229.5 429.5 232.8 389.5 263.5 353.5 294.5 345.5 300.2 343.5 300.6 341.5 299.9 340.6 298.5 340.6 296.5 342.9 291.5 350.8 279.5 351.6 277.5 350.5 277.5 348.1 278.5 332.5 286 325.5 287.7 322.5 287.5 321.5 286.9 320.6 285.5 320.6 283.5 325.9 271.5 325.5 271 317.2 275.5 298.5 289 290.5 292.2 287.5 291.9 285.7 290.5 285 288.5 285.1 286.5 287.7 279.5 289.9 275.5 300.5 261.3 299.3 261.5 287.5 270 281.5 272.9 279.5 273.1 277.5 272.2 276.5 270.5 276.7 267.5 280.2 261.5 284.9 255.5 294.8 245.5 302.5 238.7 309.5 233.2 320.5 225.8 332.5 219.1 343.5 214.2 350.5 212.4 353.5 212.2 356 213.5 357.5 217.3 358.5 217.3 377.5 208.9ZM516.5 230.5 L519.5 230.2 521.5 230.7 523 232.5 522.8 234.5 520.1 238.5 512.5 246 452.7 290.5 422.5 313.8 416.5 317.7 410.5 320.7 407.5 321.4 406 320.5 405.7 318.5 407.1 314.5 412.5 307.1 422.5 297.2 453.5 270.7 465.5 261.1 475.5 253.8 495.5 240.3 508.5 233.1ZM498.3 270.5 L502.5 270.2 506.5 270.6 510.5 272.9 511.5 274.5 511.9 276.5 511.1 279.5 509.5 281.8 505.5 284.9 501.5 287.2 495.5 289.9 489.5 291.9 482.5 292.9 479.5 292.2 477.2 290.5 476.2 288.5 476.3 285.5 477.6 282.5 480.5 279 487.5 274.1 492.5 271.9ZM543.3 280.5 L546.5 279.7 550.5 279.6 552.5 280.2 554.4 281.5 555.4 283.5 555.3 285.5 552.5 290.1 548.5 293.7 543.5 297.3 531.5 303.9 528.5 305.2 525.5 305.7 523.3 305.5 521.6 304.5 520.7 302.5 520.9 299.5 522.2 296.5 525.1 292.5 529.5 288.3 535.5 284ZM577.5 289.7 L584.5 288.2 587.5 288.5 589.5 289.4 590.4 290.5 591 292.5 590.7 294.5 589.9 296.5 587.7 299.5 581.5 305.6 570.5 313.9 564.5 316.6 561.5 316.6 559.5 315.7 558.1 313.5 557.9 309.5 559.2 305.5 562.3 300.5 566.3 296.5 571.5 292.8Z"/>
<path id="c57" d="M384.5 207.2 L393.5 205.8 396.4 206.5 397.6 208.5 397.1 210.5 390.8 218.5 374.5 232.7 368.1 237.5 367.1 238.5 367.5 239.1 373.5 235.9 387.5 230.1 396.5 226.7 406.5 223.9 410.5 223.4 415.5 223.5 417.5 223.8 421.5 225.6 429.5 223.4 432.5 223.2 434.3 224.5 434.3 226.5 432.3 229.5 428.5 233 396.2 257.5 374.4 275.5 357.5 290.4 345.5 299.4 343.5 299.7 341.6 298.5 341.4 296.5 342 294.5 345.4 288.5 355.6 274.5 354.5 274.4 352 275.5 332.5 285.3 325.5 287 322.5 286.6 321.2 284.5 321.6 282.5 322.9 279.5 326.2 273.5 332.5 265.3 331.5 265.3 329.5 266.5 298.5 287.9 290.5 291.1 288.5 291 286.5 289.5 286.1 287.5 286.8 284.5 290.7 276.5 296.6 268.5 310.7 252.5 310.5 252.1 309.5 252.5 306.5 254.3 292.5 265 283.5 270.9 280.5 272 278.5 271.6 277.2 269.5 277.5 267.5 280.3 262.5 285.8 255.5 295.7 245.5 303.5 238.7 310.5 233.2 321.5 225.9 332.5 219.8 343.5 214.9 350.5 213.1 353.5 213 355.5 214.5 355.8 216.5 355.2 218.5 355.5 219.1 356.5 219 376.5 210ZM366.5 239.5 L366.5 239.5 366.5 239.5ZM514.7 231.5 L518.5 230.7 520.5 230.9 521.6 231.5 522.2 233.5 519.8 237.5 512.5 244.6 452.3 289.5 422.5 312.7 416.5 316.7 410.5 319.8 407.5 320.4 406.5 319.7 406.6 316.5 408.5 312.8 411.7 308.5 417.4 302.5 423.5 296.7 453.5 271.1 466.5 260.9 488.5 245.6 504.5 235.9 509.5 233.4ZM495 272.5 L500.5 271.6 506.5 272 508.5 272.9 510 274.5 510.5 276.5 510.1 278.5 508.5 280.9 504.5 284.1 499.5 286.9 492.5 289.8 483.5 291.8 480.5 291.3 478.5 290 477.4 287.5 477.6 285.5 479.2 282.5 480.8 280.5 486.5 276.1ZM546.1 280.5 L549.5 280 551.5 280.3 553.5 281.2 554.5 282.5 554.8 283.5 554.5 285.5 551.5 289.8 543.5 296.3 532.5 302.9 526.5 305.1 524.5 305.1 522.5 304.2 521.6 302.5 521.9 299.5 524.1 295.5 526.7 292.5 531.5 288.1 537.5 284ZM576.5 291 L583.5 288.9 586.5 289 588.5 289.7 589.5 290.5 590.3 292.5 590.1 294.5 587.8 298.5 580.5 305.6 570.5 313.1 564.5 315.9 561.5 315.9 559.5 314.7 558.6 312.5 558.9 308.5 560.2 305.5 562.8 301.5 566.5 297.5 569.5 295.1Z"/>
<path id="c58" d="M392.4 206.5 L395.5 207 396.5 208 396.7 209.5 395.8 211.5 391 217.5 374.5 231.7 366.6 237.5 358.7 244.5 360 244.5 373.5 236.9 386.5 231.2 396.5 227.3 405.5 224.7 409.5 224 415.5 224 417.5 224.6 420.5 226.3 421.5 226.3 428.5 224.2 431.5 223.8 433.1 224.5 433.5 225.2 433.1 227.5 430.7 230.5 426.5 234.1 395.5 257.5 373.7 275.5 357.5 289.9 345.5 298.6 343.5 298.8 342.2 297.5 342.3 295.5 343.1 293.5 349 284.5 358.7 272.5 358.6 271.5 344.5 279.1 332.5 284.7 327.5 286.1 324.5 286.4 322.5 285.5 322 284.5 323 280.5 326.4 274.5 331.5 268.2 341 258.5 340.5 257.9 336.3 260.5 321.5 271.3 299.5 286.5 291.5 290 289.5 290.2 287.5 289.2 287.1 286.5 287.9 283.5 292.3 275.5 296.7 269.5 303.5 261.7 319.7 245.5 320.6 244.5 320.5 244.1 319 244.5 315.8 246.5 292.5 264.1 283.5 270.1 280.5 271.1 278.6 270.5 278 268.5 278.6 266.5 283.3 259.5 290.2 251.5 302.5 240.3 309.7 234.5 324.5 224.8 333.5 220 344.5 215.2 351.5 213.6 353.5 213.8 354.5 214.5 354.8 216.5 353.8 218.5 351.1 221.5 351.5 222.4 368.5 214 377.5 210.2 384.5 207.8ZM342.1 257.5 L341 257.5 341.5 257.9ZM353.5 248.4 L353.4 248.5 353.6 248.5ZM509.5 234 L518.5 231.3 520.5 231.7 521.2 232.5 521 234.5 518.5 237.9 511.5 244.4 451.1 289.5 422.5 311.9 412.5 318.1 409.5 319.4 407.5 319.4 406.9 317.5 408.4 313.5 411.5 309.2 417.8 302.5 423.5 297 452.5 272.2 465.5 262.1 496.5 241.3ZM499.1 272.5 L504.5 272.4 507.8 273.5 509 274.5 509.7 276.5 508.6 279.5 506.5 281.6 501.5 284.9 491.5 289.3 483.5 291 481.5 290.8 479.2 289.5 478.2 287.5 478.5 285.5 480.2 282.5 483.1 279.5 486.5 277 490.5 274.9 495.5 273.2ZM544.8 281.5 L549.5 280.5 552.5 281.1 554 282.5 554.2 283.5 553.8 285.5 551.5 288.7 547.3 292.5 536.5 300.1 527.5 304.4 524.5 304.5 522.8 303.5 522.3 301.5 523.1 298.5 527.5 292.7 532.5 288.3 537.5 284.8ZM584.3 289.5 L587.5 289.9 588.6 290.5 589.6 292.5 589.1 295.5 585.3 300.5 576.5 308.2 569.5 313.1 564.5 315.3 561.5 315.2 560.2 314.5 559.2 312.5 559.6 308.5 562.1 303.5 565.5 299.4 569.5 295.8 575.5 292.1 580.5 290.1Z"/>
<path id="c59" d="M383.5 208.7 L392.5 207.1 394.7 207.5 395.7 208.5 395.9 209.5 395 211.5 389.5 218.2 373.5 231.8 349.9 249.5 345.5 253.3 302.5 283.9 298.5 286.4 292.5 289 289.5 289.4 288.2 288.5 287.8 286.5 288.2 284.5 291.1 278.5 300.1 266.5 311.5 254.3 323.5 243.2 336.7 232.5 336.5 231.6 330.1 235.5 315.8 245.5 286.5 267.5 282.5 269.8 280.5 270.3 279.5 270 278.7 268.5 279.2 266.5 281.5 262.7 285.5 257.6 291 251.5 303.5 240.1 310.6 234.5 321.5 227.2 333.6 220.5 343.5 216.1 351.5 214.2 353 214.5 354 215.5 354 216.5 352.8 218.5 342.6 227.5 343.5 227.8 372.5 212.8ZM337.5 231.4 L336.8 231.5 337.5 231.6ZM409 224.5 L415.5 224.6 420.5 226.9 430.5 224.4 432.5 225.3 432.7 226.5 431 229.5 427.5 232.8 394.9 257.5 373.2 275.5 357.5 289.4 347.5 296.9 345.5 297.9 343.5 297.8 342.9 296.5 343.8 293.5 349.6 284.5 360.6 271.5 361.3 270.5 360.5 269.8 343.5 279.2 332.5 284.1 325.5 285.8 323.8 285.5 322.9 284.5 322.9 282.5 324.6 278.5 327.1 274.5 331.5 269.1 346.5 255.1 357.5 247.1 374.5 237.1 385.5 232.2 398.5 227.1ZM509.9 234.5 L517.5 231.9 519.5 232.1 520.4 233.5 520.2 234.5 518 237.5 511.5 243.6 451.4 288.5 421.5 311.9 411.5 318 409.5 318.7 408 318.5 407.5 317.8 407.5 316.5 409.5 312.5 412.5 308.6 419.1 301.5 435.5 286.9 453.5 271.7 466.5 261.8 488.5 247 504.5 237.3ZM497.1 273.5 L502.5 273 506.3 273.5 508.5 275.2 508.8 277.5 507.5 279.8 504.2 282.5 499.5 285.3 493.5 287.9 484.5 290.3 481.5 290 479.5 288.7 479 286.5 479.6 284.5 483.5 280 489.5 276.1ZM546.8 281.5 L550.5 281 552.2 281.5 553.3 282.5 553.7 283.5 553.2 285.5 550.5 288.8 543.5 294.7 532.9 301.5 527.5 303.9 525.5 304.1 523.8 303.5 523 301.5 523.4 299.5 525.5 296 528.5 292.7 532.5 289.2 538.5 285ZM581.1 290.5 L585.5 290 587.5 290.5 588.6 291.5 589 292.5 588.9 294.5 587.9 296.5 585.6 299.5 578.5 306 570.5 311.9 564.5 314.7 562.5 314.8 560.5 313.9 559.6 311.5 560.1 308.5 562.1 304.5 565.2 300.5 568.5 297.3 572.5 294.4 577.5 291.7Z"/>
<path id="c60" d="M386.6 208.5 L392.5 207.7 394.5 208.4 395 209.5 393.6 212.5 389.5 217.5 373.5 231.2 350.2 248.5 344.5 253.2 320.5 270.8 303.5 282.6 298.5 285.7 292.5 288.3 290.5 288.7 289.5 288.5 288.7 287.5 288.9 284.5 291.2 279.5 298.2 269.5 310.5 256 324.5 243.1 341.5 230 356.5 221.3 373.5 212.9ZM347.4 215.5 L351.5 214.9 352.8 215.5 353.1 216.5 351.8 218.5 345.5 224.1 315.5 245 292.5 262.6 282.5 269.1 280.5 269.4 279.6 268.5 279.9 266.5 281.5 263.7 290.5 252.8 298.1 245.5 310.5 235.3 320.5 228.4 331 222.5 341.5 217.5ZM405.9 225.5 L409.5 224.9 414.5 224.9 416.7 225.5 419.5 227.5 421.5 227.4 429.5 225 431.5 225.5 431.9 226.5 430.4 229.5 425.5 234 395.6 256.5 372.7 275.5 357.5 289 346.5 296.8 344.5 297.2 343.8 296.5 343.7 295.5 346 290.5 350.5 284.1 362.2 270.5 362.9 269.5 362.9 268.5 359.5 269.5 343.5 278.8 332.5 283.6 326.5 285.2 323.8 284.5 323.5 282.5 324.7 279.5 327.8 274.5 331.9 269.5 341.5 260.3 357.5 247.9 376.5 236.7 394.5 229ZM513.9 233.5 L516.5 232.7 518.5 232.7 519.4 233.5 519.3 234.5 517.2 237.5 510.6 243.5 450.6 288.5 421.5 311.2 411.5 317.3 409.5 318 408.3 317.5 408.3 315.5 410.5 311.7 419.4 301.5 435.5 287.1 453.5 272 466.5 262.2 488.8 247.5 503.5 238.5ZM495.5 274.5 L500.5 273.6 505.5 273.9 507.9 275.5 508.1 277.5 506.9 279.5 504.5 281.5 499.6 284.5 494.5 286.8 489.5 288.6 484.5 289.7 482 289.5 480.3 288.5 479.7 287.5 479.9 285.5 481 283.5 483.5 280.8 488.5 277.3ZM545.5 282.5 L549.5 281.6 551.5 281.8 552.6 282.5 552.9 284.5 551.8 286.5 549.5 288.9 543.5 294 537 298.5 528.5 303 526.5 303.5 524.5 303.1 523.7 301.5 524.1 299.5 525.9 296.5 528.5 293.5 537.5 286.3ZM579.3 291.5 L584.5 290.5 586.5 290.7 587.8 291.5 588.4 292.5 588.3 294.5 585.9 298.5 577.5 306.3 569.5 312 564.5 314.2 562.5 314.3 560.9 313.5 560.2 311.5 560.4 309.5 562.1 305.5 564.1 302.5 567.5 298.8 570.5 296.3 575.5 293.2Z"/>
<path id="c61" d="M390.2 208.5 L392.8 208.5 394 209.5 393.5 211.5 392.1 213.5 388.7 217.5 373.5 230.7 349.4 248.5 344.5 252.6 309.5 278.1 297.7 285.5 292.5 287.6 289.9 287.5 289.3 286.5 289.5 284.5 292.4 278.5 301.3 266.5 309.6 257.5 316.5 250.9 334.5 235.8 342.5 230.2 364.5 217.7 378.5 211.5 384.6 209.5ZM345.9 216.5 L350.5 215.7 352 216.5 350.9 218.5 345.5 223.3 315.5 244.2 291.6 262.5 283.5 267.8 281.5 268.5 280.5 267.8 280.6 266.5 282.5 263.3 291.5 252.6 299 245.5 311.1 235.5 321.4 228.5 330.3 223.5 338.3 219.5ZM408 225.5 L414.5 225.3 416.5 226 418.5 227.9 419.5 228.1 429.5 225.5 431.1 226.5 431.1 227.5 429.1 230.5 422.5 236.1 395.2 256.5 373.5 274.5 357.5 288.5 346.5 296 345.5 296.3 344.6 295.5 345.1 293.5 347.2 289.5 354.9 279.5 363.7 269.5 364.5 267.4 360.5 268.6 342.5 278.9 330.5 283.7 326.5 284.6 324.5 283.9 324.2 282.5 325.5 279.2 328.5 274.5 332.5 269.7 342.5 260.1 357.5 248.5 376.5 237.2 395.5 229.1ZM515.9 233.5 L517.8 233.5 518.4 234.5 518 235.5 509.6 243.5 450.5 288 422.5 309.9 411.8 316.5 409.5 317.1 408.9 316.5 409.3 314.5 411.9 310.5 421.7 299.5 454.5 271.5 466.5 262.6 497.9 242.5 508.5 236.5ZM498.5 274.5 L502.5 274.2 505.5 274.6 506.9 275.5 507.3 277.5 506 279.5 503.4 281.5 498.2 284.5 493.6 286.5 488.5 288.2 484.5 289 481.5 288.6 480.5 287.5 480.6 285.5 481.5 283.9 486.1 279.5 491.7 276.5ZM547.6 282.5 L550.5 282.2 551.5 282.5 552.2 283.5 551.7 285.5 549 288.5 542.5 293.9 534.2 299.5 528.3 302.5 526.5 302.8 525.1 302.5 524.4 301.5 524.5 300.5 525.3 298.5 527.5 295.5 530.5 292.5 538.5 286.4ZM580.8 291.5 L585.5 291.1 586.8 291.5 587.7 292.5 587.9 293.5 587.4 295.5 584.5 299.5 577.5 305.9 570.5 311 564.5 313.7 562.5 313.7 561.5 313.2 560.7 311.5 561.2 308.5 563.2 304.5 566.4 300.5 569.5 297.6 573.5 294.8 577.5 292.6Z"/>
<path id="c62" d="M388 209.5 L391.5 209.2 392.6 209.5 393 210.5 391.5 213.2 388.8 216.5 372.5 231 308.5 278.2 297.5 284.9 292.5 286.8 290.4 286.5 290.5 283.9 293.5 277.9 298.6 270.5 304.5 263.5 316.5 251.4 324.5 244.4 334.5 236.4 342.5 230.8 363.9 218.5 377.3 212.5ZM344.9 217.5 L349.5 216.7 350.4 217.5 345.4 222.5 314.5 244.2 291.8 261.5 284.2 266.5 282.5 267.1 281.8 266.5 282.6 264.5 285.5 260.5 291.5 253.5 299.5 245.9 311.5 236 324.3 227.5 335.4 221.5ZM405.2 226.5 L410.5 225.6 414.5 225.7 416.3 226.5 418.5 228.7 428.5 226.1 430.2 226.5 430.5 227.5 428.6 230.5 422.5 235.8 393.5 257.5 369.5 277.5 357.5 288.2 347.5 294.5 346.5 294.9 345.9 294.5 346 293.5 348.5 288.5 356.2 278.5 365.2 268.5 366 266.5 364.5 266.5 360 268.5 342.5 278.6 331.5 282.7 327.5 283.7 325.4 283.5 325.2 281.5 326.1 279.5 329.3 274.5 332.5 270.5 342.5 260.8 357.5 249.2 376.5 237.6 391.5 231ZM506.4 238.5 L515.5 234.6 516.5 234.6 516.7 235.5 509.6 242.5 450.3 287.5 424.5 307.9 414.3 314.5 411.5 315.8 410.5 316 410 315.5 410.5 313.5 412.5 310.5 422.1 299.5 435.6 287.5 454.5 271.8 466.5 263 473.5 259 497.7 243.5ZM497.2 275.5 L500.5 275 504.5 275.2 505.5 275.5 506.4 276.5 506.4 277.5 504.8 279.5 502 281.5 494.2 285.5 485.5 288.1 483.5 288.3 481.6 287.5 481.3 286.5 482 284.5 485.9 280.5 491.2 277.5ZM546.7 283.5 L550.5 283.1 551.1 283.5 551.2 284.5 549.5 287 544.5 291.5 537.5 296.6 530.9 300.5 527.5 301.8 525.6 301.5 525.4 300.5 526.5 298.2 528.5 295.5 531.6 292.5 539.8 286.5ZM583.4 291.5 L586.5 292 587.4 293.5 586.3 296.5 582.5 301.1 575.5 307 569.5 311.1 564.5 313.2 562.5 313 561.7 312.5 561.2 310.5 562.1 307.5 564.4 303.5 567.9 299.5 571.5 296.5 575.5 294 579.5 292.3Z"/>
<path id="c63" d="M386.9 210.5 L390.5 210.3 391.1 210.5 391.3 211.5 387.8 216.5 372.5 230.6 308.8 277.5 297.5 284.1 293.5 285.6 291.6 285.5 291.6 283.5 293.9 278.5 301.6 267.5 311.7 256.5 325.5 244.1 341.5 232 357.5 222.4 373.5 214.6 379.5 212.4ZM344.6 218.5 L347.7 218.5 346.3 220.5 344.1 222.5 314.5 243.3 291.8 260.5 286.5 263.7 285.5 264.1 285 263.5 287.4 259.5 292.7 253.5 300 246.5 312.1 236.5 325.9 227.5 335.1 222.5ZM400.5 228.2 L410.5 225.9 414.5 226.1 415.5 226.6 417.5 229.1 418.5 229.3 427.5 226.6 428.5 226.5 429.8 227.5 428.2 230.5 422.5 235.5 394.4 256.5 370.3 276.5 357.5 287.8 349.5 292.4 348.5 292.8 347.5 292.5 348.6 289.5 350.4 286.5 356.7 278.5 365.8 268.5 367.5 265.4 365.5 265.6 359.5 268.4 342.5 278.3 329.7 282.5 327.5 282.8 326.4 282.5 326.4 280.5 327.5 278.5 333.5 270.3 342.5 261.5 358.5 249 376.5 238.1 392.5 231ZM499.8 243.5 L510.5 238.2 511.6 238.5 507.5 242.5 489.5 256.3 473.5 269.6 449.5 287.5 424.5 307.4 414.5 313.5 412.5 314.3 411.6 313.5 413.3 310.5 422.4 299.5 435.9 287.5 454.5 272.1 466.5 263.3 473.7 259.5ZM497.3 276.5 L503.5 276.3 504.3 276.5 504.7 277.5 501.6 280.5 494 284.5 486.5 286.9 484.5 287.2 482.7 286.5 483.5 284.2 487.5 280.5 491.3 278.5ZM547.3 284.5 L549.2 284.5 549.2 285.5 541.6 292.5 530.5 299.4 528.5 300.1 527.5 299.8 529.5 296.2 534.5 291.5 540.2 287.5ZM580.2 292.5 L584.5 292 586.5 293.1 586.3 295.5 583.6 299.5 576.5 305.8 570.5 310.1 565.5 312.4 563.5 312.7 562.5 312.3 561.8 310.5 562.2 308.5 564.1 304.5 566.5 301.5 572.5 296.3 576.5 293.9Z"/>
<path id="c64" d="M382.6 212.5 L386.5 211.9 388.7 212.5 388 214.5 386.4 216.5 377.7 225.5 372.5 230.1 309.5 276.5 298.5 282.8 295.5 283.8 293.5 283.7 293.5 281.9 294.8 278.5 299.1 271.5 302.1 267.5 312.3 256.5 325.5 244.6 341.6 232.5 356.6 223.5 370.5 216.5ZM340.4 221.5 L342.5 221.2 342.8 221.5 339.3 224.5 297.5 254.5 291.5 258 291.4 257.5 293.9 254.5 299.6 248.5 314 236.5 324.5 229.5 335.6 223.5ZM408.8 226.5 L412.5 226.2 414.5 226.6 415.8 227.5 416.9 229.5 417.5 229.8 427.5 227 429 227.5 429.1 228.5 427.8 230.5 422.2 235.5 394 256.5 356.5 288.2 351.5 290.6 350.5 290.9 349.3 290.5 350.4 287.5 352.4 284.5 357.2 278.5 366.4 268.5 369.2 264.5 367.5 264.4 364.5 265.5 342.5 278 331.5 281.1 328.5 281.3 328 280.5 328.6 278.5 331 274.5 334.2 270.5 343.4 261.5 358.7 249.5 374.6 239.5 387.5 233.4 399.5 228.9ZM491.3 251.5 L491.1 252.5 486.2 257.5 472.5 269.7 449.5 286.9 423.5 307.6 416.5 311.5 414.5 312 414.1 311.5 419.1 303.5 422.7 299.5 436.2 287.5 454.5 272.4 467.5 263.1 484.5 254.4ZM491.9 280.5 L495.5 279.6 496.2 280.5 490.6 283.5 488.5 284 487.5 283.8 488.2 282.5ZM579.5 293.1 L584.5 292.6 585.5 293 586 294.5 584.7 297.5 582.2 300.5 575.1 306.5 569.5 310.3 565.5 311.9 563.5 311.9 562.8 311.5 562.5 309.5 563.5 306.5 565.3 303.5 568.5 299.9 575.5 294.9Z"/>
<path id="c65" d="M378.8 214.5 L383.5 214 384.8 214.5 384.9 215.5 379 223.5 372.5 229.7 308.5 276.7 299.5 281.3 297.5 281.9 295.7 281.5 295.5 280.3 296.5 277.5 299.7 271.5 302.7 267.5 312.5 256.9 325.5 245.1 341.5 233.1 353.5 225.8 369.8 217.5ZM399.5 229.2 L410.5 226.6 413.5 226.7 415.2 227.5 416.5 230.2 417.5 230.4 426.5 227.5 427.7 227.5 428.6 228.5 427.4 230.5 421.9 235.5 395 255.5 355.5 288.4 351.5 289.6 350.8 288.5 352.3 285.5 356.1 280.5 367.8 267.5 371.9 262.5 371.5 262.2 359.5 267.8 342.5 277.7 332.5 279.7 330.7 279.5 330.3 278.5 331.5 275.5 335.3 270.5 343.5 262.3 359.6 249.5 377.5 238.5 391.5 232.2ZM466.5 264 L479.5 258.7 480.5 258.7 480.9 259.5 479 262.5 472.5 269 449.5 286.3 423.5 307 418.5 309.7 416.5 309.5 417.1 307.5 419.4 303.5 423 299.5 436.5 287.5 452.2 274.5ZM579.5 293.5 L582.5 293 584.9 293.5 585.3 294.5 585.2 295.5 582.7 299.5 575.5 305.8 569.5 309.9 565.5 311.3 563.5 310.9 563.1 309.5 564 306.5 567.5 301.4 573.4 296.5Z"/>
<path id="c66" d="M374.9 216.5 L380.5 216 381.5 216.5 381.6 217.5 380.3 220.5 378.3 223.5 372.2 229.5 309.5 275.4 306.5 277.3 301.5 279.5 299.5 279.9 297.9 279.5 297.8 277.5 299.3 273.5 303.2 267.5 312.5 257.4 325.5 245.6 341.8 233.5 353.3 226.5 364.7 220.5ZM399.5 229.6 L410.5 227 413.5 227.1 414.5 227.5 415.2 228.5 415.7 230.5 416.5 230.9 425.5 228.2 426.5 228 427.9 228.5 427 230.5 421.6 235.5 394.6 255.5 356.5 287.4 353.5 288.6 352.3 288.5 352 287.5 352.9 285.5 357.4 279.5 373 262.5 374.2 260.5 373.1 260.5 365.2 264.5 342.5 277.4 334.5 278.1 332.8 277.5 333 275.5 334.8 272.5 343.2 263.5 355.1 253.5 364.9 246.5 375.5 239.9 388.5 233.8ZM471.1 262.5 L475.5 261.7 476.6 262.5 474.1 266.5 471 269.5 448.5 286.4 424.5 305.7 420.5 308.1 418.5 308.2 418.2 307.5 418.8 305.5 421.4 301.5 435.7 288.5 452.6 274.5 460.5 268.5 467.5 263.8ZM581.6 293.5 L583.5 293.7 584.5 294.5 584.6 295.5 583.8 297.5 581.5 300.3 574.5 306.2 569.5 309.6 566.5 310.7 564.4 310.5 563.8 309.5 564.4 306.5 566.2 303.5 568.8 300.5 575.5 295.7 578.5 294.2Z"/>
<path id="c67" d="M375.2 217.5 L378.5 217.6 379.3 218.5 379.1 220.5 376.9 224.5 371.5 229.6 308.5 275.5 305.5 277.2 302.5 278.2 300.5 278.3 299.5 277.6 299.4 275.5 300.4 272.5 303.8 267.5 313 257.5 325.5 246.2 342.5 233.6 352.6 227.5 366.3 220.5 371.5 218.4ZM409.4 227.5 L413.5 227.5 414.7 228.5 415.5 231.3 416.5 231.5 425.5 228.5 426.7 228.5 427.1 229.5 425.6 231.5 421.2 235.5 394.3 255.5 356.5 287 354.5 287.8 353.1 287.5 353.6 285.5 357.1 280.5 363.9 272.5 374.6 261.5 376.1 259.5 375.5 259 358.5 267.8 343.5 276.6 340.5 277.4 335.4 276.5 334.9 275.5 335.1 274.5 336.2 272.5 343.5 264.2 354.7 254.5 365.7 246.5 376.5 239.8 388.5 234.2 399.5 230ZM469.2 263.5 L472.5 263.1 473.9 263.5 473.8 265.5 471.3 268.5 448.5 285.6 424.5 305.2 421.5 307 419.5 306.9 419.7 304.5 421.8 301.5 436.1 288.5 455.6 272.5 466.5 264.8ZM578.9 294.5 L581.5 294 583.5 294.5 583.8 296.5 581.8 299.5 574.9 305.5 570.5 308.6 566.5 310.1 564.7 309.5 564.6 307.5 565.4 305.5 568.5 301.4 573.5 297.3Z"/>
<path id="c68" d="M370.9 219.5 L375.5 218.7 377.4 219.5 377.7 220.5 377.3 222.5 376.3 224.5 371 229.5 310.7 273.5 304.5 276.9 302.5 277.2 300.9 276.5 300.6 274.5 301.1 272.5 304.4 267.5 313.5 257.6 325.5 246.7 343.5 233.5 359.5 224.4ZM398.5 230.7 L410.5 227.7 413.5 228.1 414.4 229.5 414.5 231.5 415.5 231.9 424.5 229.2 426.5 229.5 425.2 231.5 420.9 235.5 394.5 255.1 356.5 286.5 354.5 287 354.1 286.5 354.9 284.5 357.5 280.6 364.4 272.5 378 258.5 378.9 257.5 378.5 256.8 358.5 267.5 343.5 276.3 340.5 276.9 338.7 276.5 337.3 275.5 336.9 274.5 337.7 272.5 344.4 264.5 355.7 254.5 365.5 247.2 376.5 240.3 388.5 234.5ZM467.6 264.5 L469.5 263.9 471.5 264 472.5 264.5 472.5 265.5 470.2 268.5 448.5 284.8 425.9 303.5 422.5 305.8 420.5 306.1 420.3 304.5 421.4 302.5 428.5 295.5 453.4 274.5ZM581.4 294.5 L582.5 294.8 583.2 295.5 583.2 296.5 582.2 298.5 580.5 300.3 574.3 305.5 569.9 308.5 567.5 309.5 565.5 309.1 565.2 307.5 565.9 305.5 569.9 300.5 575.5 296.5 578.5 295.1Z"/>
<path id="c69" d="M370.4 220.5 L374.5 219.9 376 220.5 376.5 221.5 375.6 224.5 370.5 229.4 347.5 245.8 311.5 272.4 305.5 275.9 303.5 276.2 301.9 275.5 301.5 274.5 301.8 272.5 305.1 267.5 313.5 258.2 325.5 247.3 337.1 238.5 344.5 233.5 360.5 224.6ZM408.3 228.5 L411.5 228.1 413.3 228.5 413.9 229.5 413.8 231.5 414.5 232.4 416.5 232.2 424.5 229.6 425.5 230.5 420.6 235.5 394.5 254.8 358.5 284.6 356.5 285.8 355.3 285.5 357.4 281.5 363.1 274.5 379.8 257.5 381 255.5 379.4 255.5 344.4 275.5 341.5 276.5 339.2 275.5 338.8 274.5 339.2 272.5 344.5 265.5 356.7 254.5 365.9 247.5 376.5 240.7 388.5 234.9 398.5 231.1ZM469.4 264.5 L470.5 264.7 471.2 265.5 471 266.5 469.1 268.5 448.5 284 425 303.5 422.5 305 421.5 305.2 421.1 304.5 421.3 303.5 423.5 300.6 436.9 288.5 456.6 272.5 466.7 265.5ZM578.5 295.5 L580.5 295.1 582.2 295.5 582.6 296.5 582.3 297.5 580.8 299.5 570.5 307.7 567.5 309 566.1 308.5 565.8 307.5 566.4 305.5 569.4 301.5 574.5 297.5Z"/>
<path id="c70" d="M369.9 221.5 L373.5 220.9 374.9 221.5 375.5 222.5 375.4 223.5 374.2 225.5 369.7 229.5 346.5 245.9 311.5 271.7 305.5 275.2 303.5 275.2 302.6 274.5 302.4 273.5 303 271.5 305.8 267.5 313.9 258.5 326.1 247.5 344.5 234.1 360.2 225.5ZM398.5 231.5 L410.5 228.5 412.5 228.7 413.3 229.5 413.2 232.5 414.5 232.9 422.5 230.4 424.6 230.5 423.5 232.5 420.3 235.5 394.5 254.6 376.5 269.7 358.5 283.9 357.5 284.4 357 283.5 359.5 279.6 365.4 272.5 380.4 257.5 382.5 254.4 380.5 254.5 378.5 255.5 343.6 275.5 341.5 275.8 340.7 275.5 340.3 273.5 341 271.5 345.7 265.5 356.5 255.5 366.5 247.7 376.5 241.2 388.5 235.3ZM467.9 265.5 L469.6 265.5 469.7 266.5 467.8 268.5 447.5 283.8 426.6 301.5 423.5 303.7 422.5 303.8 422.6 302.5 424.2 300.5 437.4 288.5 454.5 274.5 461.5 269.4ZM577.3 296.5 L580.5 295.6 581.8 296.5 581.7 297.5 579.1 300.5 571.7 306.5 568.5 308.2 567.5 308.3 566.5 307.5 567.5 304.5 570 301.5 573.7 298.5Z"/>
<path id="c71" d="M359.7 226.5 L371.5 222 373.5 222.1 374.5 223.5 373.5 225.5 370.3 228.5 346.5 245.2 310.8 271.5 305.5 274.4 304.5 274.4 303.5 273.6 303.8 271.5 305 269.5 312.5 260.8 327 247.5 337.6 239.5 345.1 234.5ZM398.5 231.8 L410.5 229.1 412.5 229.5 412.3 232.5 413.5 233.4 416.5 232.9 421.5 231.1 422.5 230.9 423.6 231.5 419.9 235.5 394.5 254.3 376.5 269.4 359.6 282.5 358.5 282.5 359.5 280.5 363.4 275.5 371.6 266.5 381.9 256.5 384.2 253.5 383.5 252.9 379.5 254.5 367.5 261.8 344.5 274.6 342.5 275.1 341.5 274.5 342.3 271.5 346.9 265.5 357.4 255.5 367.5 247.5 377.5 241 389.5 235.2ZM466.5 267.8 L466.5 267.4 466.8 267.5ZM464.3 268.5 L465.5 268.1 466 268.5 454.5 277.5 447.5 282.4 447.3 281.5 453 276.5ZM446.1 282.5 L447.4 282.5 435.5 292.3 435.4 291.5 437.3 289.5ZM434.5 293.2 L434.5 292.4 435.3 292.5ZM433.5 294.2 L433.5 293.3 434.3 293.5ZM428.4 297.5 L432.5 294.1 433.3 294.5 427.6 299.5 426.5 299.8ZM578.9 296.5 L580.5 296.4 580.9 297.5 579.6 299.5 570.7 306.5 568.5 307.5 567.5 307.1 567.5 305.9 568.2 304.5 570.8 301.5 574.7 298.5ZM425.5 300.5 L425.5 300.5 425.5 300.5Z"/>
<path id="c72" d="M369.2 223.5 L372.5 223.2 373 223.5 373.1 224.5 369.4 228.5 345.5 245.1 311 270.5 306.5 273 305.5 273.2 304.6 272.5 306.5 268.7 313.7 260.5 326.8 248.5 344.8 235.5 359.5 227.5ZM398.5 232.2 L409.5 229.7 411.5 229.9 411.9 230.5 411.7 233.5 412.5 233.8 415.5 233.6 421.5 231.5 422.5 231.5 422.5 232.5 417.1 237.5 399.5 250.2 376 269.5 363.5 278.7 362.5 279.2 362.2 278.5 365.8 273.5 372.1 266.5 382.4 256.5 386 252.5 386.3 251.5 384.5 251.5 379.5 254.1 367.4 261.5 345.5 273.4 343.5 274 342.9 273.5 343.6 271.5 348.1 265.5 358.3 255.5 368.3 247.5 377.4 241.5 389.5 235.5ZM578.3 297.5 L579.5 297.5 579.5 298.5 576.3 301.5 570.5 305.8 569.5 306.2 568.7 305.5 571.7 301.5 574.5 299.4Z"/>
<path id="c73" d="M367 225.5 L370.5 224.7 370.9 225.5 368 228.5 330.5 254.8 310.6 269.5 308.5 270.6 307.2 270.5 308.2 268.5 315.1 260.5 328.3 248.5 345 236.5 355.6 230.5ZM408.4 230.5 L410.5 230.5 410.9 231.5 410.4 233.5 411.5 234.4 414.5 234.2 420.5 232.2 421.8 232.5 420.3 234.5 416.7 237.5 394.5 253.8 374.5 270.4 366.5 275.5 365.5 275.8 366.8 273.5 372.5 266.7 386.8 252.5 387.4 251.5 386.9 250.5 385.5 250.5 383.5 251.4 366.8 261.5 353.8 268.5 347.5 271.5 345.5 271.9 345.8 270.5 348.5 266.6 359.2 255.5 367.5 248.6 376.4 242.5 392.5 234.7 399.5 232.3Z"/>
<path id="c74" d="M358 231.5 L359.5 231.1 360.1 231.5 356.5 234.5 340.8 245.5 331.4 251.5 327.5 253.6 326.8 253.5 329.5 250.5 340.8 241.5 346.7 237.5ZM406.3 231.5 L409 231.5 409.4 232.5 408.5 235.5 414.5 234.6 419.5 233 420.5 233.1 420.6 233.5 416.4 237.5 398.5 250.4 374.5 270 370.5 271.9 369.7 271.5 373.3 266.5 387.4 252.5 388.4 250.5 387.5 249.8 384.5 250.4 367.9 260.5 360.5 264.4 351.9 268.5 349.5 268.7 350.5 266.5 360.1 255.5 367.5 249.1 376.5 242.9 391.5 235.4 399.5 232.7Z"/>
<path id="c75" d="M402.7 232.5 L406.8 232.5 407.4 233.5 406.2 236.5 406.5 237.2 418.5 233.9 419.1 234.5 415.9 237.5 410.5 241.1 393.5 254 374.5 269.6 372.5 270.4 371.8 269.5 373 267.5 377.5 262.7 388 252.5 389.4 250.5 389.5 249.2 387.5 249 384.5 249.8 367.3 260.5 361.2 263.5 355.5 265.2 354.7 264.5 356.2 261.5 360.9 255.5 367.7 249.5 376.5 243.3 390.5 236.2 398.1 233.5Z"/>
<path id="c76" d="M399.8 233.5 L403.5 233 405.6 233.5 405.5 235.5 403.8 238.5 404.5 239.1 412.5 235.9 416.5 235 417.5 235.5 415.5 237.5 398.5 249.8 380.5 264.5 374.5 268.8 373.5 268.9 373.3 268.5 374.7 266.5 388.6 252.5 393.1 247.5 393.5 246.3 391.5 246.4 388.5 248 384.5 249.3 364.5 261.5 359.5 263.2 357.9 262.5 358.8 259.5 361.7 255.5 368.4 249.5 375.5 244.5 378.5 242.5 390.5 236.6Z"/>
<path id="c77" d="M397.7 234.5 L402.5 233.7 404.5 234.5 403.9 236.5 400.7 240.5 400.4 241.5 401.5 241.8 412.1 236.5 414.5 236 415.7 236.5 376.5 266.7 376 266.5 376.5 265.5 379 262.5 395.6 246.5 396.9 244.5 396.5 244 393.5 244.5 383.5 249.2 365.6 260.5 362.5 261.6 360.3 261.5 359.9 259.5 361.6 256.5 370.5 248.5 379.4 242.5 389.5 237.5Z"/>
<path id="c78" d="M399.9 234.5 L402.5 234.5 403.3 235.5 402.1 237.5 397.5 241.9 383.5 248.6 366.4 259.5 363.5 260.6 361.5 260.2 361.2 259.5 361.8 257.5 364.3 254.5 368.7 250.5 376.9 244.5 390.4 237.5ZM411.4 237.5 L413.7 237.5 380.5 263 380.2 262.5 385.8 256.5 398.6 244.5ZM379.5 263.6 L379.5 263.4 379.6 263.5Z"/>
<path id="c79" d="M398.1 235.5 L401.5 235.4 401.7 236.5 397.5 240.5 383.5 247.8 366.5 258.6 363.5 259.6 362.5 258.5 363.5 256.5 367.3 252.5 377.7 244.5 389.4 238.5ZM406.1 241.5 L406.5 241.3 406.8 241.5 406.5 241.7ZM399.5 245.2 L405.5 242.1 405.7 242.5 390.5 254.1 390.3 253.5 392.2 251.5ZM389.5 254.7 L389.5 254.4 389.9 254.5ZM388.5 255.6 L388.5 255.4 388.6 255.5ZM387.5 256.5 L387.5 256.5 387.5 256.5Z"/>
<path id="c80" d="M397.5 236.5 L399.3 236.5 399.2 237.5 397 239.5 382.5 247.3 366.5 257.5 364.5 257.5 365.6 255.5 368.4 252.5 378.9 244.5 391.1 238.5Z"/>
<path id="c81" d="M387.4 241.5 L389.3 241.5 377.5 248.5 376.5 248.8 376 248.5 379.5 245.5ZM375 249.5 L375.5 249.3 375.6 249.5 375.5 249.6Z"/>
<mask id="mL" maskUnits="userSpaceOnUse" x="126" y="126" width="652" height="426"><g fill="none" stroke="#fff" stroke-linejoin="round"><path d="M133 161l6 -3 6 -3 7 -3 6 -3" stroke-opacity="0.21" stroke-width="1.3"/><path d="M133 168l6 -4 6 -3 7 -3 6 -3 6 -3 6 -3" stroke-opacity="0.44" stroke-width="1.8"/><path d="M133 180l6 -3 6 -4 6 -3 7 -3 6 -4 6 -3 6 -3 6 -3 7 -3 6 -4 6 -3 6 -3" stroke-opacity="0.28" stroke-width="1.6"/><path d="M133 186l6 -3 6 -4 6 -3 6 -3 6 -4 7 -3 6 -3 6 -4 6 -3 6 -3 7 -3 6 -3 6 -4 6 -3 7 -3" stroke-opacity="0.24" stroke-width="1.6"/><path d="M133 193l6 -4 6 -4 6 -3 6 -4 6 -3 6 -3 6 -4 7 -3 6 -3 6 -4 6 -3 6 -3 7 -3 6 -3 6 -4 6 -3 7 -3" stroke-opacity="0.62" stroke-width="1.6"/><path d="M133 205l6 -4 6 -4 6 -3 6 -4 6 -4 6 -3 6 -4 6 -3 6 -4 6 -3 6 -3 6 -4 6 -3 7 -3 6 -4 6 -3 6 -3 6 -3 7 -3 6 -3 6 -4" stroke-opacity="0.36" stroke-width="0.8"/><path d="M133 208l6 -4 6 -3 6 -4 5 -4 6 -4 6 -3 6 -4 6 -3 7 -4 6 -3 6 -4 6 -3 6 -3 6 -4 6 -3 7 -3 6 -4 6 -3 6 -3 7 -3 6 -3" stroke-opacity="0.60" stroke-width="1.8"/><path d="M133 214l6 -4 6 -3 5 -4 6 -4 6 -4 6 -4 6 -3 6 -4 6 -3 6 -4 6 -3 6 -4 6 -3 6 -4 7 -3 6 -3 6 -4 6 -3 6 -3 7 -3 6 -4 6 -3" stroke-opacity="0.28" stroke-width="1.2"/><path d="M133 227l6 -4 5 -4 6 -4 6 -5 5 -3 6 -4 6 -4 6 -4 6 -4 6 -3 6 -4 6 -4 6 -3 6 -4 6 -3 6 -4 6 -3 6 -3 6 -4 7 -3 6 -3 6 -4 6 -3 7 -3 6 -3" stroke-opacity="0.60" stroke-width="1.6"/><path d="M133 240l5 -5 6 -4 5 -5 6 -4 6 -4 5 -4 6 -4 6 -4 6 -4 5 -4 6 -4 6 -3 6 -4 6 -4 6 -3 6 -4 6 -3 6 -4 6 -3 6 -4 7 -3 6 -4 6 -3 6 -3 6 -3 7 -3 6 -4" stroke-opacity="0.43" stroke-width="0.8"/><path d="M133 243l5 -5 6 -4 5 -5 6 -4 5 -4 6 -4 6 -4 6 -4 5 -4 6 -4 6 -4 6 -4 6 -4 6 -3 6 -4 6 -4 6 -3 6 -4 6 -3 6 -4 6 -3 6 -3 6 -4 7 -3 6 -3 6 -3 6 -3 7 -4" stroke-opacity="0.58" stroke-width="1.2"/><path d="M133 249l5 -5 6 -4 5 -5 6 -4 5 -4 6 -4 5 -5 6 -4 6 -4 5 -4 6 -4 6 -4 6 -3 6 -4 6 -4 6 -4 6 -3 6 -4 6 -3 6 -4 6 -3 6 -4 6 -3 6 -4 6 -3 7 -3 6 -3 6 -3 6 -3" stroke-opacity="0.28" stroke-width="1.7"/><path d="M133 261l5 -4 5 -5 6 -5 5 -4 5 -5 6 -4 5 -4 6 -5 5 -4 6 -4 6 -4 5 -4 6 -4 6 -4 6 -4 6 -4 5 -4 6 -3 6 -4 6 -4 6 -3 6 -4 6 -3 7 -4 6 -3 6 -3 6 -4 6 -3 6 -3 7 -3 6 -3" stroke-opacity="0.48" stroke-width="1.5"/><path d="M133 271l5 -5 5 -5 5 -5 5 -4 6 -5 5 -4 5 -5 6 -4 5 -5 6 -4 5 -4 6 -4 6 -5 5 -4 6 -4 6 -4 6 -3 6 -4 6 -4 5 -4 6 -4 6 -3 6 -4 6 -3 7 -4 6 -3 6 -3 6 -4 6 -3 6 -3 7 -3 6 -3 6 -4" stroke-opacity="0.35" stroke-width="0.8"/><path d="M133 274l5 -5 5 -5 5 -5 5 -4 6 -5 5 -5 5 -4 6 -5 5 -4 6 -4 5 -5 6 -4 5 -4 6 -4 6 -4 5 -4 6 -4 6 -4 6 -4 6 -4 6 -3 6 -4 6 -4 6 -3 6 -4 6 -3 6 -3 6 -4 6 -3 7 -3 6 -3 6 -3 6 -4" stroke-opacity="0.55" stroke-width="1.9"/><path d="M133 290l5 -6 5 -5 5 -5 4 -5 6 -4 5 -5 5 -5 5 -5 5 -4 6 -5 5 -4 5 -5 6 -4 5 -4 6 -5 6 -4 5 -4 6 -4 6 -4 6 -4 5 -4 6 -4 6 -3 6 -4 6 -4 6 -3 6 -4 6 -3 6 -4 6 -3 7 -3 6 -4 6 -3 6 -3 7 -3 6 -3" stroke-opacity="0.45" stroke-width="1.5"/><path d="M133 293l5 -6 5 -5 4 -5 5 -5 5 -5 5 -4 6 -5 5 -5 5 -4 5 -5 6 -5 5 -4 5 -4 6 -5 5 -4 6 -4 6 -4 5 -4 6 -5 6 -4 6 -3 5 -4 6 -4 6 -4 6 -4 6 -3 6 -4 6 -3 6 -4 7 -3 6 -3 6 -4 6 -3 6 -3 7 -3 6 -3" stroke-opacity="0.48" stroke-width="1.9"/><path d="M133 302l5 -5 4 -5 5 -6 5 -5 5 -5 5 -5 5 -5 5 -4 5 -5 5 -5 5 -4 6 -5 5 -5 5 -4 6 -4 5 -5 6 -4 6 -4 5 -4 6 -4 6 -4 5 -4 6 -4 6 -4 6 -4 6 -4 6 -3 6 -4 6 -3 6 -4 6 -3 6 -4 6 -3 7 -3 6 -3 6 -3 6 -4 7 -3" stroke-opacity="0.67" stroke-width="1.0"/><path d="M133 305l5 -5 4 -5 5 -6 5 -5 5 -5 4 -5 5 -5 5 -5 6 -4 5 -5 5 -5 5 -4 5 -5 6 -4 5 -5 6 -4 5 -4 6 -5 5 -4 6 -4 6 -4 6 -4 5 -4 6 -4 6 -4 6 -3 6 -4 6 -4 6 -3 6 -4 6 -3 6 -4 6 -3 7 -3 6 -3 6 -4 6 -3 7 -3" stroke-opacity="0.68" stroke-width="1.4"/><path d="M133 314l4 -5 5 -5 5 -6 4 -5 5 -5 5 -5 5 -5 4 -5 5 -5 6 -5 5 -5 5 -4 5 -5 5 -5 6 -4 5 -5 5 -4 6 -4 5 -5 6 -4 6 -4 5 -4 6 -4 6 -4 6 -4 5 -4 6 -4 6 -3 6 -4 6 -4 6 -3 6 -4 7 -3 6 -3 6 -4 6 -3 6 -3 7 -3 6 -3" stroke-opacity="0.27" stroke-width="1.8"/><path d="M133 321l4 -6 5 -5 4 -5 5 -6 4 -5 5 -5 5 -5 5 -5 5 -5 5 -5 5 -5 5 -5 5 -5 5 -4 6 -5 5 -4 5 -5 6 -4 5 -5 6 -4 5 -4 6 -4 6 -5 5 -4 6 -4 6 -4 6 -3 6 -4 5 -4 6 -3 6 -4 7 -4 6 -3 6 -3 6 -4 6 -3 6 -3 7 -3 6 -4 6 -3" stroke-opacity="0.48" stroke-width="1.6"/><path d="M133 336l4 -5 4 -6 5 -5 4 -6 5 -5 4 -6 5 -5 4 -5 5 -5 5 -5 5 -5 5 -5 5 -5 5 -5 5 -5 5 -5 5 -4 5 -5 6 -4 5 -5 6 -4 5 -5 6 -4 5 -4 6 -4 6 -4 5 -4 6 -4 6 -4 6 -4 6 -4 6 -3 6 -4 6 -3 6 -4 6 -3 6 -4 6 -3 6 -3 7 -3 6 -4 6 -3" stroke-opacity="0.66" stroke-width="1.1"/><path d="M136 337l4 -5 4 -6 5 -5 4 -6 5 -5 4 -6 5 -5 4 -5 5 -5 5 -6 5 -5 5 -5 5 -4 5 -5 5 -5 5 -5 5 -5 5 -4 6 -5 5 -4 5 -5 6 -4 5 -4 6 -4 6 -5 5 -4 6 -4 6 -4 6 -4 6 -3 6 -4 6 -4 6 -3 6 -4 6 -3 6 -4 6 -3 6 -3 6 -4 6 -3 7 -3 6 -3" stroke-opacity="0.51" stroke-width="1.1"/><path d="M142 341l4 -6 4 -6 4 -5 5 -6 4 -5 5 -5 4 -6 5 -5 4 -5 5 -5 5 -5 5 -5 5 -5 5 -5 5 -5 5 -5 5 -5 5 -4 6 -5 5 -4 5 -5 6 -4 5 -5 6 -4 5 -4 6 -4 6 -4 6 -4 6 -4 5 -4 6 -4 6 -3 6 -4 6 -3 6 -4 6 -3 7 -4 6 -3 6 -3 6 -3 6 -4 7 -3" stroke-opacity="0.23" stroke-width="1.7"/><path d="M145 341l4 -6 4 -6 4 -5 5 -6 4 -5 4 -5 5 -6 5 -5 4 -5 5 -5 5 -5 5 -5 5 -5 5 -5 5 -5 5 -5 5 -5 5 -4 5 -5 6 -4 5 -5 6 -4 5 -5 6 -4 5 -4 6 -4 6 -4 6 -4 5 -4 6 -4 6 -3 6 -4 6 -4 6 -3 6 -4 6 -3 7 -4 6 -3 6 -3 6 -3 6 -3 7 -4" stroke-opacity="0.68" stroke-width="1.5"/><path d="M150 342l4 -5 5 -6 4 -5 4 -6 5 -5 4 -6 5 -5 4 -5 5 -6 5 -5 4 -5 5 -5 5 -5 5 -5 5 -5 5 -5 5 -4 6 -5 5 -5 5 -4 6 -5 5 -4 6 -4 5 -5 6 -4 5 -4 6 -4 6 -4 6 -4 6 -3 6 -4 6 -4 6 -3 6 -4 6 -3 6 -4 6 -3 6 -3 6 -4 7 -3 6 -3 6 -3" stroke-opacity="0.68" stroke-width="1.0"/><path d="M162 344l4 -5 4 -6 4 -6 5 -5 4 -6 4 -5 5 -5 5 -6 4 -5 5 -5 5 -5 5 -5 4 -5 5 -5 5 -5 6 -5 5 -5 5 -4 5 -5 5 -4 6 -5 5 -4 6 -5 5 -4 6 -4 6 -4 6 -4 5 -4 6 -4 6 -4 6 -3 6 -4 6 -4 6 -3 6 -4 6 -3 6 -3 7 -4 6 -3 6 -3 6 -3 7 -3" stroke-opacity="0.41" stroke-width="0.8"/><path d="M173 349l4 -6 5 -5 4 -6 4 -6 4 -5 5 -6 4 -5 5 -5 4 -6 5 -5 5 -5 4 -5 5 -5 5 -5 5 -5 5 -5 5 -5 6 -4 5 -5 5 -5 6 -4 5 -4 6 -5 5 -4 6 -4 5 -4 6 -4 6 -4 6 -4 6 -4 6 -4 6 -3 6 -4 6 -3 6 -4 6 -3 6 -3 6 -4 6 -3 7 -3 6 -3 6 -3" stroke-opacity="0.31" stroke-width="1.7"/><path d="M176 349l4 -6 4 -5 5 -6 4 -6 4 -5 5 -6 4 -5 5 -5 4 -6 5 -5 5 -5 4 -5 5 -5 5 -5 5 -5 5 -5 5 -5 6 -4 5 -5 5 -4 6 -5 5 -4 5 -5 6 -4 6 -4 5 -4 6 -4 6 -4 6 -4 6 -4 6 -3 6 -4 6 -4 6 -3 6 -4 6 -3 6 -3 6 -3 6 -4 7 -3 6 -3 6 -3" stroke-opacity="0.59" stroke-width="1.8"/><path d="M182 349l4 -6 4 -5 4 -6 5 -6 4 -5 4 -6 5 -5 4 -5 5 -6 5 -5 4 -5 5 -5 5 -5 5 -5 5 -5 5 -5 5 -4 5 -5 6 -5 5 -4 5 -5 6 -4 5 -4 6 -5 6 -4 5 -4 6 -4 6 -4 6 -4 6 -3 6 -4 6 -4 6 -3 6 -4 6 -3 6 -3 6 -4 6 -3 7 -3 6 -3 6 -4 6 -3 7 -3" stroke-opacity="0.65" stroke-width="1.0"/><path d="M185 345l4 -5 4 -6 4 -5 5 -6 4 -5 5 -6 4 -5 5 -5 4 -6 5 -5 5 -5 5 -5 4 -5 5 -5 6 -5 5 -5 5 -4 5 -5 5 -5 6 -4 5 -4 6 -5 5 -4 6 -4 6 -4 5 -4 6 -4 6 -4 6 -4 6 -4 6 -3 6 -4 6 -3 6 -4 6 -3 6 -3 6 -4 7 -3 6 -3 6 -3 6 -3 7 -4" stroke-opacity="0.44" stroke-width="1.3"/><path d="M188 345l4 -5 4 -6 4 -5 5 -6 4 -5 4 -6 5 -5 5 -5 4 -6 5 -5 5 -5 4 -5 5 -5 5 -5 5 -5 6 -5 5 -4 5 -5 5 -4 6 -5 5 -4 6 -5 5 -4 6 -4 6 -4 5 -4 6 -4 6 -4 6 -4 6 -3 6 -4 6 -4 6 -3 6 -3 6 -4 6 -3 6 -3 7 -4 6 -3 6 -3 6 -3 7 -3" stroke-opacity="0.39" stroke-width="1.5"/><path d="M191 345l4 -6 4 -5 4 -6 4 -5 5 -6 4 -5 5 -6 4 -5 5 -5 5 -5 5 -5 4 -5 5 -5 5 -5 5 -5 6 -5 5 -5 5 -4 5 -5 6 -4 5 -5 6 -4 5 -4 6 -4 6 -4 5 -4 6 -4 6 -4 6 -4 6 -3 6 -4 6 -4 6 -3 6 -3 6 -4 6 -3 7 -3 6 -4 6 -3 6 -3 7 -3 6 -3" stroke-opacity="0.23" stroke-width="1.2"/><path d="M194 345l4 -6 4 -5 4 -6 4 -5 5 -6 4 -5 5 -6 4 -5 5 -5 5 -5 5 -5 4 -5 5 -5 5 -5 5 -5 5 -5 6 -4 5 -5 5 -5 6 -4 5 -4 6 -5 5 -4 6 -4 6 -4 5 -4 6 -4 6 -4 6 -4 6 -3 6 -4 6 -3 6 -4 6 -3 6 -4 7 -3 6 -3 6 -3 6 -4 6 -3 7 -3 6 -3" stroke-opacity="0.42" stroke-width="0.7"/><path d="M196 345l4 -6 5 -5 4 -6 4 -5 5 -6 4 -5 5 -6 4 -5 5 -5 5 -5 4 -5 5 -5 5 -5 5 -5 5 -5 5 -5 6 -4 5 -5 5 -4 6 -5 5 -4 6 -5 5 -4 6 -4 6 -4 6 -4 5 -4 6 -4 6 -3 6 -4 6 -4 6 -3 6 -4 6 -3 6 -3 7 -4 6 -3 6 -3 6 -3 7 -3 6 -4 6 -3 6 -3" stroke-opacity="0.68" stroke-width="1.8"/><path d="M208 348l4 -6 4 -5 4 -6 5 -6 4 -5 5 -5 4 -6 5 -5 4 -5 5 -5 5 -6 5 -5 5 -5 5 -4 5 -5 5 -5 5 -5 5 -4 6 -5 5 -4 6 -4 5 -5 6 -4 6 -4 5 -4 6 -4 6 -4 6 -4 6 -3 6 -4 6 -4 6 -3 6 -4 6 -3 6 -3 6 -4 6 -3 7 -3 6 -3 6 -3 6 -4 7 -3 6 -3" stroke-opacity="0.52" stroke-width="1.0"/><path d="M211 348l4 -6 4 -5 4 -6 5 -6 4 -5 4 -5 5 -6 5 -5 4 -5 5 -5 5 -6 5 -5 5 -5 5 -4 5 -5 5 -5 5 -5 5 -4 6 -5 5 -4 6 -4 5 -5 6 -4 6 -4 5 -4 6 -4 6 -4 6 -3 6 -4 6 -4 6 -3 6 -4 6 -3 6 -4 6 -3 6 -3 7 -4 6 -3 6 -3 6 -3 6 -3 7 -3" stroke-opacity="0.38" stroke-width="1.1"/><path d="M219 352l4 -5 5 -6 4 -5 4 -6 4 -5 5 -6 4 -5 5 -6 4 -5 5 -5 5 -5 5 -5 5 -5 5 -5 5 -5 5 -5 5 -4 6 -5 5 -4 5 -5 6 -4 5 -4 6 -5 6 -4 5 -4 6 -4 6 -3 6 -4 6 -4 6 -4 6 -3 6 -4 6 -3 6 -4 6 -3 6 -3 7 -3 6 -4 6 -3 6 -3 6 -3 7 -4 6 -3" stroke-opacity="0.36" stroke-width="1.7"/><path d="M222 352l4 -5 4 -6 5 -5 4 -6 4 -5 5 -6 4 -5 5 -6 4 -5 5 -5 5 -5 5 -5 5 -5 5 -5 5 -5 5 -4 5 -5 6 -5 5 -4 5 -5 6 -4 5 -4 6 -4 6 -4 5 -4 6 -4 6 -4 6 -4 6 -4 6 -3 6 -4 6 -3 6 -4 6 -3 6 -4 7 -3 6 -3 6 -3 6 -4 6 -3 7 -3 6 -3 6 -3" stroke-opacity="0.34" stroke-width="1.3"/><path d="M234 352l4 -5 4 -6 4 -5 5 -6 4 -5 4 -6 5 -5 5 -5 4 -6 5 -5 5 -5 5 -5 5 -5 5 -4 5 -5 5 -5 5 -4 6 -5 5 -4 6 -5 5 -4 6 -4 5 -4 6 -4 6 -4 6 -4 6 -4 6 -4 6 -3 6 -4 6 -4 6 -3 6 -3 6 -4 6 -3 6 -4 6 -3 7 -3 6 -3 6 -4 6 -3 7 -3" stroke-opacity="0.36" stroke-width="1.8"/><path d="M242 355l4 -6 5 -5 4 -6 4 -6 5 -5 4 -5 5 -6 4 -5 5 -5 5 -5 5 -5 5 -5 5 -5 5 -5 5 -5 5 -4 5 -5 6 -4 5 -5 6 -4 5 -5 6 -4 5 -4 6 -4 6 -4 6 -4 6 -3 6 -4 6 -4 6 -3 6 -4 6 -3 6 -4 6 -3 6 -4 6 -3 6 -3 6 -4 7 -3 6 -3 6 -3" stroke-opacity="0.30" stroke-width="0.8"/><path d="M245 364l4 -6 4 -5 4 -6 5 -5 4 -6 4 -5 5 -6 4 -5 5 -5 5 -6 5 -5 4 -5 5 -5 5 -5 5 -4 6 -5 5 -5 5 -4 5 -5 6 -4 5 -5 6 -4 5 -4 6 -4 6 -4 6 -4 5 -4 6 -4 6 -4 6 -3 6 -4 6 -3 6 -4 6 -3 6 -4 7 -3 6 -4 6 -3 6 -3 6 -4 6 -3 7 -3 6 -3" stroke-opacity="0.48" stroke-width="1.7"/><path d="M248 364l4 -6 4 -5 4 -6 5 -5 4 -6 4 -5 5 -6 4 -5 5 -5 5 -5 5 -6 4 -5 5 -5 5 -4 5 -5 6 -5 5 -5 5 -4 5 -5 6 -4 5 -5 6 -4 6 -4 5 -4 6 -4 6 -4 6 -4 6 -4 6 -3 5 -4 6 -3 6 -4 7 -4 6 -3 6 -4 6 -3 6 -3 6 -4 6 -3 6 -3 7 -3 6 -4" stroke-opacity="0.24" stroke-width="1.5"/><path d="M254 365l4 -5 4 -6 4 -6 4 -5 5 -6 4 -5 5 -5 4 -6 5 -5 5 -5 4 -5 5 -5 5 -5 5 -5 5 -5 6 -5 5 -4 5 -5 5 -4 6 -5 5 -4 6 -4 6 -4 5 -4 6 -4 6 -4 6 -4 6 -4 6 -4 6 -3 6 -4 6 -4 6 -3 6 -4 6 -3 6 -3 6 -4 6 -3 6 -3 7 -4 6 -3 6 -3" stroke-opacity="0.52" stroke-width="1.0"/><path d="M257 365l4 -5 4 -6 4 -6 4 -5 5 -6 4 -5 5 -5 4 -6 5 -5 5 -5 4 -5 5 -5 5 -5 5 -5 5 -5 6 -4 5 -5 5 -5 6 -4 5 -4 6 -5 5 -4 6 -4 6 -4 5 -4 6 -4 6 -4 6 -4 6 -3 6 -4 6 -4 6 -3 6 -4 6 -3 6 -4 6 -3 6 -3 6 -4 7 -3 6 -3 6 -3 6 -4" stroke-opacity="0.53" stroke-width="0.8"/><path d="M265 368l4 -6 5 -6 4 -5 4 -6 4 -5 5 -6 4 -5 5 -5 5 -5 4 -6 5 -5 5 -5 5 -5 5 -4 5 -5 6 -5 5 -4 5 -5 6 -4 5 -5 6 -4 5 -4 6 -4 6 -4 5 -4 6 -4 6 -4 6 -4 6 -4 6 -3 6 -4 6 -3 6 -4 6 -4 6 -3 6 -3 6 -4 6 -3 7 -3 6 -4 6 -3 6 -3 7 -3" stroke-opacity="0.55" stroke-width="0.8"/><path d="M268 368l4 -6 4 -6 5 -5 4 -6 4 -5 5 -6 4 -5 5 -5 5 -5 4 -5 5 -6 5 -5 5 -4 5 -5 5 -5 6 -5 5 -4 5 -5 6 -4 5 -5 6 -4 5 -4 6 -4 6 -4 6 -4 5 -4 6 -4 6 -3 6 -4 6 -4 6 -4 6 -3 6 -4 6 -3 6 -4 6 -3 6 -3 7 -4 6 -3 6 -3 6 -3 7 -3" stroke-opacity="0.65" stroke-width="1.8"/><path d="M271 368l4 -6 4 -6 5 -5 4 -6 4 -5 5 -6 4 -5 5 -5 5 -5 5 -5 4 -5 5 -5 5 -5 5 -5 6 -5 5 -4 5 -5 5 -5 6 -4 5 -4 6 -4 6 -5 5 -4 6 -4 6 -4 6 -3 6 -4 5 -4 6 -4 6 -4 6 -3 6 -4 6 -3 6 -4 6 -3 7 -4 6 -3 6 -3 6 -4 6 -3 7 -3 6 -3" stroke-opacity="0.20" stroke-width="1.6"/><path d="M274 372l4 -5 4 -6 4 -6 5 -5 4 -6 5 -5 4 -5 5 -6 4 -5 5 -5 5 -5 5 -5 5 -5 5 -5 5 -5 5 -4 5 -5 6 -4 5 -5 6 -4 5 -4 6 -5 6 -4 5 -4 6 -4 6 -4 6 -3 5 -4 6 -4 6 -4 6 -3 6 -4 6 -4 6 -3 6 -4 6 -3 7 -4 6 -3 6 -3 6 -3 6 -3 7 -4" stroke-opacity="0.58" stroke-width="1.5"/><path d="M277 372l4 -5 4 -6 4 -6 5 -5 4 -5 4 -6 5 -5 5 -5 4 -6 5 -5 5 -5 5 -5 5 -5 5 -5 5 -4 5 -5 6 -5 5 -4 5 -4 6 -5 5 -4 6 -4 6 -4 5 -4 6 -4 6 -4 6 -4 6 -4 6 -4 6 -3 5 -4 6 -4 6 -3 6 -4 7 -3 6 -4 6 -3 6 -3 6 -4 6 -3 7 -3 6 -3" stroke-opacity="0.55" stroke-width="1.4"/><path d="M280 372l4 -5 4 -6 4 -5 5 -6 4 -5 4 -6 5 -5 5 -5 4 -6 5 -5 5 -5 5 -5 5 -5 5 -4 5 -5 5 -5 6 -4 5 -5 6 -4 5 -5 6 -4 5 -4 6 -4 6 -4 5 -4 6 -4 6 -4 6 -4 6 -3 6 -4 6 -4 6 -3 6 -4 6 -4 6 -3 6 -3 6 -4 6 -3 6 -3 7 -4 6 -3 6 -3" stroke-opacity="0.43" stroke-width="1.8"/><path d="M291 391l4 -6 4 -5 4 -6 5 -6 4 -5 4 -6 5 -5 4 -5 5 -6 4 -5 5 -5 5 -5 5 -5 5 -5 5 -5 5 -5 5 -4 6 -5 5 -4 5 -5 6 -4 5 -4 6 -5 5 -4 6 -4 6 -4 6 -4 5 -4 6 -4 6 -4 6 -4 6 -4 6 -3 6 -4 6 -3 6 -4 6 -3 6 -4 6 -3 6 -3 6 -4 7 -3" stroke-opacity="0.34" stroke-width="1.2"/><path d="M294 391l4 -6 4 -5 4 -6 5 -5 4 -6 4 -5 5 -6 4 -5 5 -6 4 -5 5 -5 5 -5 5 -5 5 -5 5 -5 5 -4 5 -5 6 -5 5 -4 5 -5 6 -4 6 -4 5 -4 6 -5 5 -4 6 -4 6 -4 5 -4 6 -4 6 -4 6 -3 6 -4 6 -4 6 -4 6 -3 6 -4 6 -3 6 -3 6 -4 6 -3 7 -3 6 -3 6 -3 6 -4" stroke-opacity="0.51" stroke-width="1.8"/><path d="M297 391l4 -6 4 -5 4 -6 4 -5 5 -6 4 -5 5 -6 4 -5 5 -5 4 -6 5 -5 5 -5 5 -5 5 -5 5 -4 5 -5 6 -5 5 -4 5 -5 6 -4 5 -5 6 -4 5 -4 6 -4 6 -4 5 -4 6 -5 6 -3 5 -4 6 -4 6 -4 6 -4 6 -4 6 -3 6 -4 6 -3 6 -4 6 -3 7 -3 6 -4 6 -3 6 -3 7 -3 6 -3" stroke-opacity="0.68" stroke-width="1.2"/><path d="M311 385l5 -6 4 -6 4 -5 4 -6 5 -5 4 -5 5 -6 5 -5 4 -5 5 -5 5 -5 5 -5 5 -5 6 -4 5 -5 5 -5 5 -4 6 -5 5 -4 6 -4 5 -4 6 -5 6 -4 5 -4 6 -4 6 -4 5 -4 6 -4 6 -4 6 -4 6 -3 6 -4 6 -3 6 -4 6 -3 6 -4 6 -3 7 -3 6 -4 6 -3 6 -3 7 -3 6 -3" stroke-opacity="0.67" stroke-width="0.8"/><path d="M326 390l4 -5 4 -6 4 -5 5 -6 4 -5 5 -5 5 -6 4 -5 5 -5 5 -5 5 -5 5 -5 5 -5 5 -4 5 -5 5 -5 6 -4 5 -5 6 -4 5 -5 5 -4 6 -4 6 -4 5 -5 6 -4 6 -4 5 -4 6 -4 6 -3 6 -4 6 -4 6 -4 6 -3 6 -4 6 -3 6 -3 7 -4 6 -3 6 -3 6 -3 6 -3 7 -4 6 -3" stroke-opacity="0.60" stroke-width="1.5"/><path d="M329 390l4 -5 4 -6 4 -5 5 -6 4 -5 5 -5 5 -5 4 -6 5 -5 5 -5 5 -4 5 -5 5 -5 5 -5 5 -5 5 -5 6 -4 5 -5 6 -4 5 -4 6 -5 5 -4 6 -4 5 -4 6 -4 6 -4 6 -4 5 -4 6 -4 6 -4 6 -4 6 -3 6 -4 6 -3 6 -4 7 -3 6 -3 6 -3 6 -4 6 -3 7 -3 6 -3 6 -3 6 -3" stroke-opacity="0.31" stroke-width="1.1"/><path d="M332 398l4 -5 4 -6 4 -5 5 -6 4 -5 5 -6 4 -5 5 -5 5 -5 5 -5 4 -5 5 -5 5 -6 5 -5 5 -5 5 -4 5 -5 5 -5 6 -4 5 -5 5 -4 6 -4 6 -4 5 -5 6 -4 5 -4 6 -4 6 -4 6 -4 6 -4 6 -3 6 -4 6 -4 6 -3 6 -3 6 -4 6 -3 6 -3 6 -4 7 -3 6 -3 6 -3 6 -4 7 -3 6 -3" stroke-opacity="0.32" stroke-width="1.1"/><path d="M337 390l4 -5 5 -6 4 -5 5 -5 4 -6 5 -5 5 -5 5 -5 4 -5 5 -5 5 -5 5 -5 5 -5 5 -5 5 -5 5 -5 5 -4 6 -5 5 -4 6 -4 5 -5 6 -4 5 -4 6 -4 6 -4 6 -4 5 -4 6 -4 6 -4 6 -4 6 -3 6 -4 6 -3 6 -4 6 -3 7 -3 6 -4 6 -3 6 -3 6 -3 7 -4 6 -3 6 -3" stroke-opacity="0.40" stroke-width="1.4"/><path d="M340 390l4 -5 5 -6 4 -5 5 -5 4 -6 5 -5 5 -5 5 -5 4 -5 5 -5 5 -6 4 -5 5 -5 5 -5 5 -4 6 -5 5 -4 5 -5 6 -4 5 -5 6 -4 6 -4 5 -4 6 -4 6 -4 5 -4 6 -4 6 -4 6 -4 6 -4 6 -3 6 -4 6 -3 6 -4 6 -3 6 -3 7 -4 6 -3 6 -3 6 -3 6 -4 7 -3 6 -3 6 -3" stroke-opacity="0.65" stroke-width="0.8"/><path d="M349 392l4 -6 4 -5 5 -6 5 -5 4 -5 5 -5 5 -6 4 -5 4 -6 5 -5 5 -5 4 -5 5 -5 5 -5 5 -5 6 -5 5 -4 5 -4 6 -5 5 -4 6 -4 5 -5 6 -4 6 -4 6 -4 5 -4 6 -4 6 -4 6 -3 6 -4 6 -4 6 -3 6 -3 6 -4 6 -3 7 -3 6 -4 6 -3 6 -3 6 -4 7 -3 6 -3 6 -3" stroke-opacity="0.51" stroke-width="1.8"/><path d="M354 392l5 -6 4 -5 5 -6 4 -5 5 -5 5 -5 4 -6 4 -5 5 -6 4 -5 5 -5 5 -6 5 -5 5 -4 5 -5 5 -5 6 -4 5 -5 5 -4 6 -4 5 -5 6 -4 6 -4 5 -4 6 -4 6 -4 6 -4 6 -4 6 -3 6 -4 6 -3 6 -4 6 -3 6 -4 6 -3 6 -3 6 -4 7 -3 6 -3 6 -3 6 -3 7 -4 6 -3" stroke-opacity="0.37" stroke-width="1.8"/><path d="M357 392l5 -6 4 -5 5 -6 4 -5 5 -5 4 -6 4 -5 5 -6 4 -5 5 -6 4 -5 5 -5 5 -5 5 -5 5 -5 6 -4 5 -5 5 -4 6 -4 5 -5 6 -4 5 -4 6 -4 6 -4 6 -4 5 -4 6 -4 6 -4 6 -3 6 -4 6 -3 6 -4 6 -3 7 -4 6 -3 6 -3 6 -4 6 -3 6 -3 7 -3 6 -4 6 -3" stroke-opacity="0.42" stroke-width="1.1"/><path d="M360 393l5 -5 4 -5 5 -6 4 -5 5 -5 4 -6 4 -6 4 -5 5 -6 4 -5 5 -5 5 -5 5 -5 5 -5 5 -5 5 -5 5 -4 6 -4 5 -5 6 -4 5 -4 6 -5 6 -4 5 -4 6 -4 6 -4 6 -3 6 -4 6 -4 6 -3 6 -4 6 -3 6 -4 6 -3 6 -4 6 -3 6 -3 7 -4 6 -3 6 -3 6 -3 7 -3" stroke-opacity="0.53" stroke-width="1.2"/><path d="M366 400l4 -5 5 -6 4 -5 5 -5 4 -6 4 -6 4 -6 4 -5 4 -6 5 -5 4 -6 5 -5 4 -5 5 -5 5 -5 6 -5 5 -4 5 -5 6 -4 5 -4 6 -5 5 -4 6 -4 6 -4 5 -4 6 -4 6 -4 6 -4 6 -3 6 -4 6 -4 6 -3 6 -4 6 -3 6 -3 6 -4 6 -3 7 -3 6 -4 6 -3 6 -3 6 -3" stroke-opacity="0.61" stroke-width="1.2"/><path d="M380 410l4 -6 3 -6 4 -6 3 -6 4 -6 4 -6 4 -6 4 -6 4 -5 4 -6 5 -5 4 -6 5 -5 4 -5 5 -5 5 -5 5 -5 6 -4 5 -5 6 -4 5 -4 6 -5 5 -4 6 -4 6 -4 6 -4 5 -4 6 -3 6 -4 6 -4 6 -3 6 -4 6 -4 6 -3 6 -3 7 -4 6 -3 6 -4 6 -3 6 -3 6 -3 7 -4 6 -3" stroke-opacity="0.43" stroke-width="1.3"/><path d="M386 410l4 -6 3 -6 3 -6 4 -6 4 -6 4 -6 4 -6 4 -6 4 -5 4 -6 4 -5 5 -6 5 -5 4 -5 5 -5 5 -5 5 -5 6 -4 5 -5 6 -4 5 -4 6 -4 5 -5 6 -4 6 -4 6 -3 6 -4 6 -4 5 -4 6 -3 6 -4 6 -4 6 -3 6 -4 7 -3 6 -3 6 -4 6 -3 6 -3 6 -4 7 -3 6 -3" stroke-opacity="0.29" stroke-width="1.0"/><path d="M389 414l3 -6 4 -6 3 -6 4 -6 4 -6 3 -6 4 -6 4 -6 4 -5 4 -6 5 -6 4 -5 5 -5 4 -6 5 -5 5 -5 5 -4 5 -5 6 -5 5 -4 6 -4 5 -4 6 -5 6 -4 5 -4 6 -4 6 -3 6 -4 6 -4 6 -4 6 -3 6 -4 6 -3 6 -4 6 -3 6 -4 6 -3 6 -4 7 -3 6 -3 6 -3 6 -4 6 -3" stroke-opacity="0.38" stroke-width="1.5"/><path d="M400 425l4 -6 3 -7 4 -6 3 -6 4 -6 3 -6 4 -6 4 -6 4 -5 4 -6 4 -6 4 -5 4 -6 5 -5 5 -6 4 -5 5 -5 5 -4 5 -5 6 -5 5 -4 6 -4 5 -5 6 -4 6 -4 5 -4 6 -4 6 -3 6 -4 6 -4 6 -4 6 -3 6 -4 6 -4 6 -3 6 -4 6 -3 6 -4 6 -3 6 -3 7 -3 6 -4 6 -3" stroke-opacity="0.20" stroke-width="1.3"/><path d="M403 425l4 -6 3 -7 4 -6 3 -6 4 -6 3 -6 4 -6 4 -6 4 -5 4 -6 4 -6 4 -5 4 -6 5 -5 4 -5 5 -6 5 -5 5 -4 5 -5 6 -5 5 -4 6 -4 5 -5 6 -4 6 -4 6 -3 5 -4 6 -4 6 -4 6 -4 6 -4 6 -3 6 -4 6 -3 6 -4 6 -4 6 -3 6 -3 6 -4 6 -3 7 -3 6 -3 6 -3" stroke-opacity="0.27" stroke-width="1.1"/><path d="M421 478l3 -6 3 -6 3 -6 4 -6 3 -7 3 -6 3 -6 4 -6 3 -6 3 -6 4 -6 3 -6 4 -7 4 -6 3 -5 4 -6 4 -6 4 -6 4 -5 4 -6 5 -5 4 -6 5 -5 5 -5 5 -5 5 -5 5 -4 6 -5 5 -4 6 -4 5 -5 6 -4 6 -4 6 -4 5 -4 6 -3 6 -4 6 -4 6 -4 6 -3 6 -4 6 -3 6 -4 6 -3 7 -3 6 -3 6 -3" stroke-opacity="0.21" stroke-width="1.0"/><path d="M424 478l3 -6 3 -6 3 -6 3 -6 4 -7 3 -6 3 -6 4 -6 3 -6 3 -6 4 -6 3 -6 4 -7 3 -6 4 -5 4 -6 4 -6 4 -6 4 -5 4 -6 5 -5 4 -6 5 -5 5 -5 5 -5 5 -5 5 -4 6 -5 5 -4 6 -4 5 -5 6 -4 6 -4 6 -4 5 -3 6 -4 6 -4 6 -4 6 -3 6 -4 6 -4 6 -3 6 -3 6 -4 7 -3 6 -3 6 -3" stroke-opacity="0.32" stroke-width="1.2"/><path d="M435 467l3 -6 3 -7 4 -6 3 -6 3 -6 4 -6 3 -6 3 -7 4 -6 3 -6 4 -6 4 -6 3 -6 4 -6 4 -5 4 -6 4 -6 4 -5 5 -6 5 -5 4 -5 5 -5 5 -5 5 -5 5 -4 6 -5 5 -4 6 -5 5 -4 6 -4 6 -4 6 -4 5 -4 6 -4 6 -3 6 -4 6 -4 6 -3 6 -4 6 -3 6 -4 7 -3 6 -3 6 -3 6 -3" stroke-opacity="0.68" stroke-width="1.2"/><path d="M438 467l3 -6 3 -7 4 -6 3 -6 3 -6 3 -6 4 -6 3 -7 4 -6 3 -6 4 -6 3 -6 4 -6 4 -6 4 -5 4 -6 4 -6 4 -5 5 -6 5 -5 4 -5 5 -5 5 -5 5 -5 5 -4 6 -5 5 -4 6 -5 5 -4 6 -4 6 -4 6 -4 5 -4 6 -4 6 -3 6 -4 6 -4 6 -3 6 -4 6 -3 7 -3 6 -4 6 -3 6 -3 6 -3" stroke-opacity="0.28" stroke-width="1.2"/><path d="M446 463l4 -6 3 -7 3 -6 4 -6 3 -6 3 -6 4 -6 3 -6 4 -6 3 -6 4 -7 4 -5 3 -6 4 -6 4 -6 4 -6 5 -5 4 -5 5 -6 5 -5 4 -5 5 -5 5 -5 5 -5 6 -4 5 -5 6 -4 5 -4 6 -4 6 -4 5 -4 6 -4 6 -4 6 -4 6 -3 6 -4 6 -3 6 -4 6 -3 6 -4 7 -3 6 -3 6 -3 6 -3" stroke-opacity="0.53" stroke-width="1.7"/><path d="M449 463l4 -6 3 -7 3 -6 3 -6 4 -6 3 -6 4 -6 3 -6 4 -6 3 -6 4 -6 3 -6 4 -6 4 -6 4 -6 4 -5 5 -6 4 -5 5 -6 5 -5 4 -5 5 -5 5 -5 5 -4 6 -5 5 -5 6 -4 5 -4 6 -4 6 -4 5 -4 6 -4 6 -4 6 -3 6 -4 6 -4 6 -3 6 -4 6 -3 7 -3 6 -4 6 -3 6 -3 6 -3" stroke-opacity="0.46" stroke-width="0.9"/><path d="M458 463l3 -6 3 -7 4 -6 3 -6 4 -6 3 -6 3 -6 4 -6 3 -6 4 -6 4 -6 3 -6 4 -6 4 -6 4 -6 5 -5 4 -6 4 -5 5 -5 5 -6 4 -5 5 -5 5 -5 5 -4 6 -5 5 -4 6 -5 5 -4 6 -4 6 -4 6 -4 5 -4 6 -3 6 -4 6 -4 6 -3 6 -4 6 -3 7 -3 6 -4 6 -3 6 -3 7 -3" stroke-opacity="0.30" stroke-width="1.7"/><path d="M461 463l3 -6 3 -7 4 -6 3 -6 3 -6 4 -6 3 -6 4 -6 3 -6 4 -6 4 -6 3 -6 4 -6 4 -6 4 -5 5 -6 4 -6 4 -5 5 -5 5 -5 4 -6 5 -5 5 -4 5 -5 6 -5 5 -4 6 -4 5 -5 6 -4 6 -4 6 -4 5 -3 6 -4 6 -4 6 -3 6 -4 6 -3 7 -4 6 -3 6 -3 6 -3 7 -4 6 -3" stroke-opacity="0.34" stroke-width="1.2"/><path d="M467 463l3 -6 3 -7 3 -6 4 -6 3 -6 4 -6 3 -6 4 -6 3 -6 4 -6 3 -6 4 -6 4 -6 4 -6 4 -5 5 -6 4 -5 4 -6 5 -5 5 -5 4 -5 5 -5 5 -5 5 -5 6 -5 5 -4 6 -4 5 -5 6 -4 6 -3 6 -4 6 -4 5 -4 6 -3 6 -4 7 -3 6 -4 6 -3 6 -3 6 -4 6 -3 7 -3 6 -3" stroke-opacity="0.45" stroke-width="1.2"/><path d="M472 463l4 -6 3 -7 3 -6 4 -6 3 -6 3 -6 4 -6 3 -6 4 -6 4 -6 3 -6 4 -6 4 -6 4 -6 4 -5 4 -6 5 -5 4 -6 5 -5 4 -5 5 -5 5 -5 5 -5 5 -5 6 -4 5 -5 6 -4 5 -4 6 -4 6 -4 6 -4 6 -4 6 -4 6 -3 6 -4 6 -3 6 -3 6 -4 6 -3 6 -3 7 -3 6 -3 6 -4" stroke-opacity="0.60" stroke-width="1.2"/><path d="M484 457l3 -6 4 -6 3 -6 3 -7 4 -6 3 -6 4 -6 4 -6 3 -6 4 -6 4 -5 4 -6 4 -6 4 -6 4 -5 4 -6 5 -5 4 -6 5 -5 5 -5 5 -5 5 -5 5 -4 5 -5 5 -4 6 -5 6 -4 6 -4 5 -4 6 -3 6 -4 6 -4 6 -3 6 -4 6 -3 7 -3 6 -4 6 -3 6 -3 6 -3 7 -3 6 -4" stroke-opacity="0.31" stroke-width="1.1"/><path d="M487 457l3 -6 3 -6 4 -6 3 -7 4 -6 3 -6 4 -6 4 -6 3 -6 4 -6 4 -5 4 -6 4 -6 4 -6 4 -5 4 -6 5 -5 4 -5 5 -6 5 -5 5 -5 5 -5 5 -4 5 -5 5 -4 6 -5 6 -4 6 -4 5 -3 6 -4 6 -4 6 -4 6 -3 6 -3 7 -4 6 -3 6 -3 6 -4 6 -3 7 -3 6 -3 6 -3" stroke-opacity="0.30" stroke-width="1.9"/><path d="M490 462l3 -7 3 -6 4 -6 3 -6 4 -6 3 -6 4 -6 3 -6 4 -6 4 -6 3 -6 4 -6 4 -6 4 -5 4 -6 4 -6 5 -5 4 -5 5 -6 5 -5 4 -5 5 -5 5 -5 6 -4 5 -5 5 -4 6 -4 6 -5 6 -3 5 -4 6 -4 6 -4 6 -3 7 -3 6 -4 6 -3 6 -3 6 -4 6 -3 7 -3 6 -3 6 -3" stroke-opacity="0.32" stroke-width="1.0"/><path d="M492 462l4 -7 3 -6 3 -6 4 -6 3 -6 4 -6 4 -6 3 -6 4 -6 4 -6 3 -6 4 -6 4 -6 4 -5 4 -6 4 -6 5 -5 4 -5 5 -6 5 -5 4 -5 5 -5 5 -5 6 -4 5 -5 5 -4 6 -4 6 -4 6 -4 6 -4 5 -4 7 -3 6 -4 6 -3 6 -4 6 -3 6 -3 6 -3 7 -4 6 -3 6 -3 6 -3" stroke-opacity="0.24" stroke-width="1.8"/><path d="M501 475l3 -6 4 -6 3 -6 4 -6 3 -6 3 -7 4 -6 4 -6 3 -6 4 -6 3 -6 4 -6 4 -6 3 -5 4 -6 4 -6 4 -6 5 -5 4 -6 5 -5 4 -5 5 -6 5 -5 5 -5 5 -4 5 -5 5 -4 6 -5 6 -4 5 -4 6 -4 6 -3 6 -4 6 -3 6 -4 6 -3 7 -4 6 -3 6 -3 6 -3 6 -4 7 -3 6 -3" stroke-opacity="0.37" stroke-width="0.9"/><path d="M504 475l3 -6 4 -6 3 -6 3 -6 4 -6 3 -7 4 -6 3 -6 4 -6 4 -6 3 -6 4 -6 4 -6 3 -5 4 -6 4 -6 4 -6 5 -5 4 -6 4 -5 5 -5 5 -6 5 -5 5 -5 5 -4 5 -5 5 -4 6 -5 6 -4 5 -4 6 -3 6 -4 6 -4 6 -3 6 -4 7 -3 6 -3 6 -4 6 -3 6 -3 6 -3 7 -4" stroke-opacity="0.35" stroke-width="1.5"/><path d="M507 485l3 -6 3 -6 4 -7 3 -6 4 -6 3 -6 3 -6 4 -6 3 -6 4 -6 3 -6 4 -6 4 -6 3 -6 4 -6 4 -6 4 -6 4 -5 4 -6 4 -6 5 -5 4 -5 5 -5 5 -6 5 -5 5 -4 5 -5 5 -5 6 -4 6 -4 5 -4 6 -4 6 -3 6 -4 6 -4 6 -3 7 -3 6 -4 6 -3 6 -3 6 -4 6 -3 7 -3" stroke-opacity="0.34" stroke-width="1.9"/><path d="M510 485l3 -6 3 -6 4 -7 3 -6 3 -6 4 -6 3 -6 4 -6 3 -6 4 -6 3 -6 4 -6 4 -6 3 -6 4 -6 4 -6 4 -6 4 -5 4 -6 4 -6 5 -5 4 -5 5 -5 5 -6 5 -4 5 -5 5 -5 5 -4 6 -5 6 -4 5 -4 6 -4 6 -3 6 -4 6 -3 6 -4 7 -3 6 -4 6 -3 6 -3 6 -3 6 -4 7 -3" stroke-opacity="0.34" stroke-width="1.3"/><path d="M513 488l3 -6 3 -6 3 -7 4 -6 3 -6 4 -6 3 -6 3 -6 4 -6 3 -6 4 -6 4 -6 3 -6 4 -6 4 -6 3 -6 4 -6 4 -6 5 -5 4 -6 4 -5 5 -6 4 -5 5 -5 5 -5 5 -5 5 -5 5 -4 6 -5 6 -4 5 -4 6 -4 6 -3 6 -4 6 -3 6 -4 6 -3 6 -4 7 -3 6 -3 6 -4 6 -3 6 -3" stroke-opacity="0.35" stroke-width="1.6"/><path d="M516 488l3 -6 3 -6 3 -7 4 -6 3 -6 3 -6 4 -6 3 -6 4 -6 3 -6 4 -6 4 -6 3 -6 4 -6 4 -6 3 -6 4 -6 4 -6 4 -5 5 -6 4 -5 5 -6 4 -5 5 -5 5 -5 5 -5 5 -4 5 -5 6 -4 6 -5 5 -4 6 -3 6 -4 6 -4 6 -3 6 -4 6 -3 6 -3 7 -4 6 -3 6 -3 6 -4 6 -3" stroke-opacity="0.22" stroke-width="1.2"/><path d="M518 488l4 -6 3 -6 3 -7 4 -6 3 -6 3 -6 4 -6 3 -6 4 -6 3 -6 4 -6 3 -6 4 -6 4 -6 3 -6 4 -6 4 -6 4 -6 4 -5 5 -6 4 -5 4 -6 5 -5 5 -5 5 -5 5 -5 5 -4 5 -5 6 -4 6 -4 5 -4 6 -4 6 -4 6 -3 6 -4 6 -3 6 -4 7 -3 6 -4 6 -3 6 -3 6 -3 7 -3" stroke-opacity="0.25" stroke-width="1.1"/><path d="M527 491l3 -6 3 -7 4 -6 3 -6 3 -6 4 -6 3 -6 4 -6 3 -6 4 -6 3 -6 4 -6 4 -6 3 -6 4 -6 4 -6 4 -6 4 -6 4 -5 4 -6 4 -6 5 -5 4 -5 5 -5 5 -5 5 -5 5 -5 6 -4 5 -5 6 -4 5 -4 6 -4 6 -4 6 -3 6 -4 6 -3 6 -4 6 -3 7 -3 6 -4 6 -3 6 -3" stroke-opacity="0.18" stroke-width="1.3"/><path d="M533 491l3 -6 3 -7 4 -6 3 -6 3 -6 4 -6 3 -6 3 -6 4 -6 4 -6 3 -6 4 -6 3 -6 4 -6 4 -6 3 -6 4 -6 4 -6 5 -5 4 -6 4 -5 5 -6 4 -5 5 -5 5 -5 5 -5 5 -5 6 -4 5 -4 6 -5 6 -4 5 -3 6 -4 6 -4 6 -3 6 -4 7 -3 6 -4 6 -3 6 -3 6 -3 7 -3" stroke-opacity="0.17" stroke-width="1.7"/><path d="M536 495l3 -6 3 -7 3 -6 4 -6 3 -6 3 -6 4 -6 3 -6 4 -7 3 -6 4 -6 3 -6 4 -6 4 -6 3 -6 4 -5 4 -6 4 -6 4 -6 4 -5 4 -6 5 -5 5 -6 4 -5 5 -5 5 -5 5 -4 6 -5 5 -4 6 -5 5 -4 6 -4 6 -4 6 -3 6 -4 6 -3 6 -4 6 -3 6 -3 6 -4 7 -3 6 -3" stroke-opacity="0.11" stroke-width="1.6"/><path d="M538 495l4 -6 3 -7 3 -6 4 -6 3 -6 3 -6 4 -6 3 -6 4 -7 3 -6 4 -6 3 -6 4 -6 4 -6 3 -6 4 -5 4 -6 4 -6 4 -6 4 -5 4 -6 5 -5 5 -5 4 -6 5 -5 5 -5 5 -4 6 -5 5 -4 6 -5 5 -4 6 -4 6 -3 6 -4 6 -4 6 -3 6 -4 6 -3 6 -3 7 -3 6 -4" stroke-opacity="0.06" stroke-width="1.6"/><path d="M541 495l4 -6 3 -7 3 -6 3 -6 4 -6 3 -6 4 -6 3 -6 4 -7 3 -6 4 -6 3 -6 4 -6 3 -6 4 -5 4 -6 4 -6 4 -6 4 -6 4 -5 4 -6 5 -5 5 -5 4 -6 5 -5 5 -4 5 -5 6 -5 5 -4 6 -4 5 -4 6 -4 6 -4 6 -4 6 -4 6 -3 6 -3 6 -4 6 -3 7 -3 6 -3" stroke-opacity="0.06" stroke-width="0.8"/><path d="M547 499l3 -7 4 -6 3 -6 3 -6 3 -6 4 -6 3 -7 4 -6 3 -6 4 -6 3 -6 4 -6 3 -6 4 -6 4 -6 4 -6 3 -5 4 -6 4 -6 4 -6 5 -5 4 -6 5 -5 4 -5 5 -5 5 -5 5 -5 6 -4 5 -5 6 -4 5 -4 6 -5 6 -4 5 -3 6 -4 6 -3 7 -4 6 -3 6 -3 6 -4 6 -3" stroke-opacity="0.03" stroke-width="1.8"/><path d="M550 499l3 -7 3 -6 4 -6 3 -6 3 -6 4 -6 3 -7 4 -6 3 -6 3 -6 4 -6 4 -6 3 -6 4 -6 4 -6 3 -6 4 -5 4 -6 4 -6 4 -6 5 -5 4 -5 5 -6 5 -5 4 -5 5 -5 5 -5 6 -4 5 -5 6 -4 5 -4 6 -4 6 -4 5 -4 6 -4 7 -3 6 -4 6 -3 6 -3 6 -3 7 -3" stroke-opacity="0.07" stroke-width="1.4"/><path d="M605 452l3 -6 4 -6 3 -6" stroke-opacity="0.15" stroke-width="1.7"/></g></mask>
<mask id="mD" maskUnits="userSpaceOnUse" x="126" y="126" width="652" height="426"><g fill="none" stroke="#fff" stroke-linejoin="round"><path d="M133 164l6 -3 6 -3 7 -3 6 -3" stroke-opacity="0.41" stroke-width="1.3"/><path d="M133 171l6 -4 6 -3 7 -3 6 -3 6 -3 6 -4 7 -3 6 -3" stroke-opacity="0.56" stroke-width="0.8"/><path d="M133 174l6 -4 6 -3 7 -3 6 -3 6 -3 6 -4 6 -3 7 -3" stroke-opacity="0.63" stroke-width="0.9"/><path d="M133 177l6 -3 6 -4 6 -3 7 -3 6 -4 6 -3 6 -3 7 -3 6 -3 6 -3" stroke-opacity="0.21" stroke-width="0.8"/><path d="M133 183l6 -3 6 -4 6 -3 6 -3 7 -4 6 -3 6 -3 6 -3 6 -4 7 -3 6 -3 6 -3 6 -3" stroke-opacity="0.37" stroke-width="1.1"/><path d="M133 190l6 -4 6 -4 6 -3 6 -4 6 -3 6 -3 7 -4 6 -3 6 -3 6 -3 6 -4 7 -3 6 -3 6 -3 6 -3 7 -3" stroke-opacity="0.23" stroke-width="1.3"/><path d="M133 196l6 -4 6 -4 6 -3 6 -4 6 -3 6 -4 6 -3 6 -3 7 -4 6 -3 6 -3 6 -4 6 -3 7 -3 6 -3 6 -3 6 -3 7 -4" stroke-opacity="0.48" stroke-width="1.8"/><path d="M133 202l6 -4 6 -4 6 -3 6 -4 6 -3 6 -4 6 -3 6 -4 6 -3 6 -4 6 -3 7 -3 6 -4 6 -3 6 -3 6 -3 7 -3 6 -4 6 -3 6 -3" stroke-opacity="0.23" stroke-width="1.1"/><path d="M133 211l6 -4 6 -3 5 -4 6 -4 6 -4 6 -3 6 -4 6 -4 6 -3 6 -4 6 -3 7 -4 6 -3 6 -3 6 -4 6 -3 6 -3 7 -3 6 -4 6 -3 6 -3 7 -3" stroke-opacity="0.48" stroke-width="1.4"/><path d="M133 218l6 -4 5 -4 6 -4 6 -4 6 -4 6 -4 6 -4 6 -3 6 -4 6 -3 6 -4 6 -3 6 -4 6 -3 6 -4 6 -3 7 -3 6 -4 6 -3 6 -3 6 -3 7 -3 6 -4" stroke-opacity="0.23" stroke-width="0.7"/><path d="M133 221l6 -4 5 -4 6 -4 6 -4 6 -4 6 -4 6 -4 5 -3 6 -4 6 -4 6 -3 7 -4 6 -3 6 -4 6 -3 6 -4 6 -3 6 -3 6 -3 7 -4 6 -3 6 -3 6 -3" stroke-opacity="0.35" stroke-width="1.5"/><path d="M133 224l6 -4 5 -4 6 -4 6 -4 6 -4 5 -4 6 -4 6 -4 6 -3 6 -4 6 -4 6 -3 6 -4 6 -3 6 -4 6 -3 7 -3 6 -4 6 -3 6 -3 6 -4 7 -3 6 -3 6 -3" stroke-opacity="0.67" stroke-width="1.2"/><path d="M133 230l6 -4 5 -4 6 -4 5 -5 6 -4 6 -3 6 -4 6 -4 6 -4 6 -4 5 -3 6 -4 6 -4 6 -3 7 -4 6 -3 6 -4 6 -3 6 -3 6 -4 6 -3 6 -3 7 -3 6 -4 6 -3" stroke-opacity="0.61" stroke-width="1.5"/><path d="M133 246l5 -5 6 -4 5 -5 6 -4 5 -4 6 -4 6 -4 5 -4 6 -5 6 -3 6 -4 5 -4 6 -4 6 -4 6 -3 6 -4 6 -4 6 -3 6 -4 6 -3 6 -4 7 -3 6 -3 6 -4 6 -3 6 -3 7 -3 6 -3" stroke-opacity="0.57" stroke-width="1.2"/><path d="M133 252l5 -5 6 -4 5 -5 5 -4 6 -4 5 -5 6 -4 6 -4 5 -4 6 -4 6 -4 6 -4 5 -4 6 -4 6 -3 6 -4 6 -4 6 -4 6 -3 6 -4 6 -3 6 -4 6 -3 7 -3 6 -4 6 -3 6 -3 6 -3 7 -3" stroke-opacity="0.57" stroke-width="1.8"/><path d="M133 255l5 -5 6 -4 5 -5 5 -4 6 -4 5 -5 6 -4 5 -4 6 -4 6 -4 5 -4 6 -4 6 -4 6 -4 6 -4 6 -4 6 -4 6 -3 6 -4 6 -3 6 -4 6 -3 6 -4 6 -3 6 -3 6 -4 6 -3 7 -3 6 -3 6 -3" stroke-opacity="0.55" stroke-width="0.9"/><path d="M133 258l5 -5 5 -4 6 -5 5 -4 6 -5 5 -4 6 -4 5 -4 6 -5 5 -4 6 -4 6 -4 6 -4 5 -4 6 -4 6 -3 6 -4 6 -4 6 -3 6 -4 6 -4 6 -3 6 -4 6 -3 6 -3 7 -4 6 -3 6 -3 6 -3 7 -3" stroke-opacity="0.37" stroke-width="1.2"/><path d="M133 264l5 -4 5 -5 6 -5 5 -4 5 -5 6 -4 5 -5 5 -4 6 -4 6 -4 5 -5 6 -4 6 -4 5 -4 6 -4 6 -3 6 -4 6 -4 6 -4 6 -3 6 -4 6 -4 6 -3 6 -4 6 -3 6 -3 6 -4 7 -3 6 -3 6 -3 6 -3" stroke-opacity="0.36" stroke-width="1.0"/><path d="M133 268l5 -5 5 -5 5 -5 6 -4 5 -5 5 -4 6 -5 5 -4 6 -4 5 -5 6 -4 6 -4 5 -4 6 -4 6 -4 6 -4 5 -4 6 -4 6 -3 6 -4 6 -4 6 -3 6 -4 6 -3 6 -4 6 -3 7 -4 6 -3 6 -3 6 -3 6 -3 7 -4" stroke-opacity="0.35" stroke-width="1.2"/><path d="M133 277l5 -5 5 -5 5 -5 5 -4 5 -5 6 -5 5 -4 5 -5 6 -4 5 -5 6 -4 5 -4 6 -4 5 -5 6 -4 6 -4 6 -4 5 -4 6 -3 6 -4 6 -4 6 -4 6 -3 6 -4 6 -3 6 -4 6 -3 6 -4 7 -3 6 -3 6 -3 6 -3 7 -4 6 -3" stroke-opacity="0.33" stroke-width="1.5"/><path d="M133 280l5 -5 5 -5 5 -5 5 -4 5 -5 5 -5 6 -4 5 -5 5 -5 6 -4 5 -4 6 -5 5 -4 6 -4 6 -4 5 -4 6 -4 6 -4 6 -4 6 -4 5 -4 6 -3 6 -4 6 -4 6 -3 6 -4 6 -3 7 -4 6 -3 6 -3 6 -3 6 -4 7 -3 6 -3" stroke-opacity="0.61" stroke-width="1.3"/><path d="M133 283l5 -5 5 -5 5 -5 5 -5 5 -4 5 -5 5 -5 6 -4 5 -5 5 -4 6 -5 5 -4 6 -4 5 -4 6 -5 6 -4 5 -4 6 -4 6 -4 6 -4 6 -3 6 -4 6 -4 6 -3 6 -4 6 -4 6 -3 6 -3 6 -4 6 -3 6 -3 7 -4 6 -3 6 -3" stroke-opacity="0.41" stroke-width="1.0"/><path d="M133 286l5 -5 5 -5 5 -5 5 -5 5 -4 5 -5 5 -5 5 -4 6 -5 5 -5 5 -4 6 -4 5 -5 6 -4 6 -4 5 -4 6 -4 6 -4 5 -4 6 -4 6 -4 6 -4 6 -4 6 -3 6 -4 6 -3 6 -4 6 -3 6 -4 6 -3 6 -3 7 -4 6 -3 6 -3 6 -3" stroke-opacity="0.66" stroke-width="1.6"/><path d="M133 299l5 -5 4 -6 5 -5 5 -5 5 -5 5 -5 5 -4 5 -5 5 -5 5 -5 6 -4 5 -5 5 -4 6 -5 5 -4 6 -4 6 -4 5 -5 6 -4 5 -4 6 -4 6 -4 6 -4 6 -3 6 -4 6 -4 6 -3 6 -4 6 -3 6 -4 6 -3 6 -4 6 -3 7 -3 6 -3 6 -3 6 -4" stroke-opacity="0.38" stroke-width="1.8"/><path d="M133 311l4 -5 5 -5 5 -6 4 -5 5 -5 5 -5 5 -5 5 -5 5 -5 5 -5 5 -4 5 -5 6 -5 5 -4 5 -5 6 -4 5 -4 6 -5 5 -4 6 -4 5 -4 6 -4 6 -4 6 -4 5 -4 6 -4 6 -4 6 -4 6 -3 6 -4 6 -3 6 -4 7 -3 6 -3 6 -4 6 -3 6 -3 7 -3 6 -3" stroke-opacity="0.46" stroke-width="1.3"/><path d="M133 324l4 -6 5 -5 4 -5 5 -6 4 -5 5 -5 5 -5 5 -6 4 -5 5 -4 5 -5 5 -5 6 -5 5 -5 5 -4 5 -5 6 -4 5 -5 5 -4 6 -5 6 -4 5 -4 6 -4 5 -4 6 -4 6 -4 6 -4 6 -4 6 -4 6 -3 6 -4 6 -3 6 -4 6 -3 6 -4 6 -3 6 -3 6 -4 7 -3 6 -3" stroke-opacity="0.23" stroke-width="1.0"/><path d="M133 327l4 -6 5 -5 4 -5 5 -6 4 -5 5 -5 4 -6 5 -5 5 -5 5 -5 5 -5 5 -5 5 -4 5 -5 5 -5 6 -4 5 -5 5 -4 6 -5 5 -4 6 -5 5 -4 6 -4 6 -4 5 -4 6 -4 6 -4 6 -4 6 -4 6 -3 6 -4 6 -3 6 -4 6 -3 6 -4 6 -3 6 -3 6 -4 7 -3 6 -3 6 -3" stroke-opacity="0.23" stroke-width="1.7"/><path d="M139 337l4 -5 4 -6 5 -5 4 -6 4 -5 5 -6 5 -5 4 -5 5 -5 5 -6 5 -5 4 -5 5 -4 5 -5 6 -5 5 -5 5 -5 5 -4 6 -5 5 -4 5 -5 6 -4 5 -4 6 -4 6 -5 5 -4 6 -4 6 -4 6 -3 6 -4 5 -4 6 -4 6 -3 7 -4 6 -3 6 -4 6 -3 6 -3 6 -3 6 -4 7 -3" stroke-opacity="0.67" stroke-width="1.1"/><path d="M148 341l4 -6 4 -6 4 -5 4 -6 5 -5 4 -5 5 -6 4 -5 5 -5 5 -5 5 -5 5 -5 4 -5 5 -5 6 -5 5 -5 5 -5 5 -4 5 -5 6 -4 5 -5 6 -4 5 -5 6 -4 5 -4 6 -4 6 -4 5 -4 6 -4 6 -4 6 -3 6 -4 6 -4 6 -3 6 -4 6 -3 7 -3 6 -4 6 -3 6 -3 6 -3 7 -3" stroke-opacity="0.61" stroke-width="0.9"/><path d="M153 344l4 -5 5 -6 4 -6 4 -5 4 -6 5 -5 4 -5 5 -6 5 -5 4 -5 5 -5 5 -5 5 -5 5 -5 5 -5 5 -5 5 -5 5 -4 5 -5 6 -5 5 -4 6 -4 5 -5 6 -4 5 -4 6 -4 6 -4 5 -4 6 -4 6 -4 6 -4 6 -3 6 -4 6 -4 6 -3 6 -3 6 -4 7 -3 6 -3 6 -4 6 -3 6 -3" stroke-opacity="0.29" stroke-width="1.1"/><path d="M156 344l4 -5 4 -6 5 -6 4 -5 4 -6 5 -5 4 -5 5 -6 4 -5 5 -5 5 -5 5 -5 5 -5 5 -5 5 -5 5 -5 5 -5 5 -4 5 -5 6 -5 5 -4 5 -4 6 -5 6 -4 5 -4 6 -4 6 -4 5 -4 6 -4 6 -4 6 -4 6 -3 6 -4 6 -3 6 -4 6 -3 6 -4 7 -3 6 -3 6 -3 6 -4 6 -3" stroke-opacity="0.32" stroke-width="1.6"/><path d="M159 344l4 -5 4 -6 4 -6 5 -5 4 -6 5 -5 4 -5 5 -6 4 -5 5 -5 5 -5 5 -5 5 -5 5 -5 5 -5 5 -5 5 -5 5 -4 5 -5 6 -5 5 -4 5 -4 6 -5 5 -4 6 -4 6 -4 6 -4 5 -4 6 -4 6 -4 6 -3 6 -4 6 -4 6 -3 6 -4 6 -3 6 -4 7 -3 6 -3 6 -3 6 -3 6 -3" stroke-opacity="0.36" stroke-width="1.1"/><path d="M165 347l4 -6 4 -6 4 -5 4 -6 5 -5 4 -6 5 -5 4 -5 5 -6 5 -5 4 -5 5 -5 5 -5 5 -5 5 -5 5 -5 5 -5 5 -4 6 -5 5 -5 5 -4 6 -4 5 -5 6 -4 5 -4 6 -4 6 -4 6 -4 5 -4 6 -4 6 -4 6 -3 6 -4 6 -3 6 -4 6 -3 7 -4 6 -3 6 -3 6 -3 6 -3 7 -4" stroke-opacity="0.54" stroke-width="1.4"/><path d="M168 347l4 -6 4 -6 4 -5 4 -6 5 -5 4 -6 5 -5 4 -5 5 -6 4 -5 5 -5 5 -5 5 -5 5 -5 5 -5 5 -5 5 -5 5 -4 5 -5 6 -4 5 -5 6 -4 5 -5 6 -4 5 -4 6 -4 6 -4 6 -4 5 -4 6 -4 6 -3 6 -4 6 -4 6 -3 6 -4 6 -3 7 -3 6 -4 6 -3 6 -3 7 -3 6 -3" stroke-opacity="0.50" stroke-width="1.8"/><path d="M170 347l5 -6 4 -6 4 -5 4 -6 5 -5 4 -6 4 -5 5 -5 5 -6 4 -5 5 -5 5 -5 5 -5 5 -5 5 -5 5 -5 5 -5 5 -4 5 -5 6 -4 5 -5 6 -4 5 -5 6 -4 5 -4 6 -4 6 -4 6 -4 5 -4 6 -4 6 -3 6 -4 6 -4 6 -3 6 -3 6 -4 7 -3 6 -3 6 -4 6 -3 7 -3 6 -3" stroke-opacity="0.63" stroke-width="1.1"/><path d="M179 349l4 -6 4 -5 5 -6 4 -6 4 -5 5 -6 4 -5 5 -5 4 -6 5 -5 5 -5 4 -5 5 -5 5 -5 5 -5 5 -5 5 -5 5 -4 6 -5 5 -4 5 -5 6 -4 5 -4 6 -5 6 -4 5 -4 6 -4 6 -4 6 -4 6 -3 6 -4 6 -4 6 -3 6 -4 6 -3 6 -4 6 -3 6 -3 7 -3 6 -4 6 -3 6 -3 7 -3" stroke-opacity="0.27" stroke-width="1.4"/><path d="M205 348l4 -6 4 -5 5 -6 4 -6 4 -5 5 -5 4 -6 5 -5 4 -5 5 -6 5 -5 5 -5 5 -5 5 -5 5 -4 5 -5 5 -5 5 -4 6 -5 5 -4 6 -5 5 -4 6 -4 5 -4 6 -4 6 -4 6 -4 6 -4 6 -4 6 -3 6 -4 6 -3 6 -4 6 -3 6 -4 6 -3 6 -3 7 -3 6 -4 6 -3 6 -3 7 -3" stroke-opacity="0.42" stroke-width="1.0"/><path d="M214 348l4 -6 4 -5 4 -6 4 -6 5 -5 4 -5 5 -6 4 -5 5 -5 5 -5 5 -6 5 -5 4 -4 6 -5 5 -5 5 -5 5 -4 5 -5 6 -4 5 -5 6 -4 5 -4 6 -5 6 -4 5 -4 6 -4 6 -3 6 -4 6 -4 6 -3 6 -4 6 -4 6 -3 6 -3 6 -4 7 -3 6 -3 6 -3 6 -4 6 -3 7 -3 6 -3" stroke-opacity="0.47" stroke-width="0.7"/><path d="M216 352l5 -5 4 -6 4 -5 4 -6 4 -5 5 -6 4 -5 5 -6 5 -5 4 -5 5 -5 5 -5 5 -5 5 -5 5 -5 5 -5 5 -4 6 -5 5 -4 5 -5 6 -4 5 -4 6 -5 6 -4 5 -4 6 -4 6 -4 6 -4 6 -3 6 -4 6 -3 6 -4 6 -3 6 -4 6 -3 6 -4 6 -3 7 -3 6 -3 6 -4 6 -3 7 -3 6 -3" stroke-opacity="0.45" stroke-width="1.6"/><path d="M225 352l4 -5 4 -6 5 -5 4 -6 4 -5 5 -6 4 -5 5 -6 4 -5 5 -5 5 -5 5 -5 5 -5 5 -5 5 -5 5 -4 5 -5 6 -4 5 -5 5 -4 6 -5 6 -4 5 -4 6 -4 6 -4 5 -4 6 -4 6 -4 6 -3 6 -4 6 -4 6 -3 6 -3 6 -4 7 -3 6 -4 6 -3 6 -3 6 -3 7 -4 6 -3 6 -3 6 -3" stroke-opacity="0.26" stroke-width="1.1"/><path d="M228 352l4 -5 4 -6 4 -5 5 -6 4 -5 5 -6 4 -5 5 -5 4 -6 5 -5 5 -5 5 -5 5 -5 5 -5 5 -4 5 -5 5 -5 6 -4 5 -5 6 -4 5 -4 6 -5 5 -4 6 -4 6 -4 6 -4 5 -4 6 -3 6 -4 6 -4 6 -3 6 -4 6 -3 7 -3 6 -4 6 -3 6 -4 6 -3 6 -3 7 -3 6 -3 6 -4 6 -3" stroke-opacity="0.54" stroke-width="0.8"/><path d="M231 352l4 -5 4 -6 4 -5 5 -6 4 -5 4 -6 5 -5 5 -5 4 -6 5 -5 5 -5 5 -5 5 -5 5 -5 5 -4 5 -5 5 -5 6 -4 5 -5 6 -4 5 -4 6 -4 5 -5 6 -4 6 -4 6 -4 6 -3 5 -4 6 -4 6 -3 6 -4 7 -3 6 -4 6 -3 6 -4 6 -3 6 -3 6 -3 7 -4 6 -3 6 -3 6 -3" stroke-opacity="0.48" stroke-width="1.3"/><path d="M240 355l4 -6 4 -6 4 -5 4 -6 5 -5 4 -5 5 -6 4 -5 5 -5 5 -5 5 -5 5 -5 5 -5 5 -5 5 -5 5 -5 5 -4 6 -5 5 -4 5 -4 6 -5 6 -4 5 -4 6 -4 6 -4 6 -4 5 -4 6 -3 6 -4 6 -4 6 -3 6 -4 7 -3 6 -4 6 -3 6 -3 6 -4 6 -3 6 -3 7 -3 6 -4 6 -3" stroke-opacity="0.58" stroke-width="1.7"/><path d="M251 364l4 -6 4 -5 4 -6 5 -5 4 -6 4 -5 5 -6 4 -5 5 -5 5 -5 5 -5 4 -5 5 -5 5 -5 6 -5 5 -5 5 -4 5 -5 6 -5 5 -4 6 -4 5 -4 6 -5 5 -4 6 -4 6 -4 6 -3 6 -4 6 -4 6 -4 6 -3 6 -4 6 -3 6 -4 6 -3 6 -4 6 -3 6 -3 6 -4 7 -3 6 -3 6 -3" stroke-opacity="0.26" stroke-width="0.8"/><path d="M260 365l4 -5 4 -6 4 -6 4 -5 5 -6 4 -5 5 -5 4 -6 5 -5 5 -5 5 -5 4 -5 5 -5 5 -5 6 -5 5 -4 5 -5 5 -4 6 -5 5 -4 6 -4 5 -5 6 -4 6 -4 6 -4 5 -4 6 -3 6 -4 6 -4 6 -4 6 -3 6 -4 6 -3 6 -4 6 -3 6 -4 6 -3 7 -3 6 -4 6 -3 6 -3 7 -3" stroke-opacity="0.25" stroke-width="0.8"/><path d="M262 368l5 -6 4 -6 4 -5 4 -6 5 -5 4 -6 4 -5 5 -5 5 -6 4 -5 5 -5 5 -5 5 -5 5 -5 5 -4 5 -5 6 -5 5 -4 5 -5 6 -4 5 -4 6 -5 6 -4 5 -4 6 -4 6 -4 6 -3 6 -4 6 -4 6 -4 6 -3 6 -4 6 -3 6 -4 6 -3 6 -4 6 -3 6 -4 6 -3 7 -3 6 -3 6 -3 6 -3" stroke-opacity="0.60" stroke-width="1.3"/><path d="M283 372l4 -5 4 -6 4 -5 4 -6 5 -5 4 -6 5 -5 5 -5 4 -5 5 -6 5 -5 5 -5 5 -4 5 -5 5 -5 5 -5 6 -4 5 -5 6 -4 5 -4 6 -4 5 -5 6 -4 6 -4 6 -4 5 -4 6 -3 6 -4 6 -4 6 -4 6 -3 6 -4 6 -4 6 -3 6 -4 6 -3 6 -3 6 -4 7 -3 6 -3 6 -3" stroke-opacity="0.53" stroke-width="1.4"/><path d="M286 383l4 -6 4 -5 4 -6 4 -6 4 -5 5 -6 4 -5 5 -5 4 -6 5 -5 5 -5 5 -5 5 -5 5 -5 5 -4 5 -5 5 -5 6 -4 5 -5 5 -4 6 -5 5 -4 6 -4 6 -4 6 -4 5 -4 6 -4 6 -4 6 -4 5 -4 6 -3 6 -4 6 -4 6 -3 6 -4 6 -3 7 -4 6 -3 6 -3 6 -4 6 -3" stroke-opacity="0.35" stroke-width="1.2"/><path d="M288 391l4 -6 4 -5 4 -6 5 -6 4 -5 4 -6 5 -5 4 -5 5 -6 4 -5 5 -5 5 -5 5 -5 5 -5 5 -5 5 -5 5 -5 5 -4 6 -5 5 -4 6 -4 5 -5 6 -4 5 -4 6 -4 6 -4 5 -4 6 -4 6 -4 6 -4 6 -4 5 -4 6 -4 6 -3 6 -4 6 -3 6 -4 7 -3 6 -4 6 -3 6 -3 6 -3" stroke-opacity="0.61" stroke-width="1.1"/><path d="M300 389l4 -6 4 -6 4 -5 5 -6 4 -5 4 -6 5 -5 4 -5 5 -6 5 -5 5 -5 4 -5 5 -5 5 -5 6 -4 5 -5 5 -5 5 -4 6 -5 5 -4 6 -4 5 -4 6 -5 6 -4 5 -4 6 -4 6 -4 5 -4 6 -4 6 -4 6 -4 6 -3 6 -4 6 -3 6 -4 6 -3 6 -4 6 -3 6 -4 7 -3 6 -3 6 -3 7 -3 6 -3" stroke-opacity="0.69" stroke-width="1.6"/><path d="M303 389l4 -6 4 -6 4 -5 4 -6 5 -5 4 -6 5 -5 4 -5 5 -5 5 -6 5 -5 5 -5 5 -5 5 -4 5 -5 5 -5 5 -4 6 -5 5 -4 6 -5 5 -4 6 -4 5 -4 6 -5 5 -4 6 -4 6 -4 6 -4 5 -4 6 -3 6 -4 6 -4 6 -4 6 -3 6 -4 6 -3 6 -4 7 -3 6 -3 6 -3 6 -3 7 -4 6 -3 6 -3" stroke-opacity="0.58" stroke-width="1.3"/><path d="M306 389l4 -6 4 -6 4 -5 4 -6 5 -5 4 -6 5 -5 4 -5 5 -5 5 -5 5 -5 5 -5 5 -5 5 -5 5 -5 5 -4 5 -5 6 -5 5 -4 6 -4 5 -5 6 -4 5 -4 6 -4 6 -4 5 -4 6 -4 6 -4 6 -4 6 -4 5 -4 6 -4 6 -3 6 -4 6 -3 7 -4 6 -3 6 -3 6 -4 6 -3 7 -3 6 -3 6 -3" stroke-opacity="0.31" stroke-width="0.8"/><path d="M308 385l5 -6 4 -6 4 -5 4 -6 5 -5 4 -5 5 -6 5 -5 4 -5 5 -5 5 -5 5 -5 5 -5 5 -5 6 -4 5 -5 5 -4 6 -5 5 -4 6 -4 5 -5 6 -4 5 -4 6 -4 6 -4 5 -4 6 -4 6 -4 6 -4 6 -4 6 -4 6 -3 6 -4 6 -3 6 -4 6 -3 6 -4 6 -3 7 -3 6 -3 6 -3 6 -3 7 -4" stroke-opacity="0.46" stroke-width="1.3"/><path d="M323 390l4 -5 4 -6 5 -5 4 -6 4 -5 5 -5 5 -6 4 -5 5 -5 5 -5 5 -5 5 -5 5 -5 5 -4 5 -5 5 -5 6 -4 5 -5 6 -4 5 -5 6 -4 5 -4 6 -4 5 -5 6 -4 6 -4 5 -4 6 -4 6 -3 6 -4 6 -4 6 -4 6 -3 6 -4 6 -3 6 -3 6 -4 7 -3 6 -3 6 -3 6 -4 7 -3 6 -3 6 -3" stroke-opacity="0.35" stroke-width="1.4"/><path d="M334 398l5 -5 4 -6 4 -5 4 -6 5 -5 5 -6 4 -5 5 -5 5 -5 5 -5 5 -5 4 -5 5 -5 5 -6 5 -4 5 -5 5 -5 5 -4 6 -5 5 -4 6 -5 5 -4 6 -4 5 -4 6 -5 6 -4 5 -4 6 -4 6 -3 6 -4 6 -4 6 -4 6 -3 6 -4 6 -3 6 -3 6 -4 6 -3 7 -3 6 -4 6 -3 6 -3 7 -3 6 -3 6 -3" stroke-opacity="0.27" stroke-width="1.6"/><path d="M343 390l4 -5 5 -6 4 -5 5 -5 4 -5 5 -6 5 -5 5 -5 5 -5 4 -5 5 -5 4 -6 5 -5 5 -4 6 -5 5 -5 5 -4 6 -5 5 -4 5 -4 6 -5 6 -4 5 -4 6 -4 6 -4 5 -4 6 -4 6 -4 6 -4 6 -3 6 -4 6 -3 6 -4 6 -3 6 -4 7 -3 6 -3 6 -4 6 -3 6 -3 7 -3 6 -3 6 -3 6 -4" stroke-opacity="0.68" stroke-width="0.9"/><path d="M346 390l4 -5 5 -5 4 -6 5 -5 4 -5 5 -6 5 -5 5 -5 4 -5 5 -6 4 -5 5 -5 5 -5 5 -5 5 -4 5 -5 6 -5 5 -4 6 -4 5 -5 6 -4 5 -4 6 -4 6 -4 5 -4 6 -4 6 -4 6 -4 6 -4 6 -4 6 -3 6 -4 6 -3 6 -3 6 -4 6 -3 6 -3 7 -4 6 -3 6 -3 6 -3 7 -3 6 -4 6 -3" stroke-opacity="0.69" stroke-width="1.9"/><path d="M352 392l4 -6 4 -5 5 -6 5 -5 4 -5 5 -5 5 -5 4 -6 4 -5 5 -6 5 -5 4 -5 5 -5 5 -5 5 -5 6 -4 5 -5 5 -4 6 -5 5 -4 6 -4 6 -5 5 -4 6 -4 6 -4 5 -4 6 -3 6 -4 6 -4 6 -4 6 -3 6 -4 6 -3 6 -3 7 -4 6 -3 6 -4 6 -3 6 -3 7 -3 6 -3 6 -4 6 -3" stroke-opacity="0.64" stroke-width="1.5"/><path d="M363 393l5 -5 4 -5 5 -6 4 -5 4 -6 4 -5 4 -6 5 -6 4 -5 5 -5 4 -6 5 -5 5 -5 5 -5 5 -4 5 -5 6 -4 5 -5 6 -4 5 -5 6 -4 5 -4 6 -4 6 -4 6 -4 5 -4 6 -4 6 -4 6 -3 6 -4 6 -3 6 -4 6 -3 6 -3 7 -4 6 -3 6 -4 6 -3 6 -3 7 -3 6 -3 6 -4" stroke-opacity="0.22" stroke-width="1.7"/><path d="M369 400l4 -5 5 -6 4 -5 4 -6 4 -6 4 -5 4 -6 4 -6 4 -5 5 -6 4 -5 5 -5 5 -5 5 -5 5 -5 5 -5 5 -5 5 -4 6 -5 5 -4 6 -4 5 -4 6 -4 6 -4 6 -4 5 -4 6 -4 6 -4 6 -4 6 -3 6 -4 6 -3 6 -4 6 -3 6 -4 7 -3 6 -3 6 -4 6 -3 6 -3 7 -3 6 -4" stroke-opacity="0.43" stroke-width="0.9"/><path d="M375 406l4 -5 4 -6 4 -6 4 -6 3 -6 4 -6 4 -5 4 -6 5 -6 4 -5 4 -6 5 -5 4 -5 5 -5 5 -5 5 -5 5 -5 6 -4 5 -5 6 -4 5 -4 6 -5 5 -4 6 -4 6 -4 6 -4 5 -4 6 -3 6 -4 6 -4 6 -3 6 -4 6 -3 6 -4 7 -3 6 -4 6 -3 6 -3 6 -4 6 -3 7 -3 6 -3 6 -3" stroke-opacity="0.30" stroke-width="1.2"/><path d="M378 406l4 -5 3 -6 4 -6 4 -6 3 -6 4 -6 4 -6 4 -6 4 -5 5 -6 4 -5 5 -5 5 -6 4 -5 5 -5 5 -4 6 -5 5 -5 5 -4 6 -4 5 -5 6 -4 6 -4 5 -4 6 -4 6 -4 6 -4 6 -4 6 -3 6 -4 6 -4 6 -3 6 -4 6 -3 6 -4 6 -3 6 -3 6 -4 6 -3 7 -3 6 -3 6 -4" stroke-opacity="0.51" stroke-width="0.8"/><path d="M383 410l4 -6 3 -6 4 -6 3 -6 4 -6 4 -6 4 -6 4 -6 4 -5 4 -6 5 -5 4 -6 5 -5 4 -5 5 -5 5 -5 5 -5 6 -4 5 -5 6 -4 5 -4 6 -4 5 -5 6 -4 6 -4 6 -4 5 -3 6 -4 6 -4 6 -3 6 -4 6 -4 6 -3 6 -4 7 -3 6 -4 6 -3 6 -3 6 -4 6 -3 7 -3 6 -3 6 -3" stroke-opacity="0.49" stroke-width="1.7"/><path d="M392 414l3 -6 4 -6 3 -6 4 -6 3 -6 4 -6 4 -6 4 -6 4 -5 4 -6 5 -6 4 -5 5 -5 4 -5 5 -6 5 -5 5 -4 5 -5 6 -4 5 -5 6 -4 5 -4 6 -5 6 -4 5 -4 6 -3 6 -4 6 -4 6 -4 6 -3 6 -4 6 -4 6 -3 6 -4 6 -3 6 -4 6 -3 6 -3 7 -4 6 -3 6 -3 6 -3 7 -3" stroke-opacity="0.32" stroke-width="1.5"/><path d="M395 423l3 -6 4 -6 3 -7 3 -6 4 -6 4 -6 3 -6 4 -5 4 -6 4 -6 4 -6 5 -5 4 -6 4 -5 5 -5 5 -5 5 -5 5 -5 5 -5 5 -4 6 -5 5 -4 6 -4 6 -4 5 -4 6 -4 6 -4 6 -4 6 -4 6 -4 6 -3 5 -4 6 -4 6 -3 7 -4 6 -3 6 -4 6 -3 6 -3 6 -4 6 -3 7 -3 6 -3" stroke-opacity="0.55" stroke-width="1.9"/><path d="M398 423l3 -6 3 -6 4 -7 3 -6 4 -6 3 -6 4 -6 4 -5 4 -6 4 -6 4 -6 4 -5 5 -6 4 -5 5 -5 5 -5 5 -5 5 -5 5 -5 5 -4 6 -5 5 -4 6 -4 6 -4 5 -4 6 -4 6 -4 6 -4 6 -4 6 -3 6 -4 5 -4 6 -3 7 -4 6 -4 6 -3 6 -3 6 -4 6 -3 6 -3 6 -4 7 -3 6 -3" stroke-opacity="0.42" stroke-width="1.3"/><path d="M406 425l4 -6 3 -7 3 -6 4 -6 3 -6 4 -6 4 -6 3 -6 4 -5 4 -6 5 -6 4 -5 4 -6 5 -5 4 -5 5 -6 5 -4 5 -5 5 -5 6 -5 5 -4 6 -4 5 -4 6 -4 6 -4 6 -4 5 -4 6 -4 6 -4 6 -4 6 -3 6 -4 6 -4 6 -3 6 -4 6 -3 6 -4 6 -3 6 -3 7 -4 6 -3 6 -3 6 -3" stroke-opacity="0.46" stroke-width="1.2"/><path d="M409 436l3 -7 4 -6 3 -6 4 -6 3 -6 3 -6 4 -6 4 -6 3 -6 4 -6 4 -6 4 -6 4 -5 5 -6 4 -5 5 -5 4 -6 5 -5 5 -5 5 -4 6 -5 5 -4 5 -5 6 -4 6 -4 6 -4 5 -4 6 -4 6 -4 6 -4 6 -3 6 -4 6 -4 6 -3 6 -4 6 -4 6 -3 6 -4 6 -3 6 -3 6 -4 6 -3 7 -3" stroke-opacity="0.23" stroke-width="1.8"/><path d="M412 436l3 -7 4 -6 3 -6 3 -6 4 -6 3 -6 4 -6 4 -6 3 -6 4 -6 4 -6 4 -6 4 -5 5 -6 4 -5 5 -5 4 -5 5 -6 5 -4 5 -5 6 -5 5 -4 6 -5 5 -4 6 -4 6 -4 5 -4 6 -4 6 -4 6 -3 6 -4 6 -4 6 -4 6 -3 6 -4 6 -4 6 -3 6 -3 6 -4 6 -3 6 -3 6 -3 7 -4" stroke-opacity="0.41" stroke-width="1.5"/><path d="M418 463l3 -6 3 -7 3 -6 4 -6 3 -6 3 -6 4 -6 3 -7 4 -6 3 -6 4 -6 3 -6 4 -6 4 -6 4 -5 4 -6 4 -6 4 -5 5 -6 4 -5 5 -5 5 -5 5 -5 5 -5 6 -4 5 -5 5 -4 6 -4 6 -4 5 -4 6 -4 6 -4 6 -4 6 -4 6 -4 5 -3 6 -4 6 -4 6 -3 6 -4 7 -3 6 -4 6 -3 6 -3 6 -3" stroke-opacity="0.66" stroke-width="1.8"/><path d="M429 484l3 -6 4 -6 3 -6 3 -7 3 -6 4 -6 3 -6 3 -6 4 -6 3 -7 3 -6 4 -6 3 -6 4 -6 4 -6 3 -6 4 -6 4 -5 4 -6 4 -6 5 -5 4 -5 5 -6 5 -5 5 -5 5 -5 5 -5 5 -4 5 -5 6 -4 5 -4 6 -4 6 -4 5 -4 6 -4 6 -4 6 -4 6 -4 6 -4 6 -3 6 -4 6 -3 6 -4 6 -3 6 -3 7 -3 6 -3 6 -4" stroke-opacity="0.27" stroke-width="1.1"/><path d="M432 484l3 -6 4 -6 3 -6 3 -7 3 -6 4 -6 3 -6 3 -6 3 -6 4 -7 3 -6 4 -6 3 -6 4 -6 4 -6 3 -6 4 -6 4 -5 4 -6 4 -6 5 -5 4 -5 5 -6 5 -5 5 -5 5 -5 5 -4 5 -5 5 -5 6 -4 5 -4 6 -4 6 -4 5 -4 6 -4 6 -4 6 -4 6 -4 6 -3 6 -4 6 -4 6 -3 6 -3 6 -4 7 -3 6 -3 6 -3 6 -3" stroke-opacity="0.58" stroke-width="1.7"/><path d="M441 467l3 -6 3 -7 3 -6 4 -6 3 -6 3 -6 4 -6 3 -7 4 -6 3 -6 4 -6 3 -6 4 -6 4 -5 4 -6 4 -6 4 -6 4 -5 5 -5 5 -6 4 -5 5 -5 5 -5 5 -5 5 -4 6 -5 5 -4 6 -5 5 -4 6 -4 6 -4 6 -4 5 -4 6 -3 6 -4 6 -4 6 -3 6 -4 6 -3 6 -4 7 -3 6 -3 6 -3 6 -4 7 -3" stroke-opacity="0.23" stroke-width="1.0"/><path d="M444 467l3 -6 3 -7 3 -6 4 -6 3 -6 3 -6 4 -6 3 -7 4 -6 3 -6 4 -6 3 -6 4 -6 4 -5 4 -6 4 -6 4 -6 5 -5 4 -5 5 -6 4 -5 5 -5 5 -5 5 -5 5 -4 6 -5 5 -4 6 -4 5 -5 6 -4 6 -4 6 -4 5 -3 6 -4 6 -4 6 -4 6 -3 6 -4 6 -3 7 -4 6 -3 6 -3 6 -3 6 -3 7 -3" stroke-opacity="0.61" stroke-width="0.9"/><path d="M452 463l3 -6 4 -7 3 -6 3 -6 4 -6 3 -6 4 -6 3 -6 4 -6 3 -6 4 -6 3 -6 4 -6 4 -6 4 -6 4 -5 5 -6 4 -5 5 -5 5 -6 4 -5 5 -5 5 -5 5 -4 6 -5 5 -4 6 -5 5 -4 6 -4 6 -4 5 -4 6 -4 6 -4 6 -3 6 -4 6 -4 6 -3 6 -3 6 -4 7 -3 6 -3 6 -3 6 -4" stroke-opacity="0.26" stroke-width="0.9"/><path d="M455 463l3 -6 4 -7 3 -6 3 -6 4 -6 3 -6 3 -6 4 -6 4 -6 3 -6 4 -6 3 -6 4 -6 4 -6 4 -6 5 -5 4 -6 4 -5 5 -5 5 -6 4 -5 5 -5 5 -5 5 -4 6 -5 5 -4 6 -5 5 -4 6 -4 6 -4 6 -4 5 -4 6 -3 6 -4 6 -4 6 -3 6 -4 6 -3 7 -4 6 -3 6 -3 6 -3 7 -3" stroke-opacity="0.67" stroke-width="0.7"/><path d="M464 478l3 -6 3 -6 3 -6 4 -6 3 -6 3 -7 4 -6 3 -6 4 -6 3 -6 4 -6 3 -6 4 -6 4 -6 4 -6 4 -6 4 -5 4 -6 4 -5 4 -6 5 -5 4 -6 5 -5 5 -5 5 -5 5 -4 5 -5 6 -5 5 -4 6 -4 5 -4 6 -4 6 -4 6 -4 6 -4 6 -3 6 -4 6 -3 6 -4 6 -3 6 -3 7 -4 6 -3 6 -3 6 -3 7 -3" stroke-opacity="0.34" stroke-width="1.3"/><path d="M470 463l3 -6 3 -7 3 -6 4 -6 3 -6 4 -6 3 -6 4 -6 3 -6 4 -6 3 -6 4 -6 4 -6 4 -6 4 -5 5 -6 4 -5 4 -6 5 -5 4 -5 5 -5 5 -5 5 -5 5 -5 6 -5 5 -4 6 -4 5 -4 6 -4 6 -4 6 -4 6 -4 5 -4 6 -3 7 -4 6 -3 6 -4 6 -3 6 -3 6 -3 7 -4 6 -3 6 -3" stroke-opacity="0.30" stroke-width="1.3"/><path d="M481 457l3 -6 4 -6 3 -6 3 -7 4 -6 3 -6 4 -6 4 -6 3 -6 4 -6 4 -5 4 -6 4 -6 4 -6 4 -5 4 -6 5 -5 4 -6 5 -5 5 -5 5 -5 5 -5 5 -4 5 -5 5 -5 6 -4 6 -4 5 -4 6 -4 6 -4 6 -3 6 -4 6 -3 6 -4 6 -3 7 -4 6 -3 6 -3 6 -3 6 -4 7 -3 6 -3" stroke-opacity="0.22" stroke-width="0.9"/><path d="M495 475l4 -6 3 -6 3 -6 4 -6 3 -7 4 -6 3 -6 4 -6 3 -6 4 -6 3 -6 4 -6 4 -6 4 -6 3 -5 4 -6 5 -6 4 -5 4 -6 5 -5 4 -6 5 -5 5 -5 5 -5 5 -5 5 -4 5 -5 6 -4 5 -4 6 -4 6 -4 6 -4 6 -3 6 -4 6 -3 6 -4 6 -3 7 -3 6 -4 6 -3 6 -3 6 -3 7 -3" stroke-opacity="0.20" stroke-width="1.2"/><path d="M498 475l3 -6 4 -6 3 -6 4 -6 3 -6 4 -7 3 -6 4 -6 3 -6 4 -6 3 -6 4 -6 4 -6 3 -5 4 -6 4 -6 5 -6 4 -5 4 -6 5 -5 4 -5 5 -6 5 -5 5 -5 5 -4 5 -5 5 -5 6 -4 5 -4 6 -4 6 -4 6 -3 6 -4 6 -4 6 -3 6 -3 7 -4 6 -3 6 -3 6 -4 6 -3 7 -3 6 -3" stroke-opacity="0.31" stroke-width="0.9"/><path d="M521 488l3 -6 4 -6 3 -7 3 -6 4 -6 3 -6 4 -6 3 -6 4 -6 3 -6 4 -6 3 -6 4 -6 4 -6 3 -6 4 -6 4 -6 4 -6 4 -5 4 -6 5 -5 4 -6 5 -5 5 -5 5 -5 5 -5 5 -4 5 -5 6 -4 6 -4 5 -4 6 -4 6 -4 6 -3 6 -4 6 -3 6 -4 7 -3 6 -3 6 -4 6 -3 6 -3" stroke-opacity="0.14" stroke-width="1.2"/><path d="M524 491l3 -6 4 -7 3 -6 3 -6 4 -6 3 -6 3 -6 4 -6 3 -6 4 -6 3 -6 4 -6 4 -6 3 -6 4 -6 4 -6 4 -6 4 -6 4 -6 4 -5 4 -6 5 -5 4 -5 5 -5 5 -5 5 -5 5 -5 6 -4 5 -5 6 -4 5 -4 6 -4 6 -4 6 -3 6 -4 6 -3 6 -4 6 -3 7 -4 6 -3 6 -3 6 -3" stroke-opacity="0.22" stroke-width="1.1"/><path d="M544 499l3 -7 4 -6 3 -6 3 -6 4 -6 3 -6 3 -7 4 -6 3 -6 4 -6 3 -6 4 -6 3 -6 4 -6 4 -6 4 -6 3 -5 4 -6 4 -6 4 -6 5 -5 4 -6 5 -5 4 -5 5 -5 5 -5 5 -5 6 -5 5 -4 5 -4 6 -5 6 -4 5 -4 6 -3 6 -4 6 -4 7 -3 6 -3 6 -4 6 -3 6 -3" stroke-opacity="0.06" stroke-width="1.7"/><path d="M553 528l3 -6 3 -6 4 -7" stroke-opacity="0.67" stroke-width="0.8"/></g></mask>
</defs>
<g clip-path="url(#sil)" fill-rule="evenodd">
<g><rect x="126" y="126" width="652" height="426" fill="#000086"/><use href="#c1" fill="#000092"/><use href="#c2" fill="#00009e"/><use href="#c3" fill="#0000aa"/><use href="#c4" fill="#0000b6"/><use href="#c5" fill="#0000c2"/><use href="#c6" fill="#0000ce"/><use href="#c7" fill="#0000db"/><use href="#c8" fill="#0000e7"/><use href="#c9" fill="#0000f3"/><use href="#c10" fill="#0000ff"/><use href="#c11" fill="#000cff"/><use href="#c12" fill="#0018ff"/><use href="#c13" fill="#0024ff"/><use href="#c14" fill="#0031ff"/><use href="#c15" fill="#003dff"/><use href="#c16" fill="#0049ff"/><use href="#c17" fill="#0055ff"/><use href="#c18" fill="#0061ff"/><use href="#c19" fill="#006dff"/><use href="#c20" fill="#0079ff"/><use href="#c21" fill="#0086ff"/><use href="#c22" fill="#0092ff"/><use href="#c23" fill="#009eff"/><use href="#c24" fill="#00aaff"/><use href="#c25" fill="#00b6ff"/><use href="#c26" fill="#00c2ff"/><use href="#c27" fill="#00ceff"/><use href="#c28" fill="#00dbff"/><use href="#c29" fill="#00e7ff"/><use href="#c30" fill="#00f3ff"/><use href="#c31" fill="#00ffff"/><use href="#c32" fill="#0cfff3"/><use href="#c33" fill="#18ffe7"/><use href="#c34" fill="#24ffdb"/><use href="#c35" fill="#31ffce"/><use href="#c36" fill="#3dffc2"/><use href="#c37" fill="#49ffb6"/><use href="#c38" fill="#55ffaa"/><use href="#c39" fill="#61ff9e"/><use href="#c40" fill="#6dff92"/><use href="#c41" fill="#79ff86"/><use href="#c42" fill="#86ff79"/><use href="#c43" fill="#92ff6d"/><use href="#c44" fill="#9eff61"/><use href="#c45" fill="#aaff55"/><use href="#c46" fill="#b6ff49"/><use href="#c47" fill="#c2ff3d"/><use href="#c48" fill="#ceff31"/><use href="#c49" fill="#dbff24"/><use href="#c50" fill="#e7ff18"/><use href="#c51" fill="#f3ff0c"/><use href="#c52" fill="#ffff00"/><use href="#c53" fill="#fff300"/><use href="#c54" fill="#ffe700"/><use href="#c55" fill="#ffdb00"/><use href="#c56" fill="#ffce00"/><use href="#c57" fill="#ffc200"/><use href="#c58" fill="#ffb600"/><use href="#c59" fill="#ffaa00"/><use href="#c60" fill="#ff9e00"/><use href="#c61" fill="#ff9200"/><use href="#c62" fill="#ff8600"/><use href="#c63" fill="#ff7900"/><use href="#c64" fill="#ff6d00"/><use href="#c65" fill="#ff6100"/><use href="#c66" fill="#ff5500"/><use href="#c67" fill="#ff4900"/><use href="#c68" fill="#ff3d00"/><use href="#c69" fill="#ff3100"/><use href="#c70" fill="#ff2400"/><use href="#c71" fill="#ff1800"/><use href="#c72" fill="#ff0c00"/><use href="#c73" fill="#ff0000"/><use href="#c74" fill="#f30000"/><use href="#c75" fill="#e70000"/><use href="#c76" fill="#db0000"/><use href="#c77" fill="#ce0000"/><use href="#c78" fill="#c20000"/><use href="#c79" fill="#b60000"/><use href="#c80" fill="#aa0000"/><use href="#c81" fill="#9e0000"/></g>
<g mask="url(#mL)"><rect x="126" y="126" width="652" height="426" fill="#0000b0"/><use href="#c1" fill="#0000bd"/><use href="#c2" fill="#0000c9"/><use href="#c3" fill="#0000d5"/><use href="#c4" fill="#0000e1"/><use href="#c5" fill="#0000ed"/><use href="#c6" fill="#0000f9"/><use href="#c7" fill="#0006ff"/><use href="#c8" fill="#0013ff"/><use href="#c9" fill="#001fff"/><use href="#c10" fill="#002bff"/><use href="#c11" fill="#0037ff"/><use href="#c12" fill="#0043ff"/><use href="#c13" fill="#004fff"/><use href="#c14" fill="#005bff"/><use href="#c15" fill="#0068ff"/><use href="#c16" fill="#0074ff"/><use href="#c17" fill="#0080ff"/><use href="#c18" fill="#008cff"/><use href="#c19" fill="#0098ff"/><use href="#c20" fill="#00a4ff"/><use href="#c21" fill="#00b0ff"/><use href="#c22" fill="#00bdff"/><use href="#c23" fill="#00c9ff"/><use href="#c24" fill="#00d5ff"/><use href="#c25" fill="#00e1ff"/><use href="#c26" fill="#00edff"/><use href="#c27" fill="#00f9ff"/><use href="#c28" fill="#06fff9"/><use href="#c29" fill="#13ffec"/><use href="#c30" fill="#1fffe0"/><use href="#c31" fill="#2bffd4"/><use href="#c32" fill="#37ffc8"/><use href="#c33" fill="#43ffbc"/><use href="#c34" fill="#4fffb0"/><use href="#c35" fill="#5bffa4"/><use href="#c36" fill="#68ff97"/><use href="#c37" fill="#74ff8b"/><use href="#c38" fill="#80ff7f"/><use href="#c39" fill="#8cff73"/><use href="#c40" fill="#98ff67"/><use href="#c41" fill="#a4ff5b"/><use href="#c42" fill="#b0ff4f"/><use href="#c43" fill="#bdff42"/><use href="#c44" fill="#c9ff36"/><use href="#c45" fill="#d5ff2a"/><use href="#c46" fill="#e1ff1e"/><use href="#c47" fill="#edff12"/><use href="#c48" fill="#f9ff06"/><use href="#c49" fill="#fff900"/><use href="#c50" fill="#ffec00"/><use href="#c51" fill="#ffe000"/><use href="#c52" fill="#ffd400"/><use href="#c53" fill="#ffc800"/><use href="#c54" fill="#ffbc00"/><use href="#c55" fill="#ffb000"/><use href="#c56" fill="#ffa400"/><use href="#c57" fill="#ff9700"/><use href="#c58" fill="#ff8b00"/><use href="#c59" fill="#ff7f00"/><use href="#c60" fill="#ff7300"/><use href="#c61" fill="#ff6700"/><use href="#c62" fill="#ff5b00"/><use href="#c63" fill="#ff4f00"/><use href="#c64" fill="#ff4200"/><use href="#c65" fill="#ff3600"/><use href="#c66" fill="#ff2a00"/><use href="#c67" fill="#ff1e00"/><use href="#c68" fill="#ff1200"/><use href="#c69" fill="#ff0600"/><use href="#c70" fill="#f90000"/><use href="#c71" fill="#ec0000"/><use href="#c72" fill="#e00000"/><use href="#c73" fill="#d40000"/><use href="#c74" fill="#c80000"/><use href="#c75" fill="#bc0000"/><use href="#c76" fill="#b00000"/><use href="#c77" fill="#a40000"/><use href="#c78" fill="#970000"/><use href="#c79" fill="#8b0000"/><use href="#c80" fill="#800000"/><use href="#c81" fill="#800000"/></g>
<g mask="url(#mD)"><rect x="126" y="126" width="652" height="426" fill="#000080"/><use href="#c1" fill="#000080"/><use href="#c2" fill="#000080"/><use href="#c3" fill="#000080"/><use href="#c4" fill="#00008b"/><use href="#c5" fill="#000097"/><use href="#c6" fill="#0000a4"/><use href="#c7" fill="#0000b0"/><use href="#c8" fill="#0000bc"/><use href="#c9" fill="#0000c8"/><use href="#c10" fill="#0000d4"/><use href="#c11" fill="#0000e0"/><use href="#c12" fill="#0000ec"/><use href="#c13" fill="#0000f9"/><use href="#c14" fill="#0006ff"/><use href="#c15" fill="#0012ff"/><use href="#c16" fill="#001eff"/><use href="#c17" fill="#002aff"/><use href="#c18" fill="#0036ff"/><use href="#c19" fill="#0042ff"/><use href="#c20" fill="#004fff"/><use href="#c21" fill="#005bff"/><use href="#c22" fill="#0067ff"/><use href="#c23" fill="#0073ff"/><use href="#c24" fill="#007fff"/><use href="#c25" fill="#008bff"/><use href="#c26" fill="#0097ff"/><use href="#c27" fill="#00a4ff"/><use href="#c28" fill="#00b0ff"/><use href="#c29" fill="#00bcff"/><use href="#c30" fill="#00c8ff"/><use href="#c31" fill="#00d4ff"/><use href="#c32" fill="#00e0ff"/><use href="#c33" fill="#00ecff"/><use href="#c34" fill="#00f9ff"/><use href="#c35" fill="#06fff9"/><use href="#c36" fill="#12ffed"/><use href="#c37" fill="#1effe1"/><use href="#c38" fill="#2affd5"/><use href="#c39" fill="#36ffc9"/><use href="#c40" fill="#42ffbd"/><use href="#c41" fill="#4fffb0"/><use href="#c42" fill="#5bffa4"/><use href="#c43" fill="#67ff98"/><use href="#c44" fill="#73ff8c"/><use href="#c45" fill="#7fff80"/><use href="#c46" fill="#8bff74"/><use href="#c47" fill="#97ff68"/><use href="#c48" fill="#a4ff5b"/><use href="#c49" fill="#b0ff4f"/><use href="#c50" fill="#bcff43"/><use href="#c51" fill="#c8ff37"/><use href="#c52" fill="#d4ff2b"/><use href="#c53" fill="#e0ff1f"/><use href="#c54" fill="#ecff13"/><use href="#c55" fill="#f9ff06"/><use href="#c56" fill="#fff900"/><use href="#c57" fill="#ffed00"/><use href="#c58" fill="#ffe100"/><use href="#c59" fill="#ffd500"/><use href="#c60" fill="#ffc900"/><use href="#c61" fill="#ffbd00"/><use href="#c62" fill="#ffb000"/><use href="#c63" fill="#ffa400"/><use href="#c64" fill="#ff9800"/><use href="#c65" fill="#ff8c00"/><use href="#c66" fill="#ff8000"/><use href="#c67" fill="#ff7400"/><use href="#c68" fill="#ff6800"/><use href="#c69" fill="#ff5b00"/><use href="#c70" fill="#ff4f00"/><use href="#c71" fill="#ff4300"/><use href="#c72" fill="#ff3700"/><use href="#c73" fill="#ff2b00"/><use href="#c74" fill="#ff1f00"/><use href="#c75" fill="#ff1300"/><use href="#c76" fill="#ff0600"/><use href="#c77" fill="#f90000"/><use href="#c78" fill="#ed0000"/><use href="#c79" fill="#e10000"/><use href="#c80" fill="#d50000"/><use href="#c81" fill="#c90000"/></g>
</g>

<g fill="none" stroke="#000" stroke-width="1"><path d="M132.5,305.3 L132.5,567.8 L550.0,664.5 L771.5,484.0" /><path d="M132.5,567.8 L127.5,571.9"/><path d="M173.0,577.2 L168.0,581.3"/><path d="M201.7,583.8 L196.7,587.9"/><path d="M224.0,589.0 L219.0,593.1"/><path d="M242.2,593.2 L237.2,597.3"/><path d="M257.6,596.8 L252.6,600.9"/><path d="M271.0,599.9 L265.9,604.0"/><path d="M282.7,602.6 L277.7,606.7"/><path d="M293.3,605.0 L284.7,612.0"/><path d="M362.5,621.1 L357.5,625.2"/><path d="M403.0,630.5 L398.0,634.6"/><path d="M431.7,637.1 L426.7,641.2"/><path d="M454.0,642.3 L449.0,646.4"/><path d="M472.2,646.5 L467.2,650.6"/><path d="M487.6,650.1 L482.6,654.2"/><path d="M501.0,653.1 L495.9,657.3"/><path d="M512.7,655.9 L507.7,660.0"/><path d="M523.3,658.3 L514.7,665.3"/><path d="M574.6,644.4 L585.3,646.9"/><path d="M605.4,619.4 L616.1,621.9"/><path d="M636.1,594.3 L646.9,596.8"/><path d="M666.9,569.2 L677.6,571.7"/><path d="M697.7,544.2 L708.4,546.6"/><path d="M728.4,519.1 L739.1,521.6"/><path d="M759.2,494.0 L769.9,496.5"/><path d="M132.5,567.8 L121.8,565.3"/><path d="M132.5,553.9 L126.2,552.4"/><path d="M132.5,545.7 L126.2,544.2"/><path d="M132.5,539.9 L126.2,538.5"/><path d="M132.5,535.4 L126.2,534.0"/><path d="M132.5,531.8 L126.2,530.3"/><path d="M132.5,528.7 L126.2,527.2"/><path d="M132.5,526.0 L126.2,524.5"/><path d="M132.5,523.6 L126.2,522.2"/><path d="M132.5,521.5 L121.8,519.0"/><path d="M132.5,507.6 L126.2,506.1"/><path d="M132.5,499.4 L126.2,497.9"/><path d="M132.5,493.6 L126.2,492.2"/><path d="M132.5,489.1 L126.2,487.7"/><path d="M132.5,485.5 L126.2,484.0"/><path d="M132.5,482.4 L126.2,480.9"/><path d="M132.5,479.7 L126.2,478.2"/><path d="M132.5,477.3 L126.2,475.9"/><path d="M132.5,475.2 L121.8,472.7"/><path d="M132.5,461.3 L126.2,459.8"/><path d="M132.5,453.1 L126.2,451.6"/><path d="M132.5,447.3 L126.2,445.9"/><path d="M132.5,442.8 L126.2,441.4"/><path d="M132.5,439.2 L126.2,437.7"/><path d="M132.5,436.1 L126.2,434.6"/><path d="M132.5,433.4 L126.2,431.9"/><path d="M132.5,431.0 L126.2,429.6"/><path d="M132.5,428.9 L121.8,426.4"/><path d="M132.5,415.0 L126.2,413.5"/><path d="M132.5,406.8 L126.2,405.3"/><path d="M132.5,401.0 L126.2,399.6"/><path d="M132.5,396.5 L126.2,395.1"/><path d="M132.5,392.9 L126.2,391.4"/><path d="M132.5,389.8 L126.2,388.3"/><path d="M132.5,387.1 L126.2,385.6"/><path d="M132.5,384.7 L126.2,383.3"/><path d="M132.5,382.6 L121.8,380.1"/><path d="M132.5,368.7 L126.2,367.2"/><path d="M132.5,360.5 L126.2,359.0"/><path d="M132.5,354.7 L126.2,353.3"/><path d="M132.5,350.2 L126.2,348.8"/><path d="M132.5,346.6 L126.2,345.1"/><path d="M132.5,343.5 L126.2,342.0"/><path d="M132.5,340.8 L126.2,339.3"/><path d="M132.5,338.4 L126.2,337.0"/><path d="M132.5,336.3 L121.8,333.8"/><path d="M132.5,322.4 L126.2,320.9"/><path d="M132.5,314.2 L126.2,312.7"/><path d="M132.5,308.4 L126.2,307.0"/></g>
<g font-family="'Liberation Sans',Arial,Helvetica,sans-serif" font-size="13px" fill="#000"><text x="450.5" y="115.5" text-anchor="middle">3 Dimensionale Darstellung der Abstrahlcharakteristik</text><text x="380.5" y="716.0" text-anchor="middle">Frequenz</text><text x="722.0" y="676.5" text-anchor="middle">Abstrahlwinkel</text><text transform="translate(87,437.5) rotate(-90)" text-anchor="middle">dB SPL</text><text x="96.3" y="571.8">10<tspan dy="-8" font-size="9.5px">-6</tspan></text><text x="96.3" y="525.5">10<tspan dy="-8" font-size="9.5px">-5</tspan></text><text x="96.3" y="479.2">10<tspan dy="-8" font-size="9.5px">-4</tspan></text><text x="96.3" y="432.9">10<tspan dy="-8" font-size="9.5px">-3</tspan></text><text x="96.3" y="386.6">10<tspan dy="-8" font-size="9.5px">-2</tspan></text><text x="96.3" y="340.3">10<tspan dy="-8" font-size="9.5px">-1</tspan></text><text x="264.0" y="632.7">10<tspan dy="-8" font-size="9.5px">4</tspan></text><text x="492.5" y="684.2">10<tspan dy="-8" font-size="9.5px">5</tspan></text><text x="587.6" y="659.9" >5</text><text x="618.4" y="634.9" >10</text><text x="649.1" y="609.8" >15</text><text x="679.9" y="584.7" >20</text><text x="710.7" y="559.7" >25</text><text x="741.4" y="534.6" >30</text><text x="772.2" y="509.5" >35</text><text x="914.0" y="670.2" >0</text><text x="914.0" y="607.3" >0.05</text><text x="914.0" y="544.5" >0.1</text><text x="914.0" y="481.6" >0.15</text><text x="914.0" y="418.7" >0.2</text><text x="914.0" y="355.9" >0.25</text><text x="914.0" y="293.0" >0.3</text><text x="914.0" y="230.1" >0.35</text><text x="914.0" y="167.2" >0.4</text></g>
<defs><linearGradient id="jetg" x1="0" y1="1" x2="0" y2="0"><stop offset="0" stop-color="#000080"/><stop offset="0.125" stop-color="#0000ff"/><stop offset="0.375" stop-color="#00ffff"/><stop offset="0.625" stop-color="#ffff00"/><stop offset="0.875" stop-color="#ff0000"/><stop offset="1" stop-color="#800000"/></linearGradient></defs><rect x="851.5" y="126.5" width="60.0" height="539.0" fill="url(#jetg)" stroke="#000" stroke-width="1"/><path d="M851.5,602.6 h5 M911.5,602.6 h-5 M851.5,539.8 h5 M911.5,539.8 h-5 M851.5,476.9 h5 M911.5,476.9 h-5 M851.5,414.0 h5 M911.5,414.0 h-5 M851.5,351.2 h5 M911.5,351.2 h-5 M851.5,288.3 h5 M911.5,288.3 h-5 M851.5,225.4 h5 M911.5,225.4 h-5 M851.5,162.5 h5 M911.5,162.5 h-5" stroke="#000" stroke-width="1" fill="none"/>
</svg>
<div id="tb">
<svg width="16" height="16" viewBox="0 0 16 16" style="position:absolute;left:1px;top:4px">
<rect width="16" height="16" fill="#06060a"/>
<path d="M0.8 9.2 L4.2 7 L6.4 8.6 L8.6 4.6 L8 10.2 L4.4 11.6 Z" fill="#6d8795"/>
<path d="M2.2 9.4 L4.3 8 L6 9.2 L4.6 10.6 Z" fill="#9db2bc"/>
<path d="M5.6 13.6 C8.2 12 9.4 7.8 10.1 1.4 C11 5 12.4 8.6 15 11.6 C13 10.6 11.8 10 10.8 10.6 C9.4 11.6 8.4 14.6 5.6 13.6 Z" fill="#c12c16"/>
<path d="M5.8 13.9 C8.6 12.4 9.3 6.8 10.1 1.2 C10.9 5 11.2 8.6 10.7 10.8 C9.6 12.8 8 14.8 5.8 13.9 Z" fill="#f3a516"/>
<path d="M6.6 13.7 C8.7 12.2 9.3 7.8 9.9 3.4 C10.3 6.4 10.3 9 9.9 10.8 C9 12.5 7.9 14 6.6 13.7 Z" fill="#fbe552"/>
</svg>
<span class="ttl">Figure No. 1</span>
<div class="wb" style="left:954px"><svg width="18" height="17" viewBox="0 0 18 17"><rect x="4.2" y="11.6" width="7.2" height="2.8" fill="#1c1c3a" stroke="#fff" stroke-width=".6"/></svg></div>
<div class="wb" style="left:977px"><svg width="18" height="17" viewBox="0 0 18 17"><path d="M8 7.4 V4.6 H14 V10 H11.6" fill="none" stroke="#1c1c3a" stroke-width="1.4"/><rect x="4.6" y="8.2" width="6.6" height="5.4" fill="none" stroke="#1c1c3a" stroke-width="1.4"/></svg></div>
<div class="wb cl" style="left:1000px;width:21px"><svg width="19" height="17" viewBox="0 0 19 17"><path d="M4.5 3.5 L14.5 13.5 M14.5 3.5 L4.5 13.5" stroke="#fff" stroke-width="2.2" stroke-linecap="round"/></svg></div>
</div>
<div id="mb">
<span style="left:5.5px"><u>F</u>ile</span><span style="left:33.5px"><u>E</u>dit</span><span style="left:64px"><u>V</u>iew</span><span style="left:97.5px"><u>I</u>nsert</span><span style="left:139px"><u>T</u>ools</span><span style="left:176px"><u>W</u>indow</span><span style="left:226px"><u>H</u>elp</span>
</div>
<div id="sep"></div>
<div id="tl"><div class="grip"></div><div class="vs" style="left:109px"></div><div class="vs" style="left:213px"></div><div class="pressed"></div></div>
<svg id="tlsvg" width="300" height="31" viewBox="0 48 300 31">
<!-- new -->
<path d="M16.5 55.5 H23.5 L26.5 58.5 V67.5 H16.5 Z" fill="#fff" stroke="#000" stroke-width="1"/><path d="M23.5 55.5 V58.5 H26.5" fill="none" stroke="#000" stroke-width="1"/>
<!-- open -->
<path d="M38.5 67.5 V57.5 H42.5 L43.5 58.5 H48.5 V60.5" fill="#f7f48a" stroke="#000" stroke-width="1"/>
<path d="M38.5 67.5 L42.5 61.5 H54 L49.5 67.5 Z" fill="#8a8a20" stroke="#000" stroke-width="1"/>
<path d="M39.3 66 V58.3 H42.2 L43.2 59.3 H47.7 V61" fill="#f7f48a" stroke="none"/>
<path d="M45.5 56.5 C47 54.6 50 54.6 52 57" fill="none" stroke="#000" stroke-width="1"/><path d="M53 54.6 V58 H49.8 Z" fill="#000"/>
<!-- save -->
<rect x="63.5" y="55.5" width="13" height="12" fill="#8a8a20" stroke="#000" stroke-width="1"/>
<rect x="66" y="56" width="8" height="4.6" fill="#fff"/><rect x="66.5" y="62.5" width="7" height="5" fill="#000"/><rect x="70.6" y="63.6" width="1.8" height="3" fill="#e8e8e8"/>
<!-- print -->
<path d="M89.5 59.5 L91.5 54.5 H98.5 L97.5 59.5" fill="#fff" stroke="#000" stroke-width="1"/>
<path d="M86.5 61 C86.5 59.8 87.3 59.5 88.5 59.5 H99 C100.6 59.5 101.5 60 101.5 61.3 V66 C101.5 67 101 67.5 100 67.5 H88 C87 67.5 86.5 67 86.5 66 Z" fill="#f4f4f4" stroke="#000" stroke-width="1"/>
<path d="M87 62.5 H101 M87 65 H101" stroke="#000" stroke-width="1"/><rect x="96.4" y="63" width="3.4" height="1.6" fill="#e4e44a"/>
<path d="M92 56.3 H97.5 M91.6 57.8 H97" stroke="#777" stroke-width=".7"/>
<!-- pointer -->
<path d="M122 53.6 V66 L124.9 63.2 L127.1 68 L128.9 67.1 L126.7 62.5 H130.6 Z" fill="#000"/>
<!-- A -->
<text x="149.7" y="67.6" text-anchor="middle" font-family="'Liberation Sans',Arial,sans-serif" font-weight="bold" font-size="16.5px" fill="#000">A</text>
<!-- NE arrow -->
<path d="M168.8 67 L179 56.8" stroke="#000" stroke-width="2" fill="none"/><path d="M172.6 55.4 H180.4 V63.2" stroke="#000" stroke-width="2" fill="none"/>
<!-- line -->
<path d="M192.4 67.2 L203.6 56.4" stroke="#000" stroke-width="2" fill="none"/>
<!-- zoom in -->
<circle cx="232.6" cy="59.6" r="5" fill="#fff" stroke="#000" stroke-width="1.3"/><path d="M229.4 63.2 L224 68.2" stroke="#000" stroke-width="2.2"/><path d="M230 59.6 H235.2 M232.6 57 V62.2" stroke="#000" stroke-width="1.5"/>
<!-- zoom out -->
<circle cx="256.6" cy="59.6" r="5" fill="#fff" stroke="#000" stroke-width="1.3"/><path d="M253.4 63.2 L248 68.2" stroke="#000" stroke-width="2.2"/><path d="M254 59.6 H259.2" stroke="#000" stroke-width="1.5"/>
<!-- rotate -->
<circle cx="279.4" cy="62.6" r="5.6" fill="none" stroke="#000" stroke-width="1.1" stroke-dasharray="1.2 1.7"/><path d="M274.2 58.8 L277.8 56.6 L277.6 60.4 Z" fill="#000"/>
</svg>
<div id="bot"><i></i></div><div id="botw"></div>

</body></html>
